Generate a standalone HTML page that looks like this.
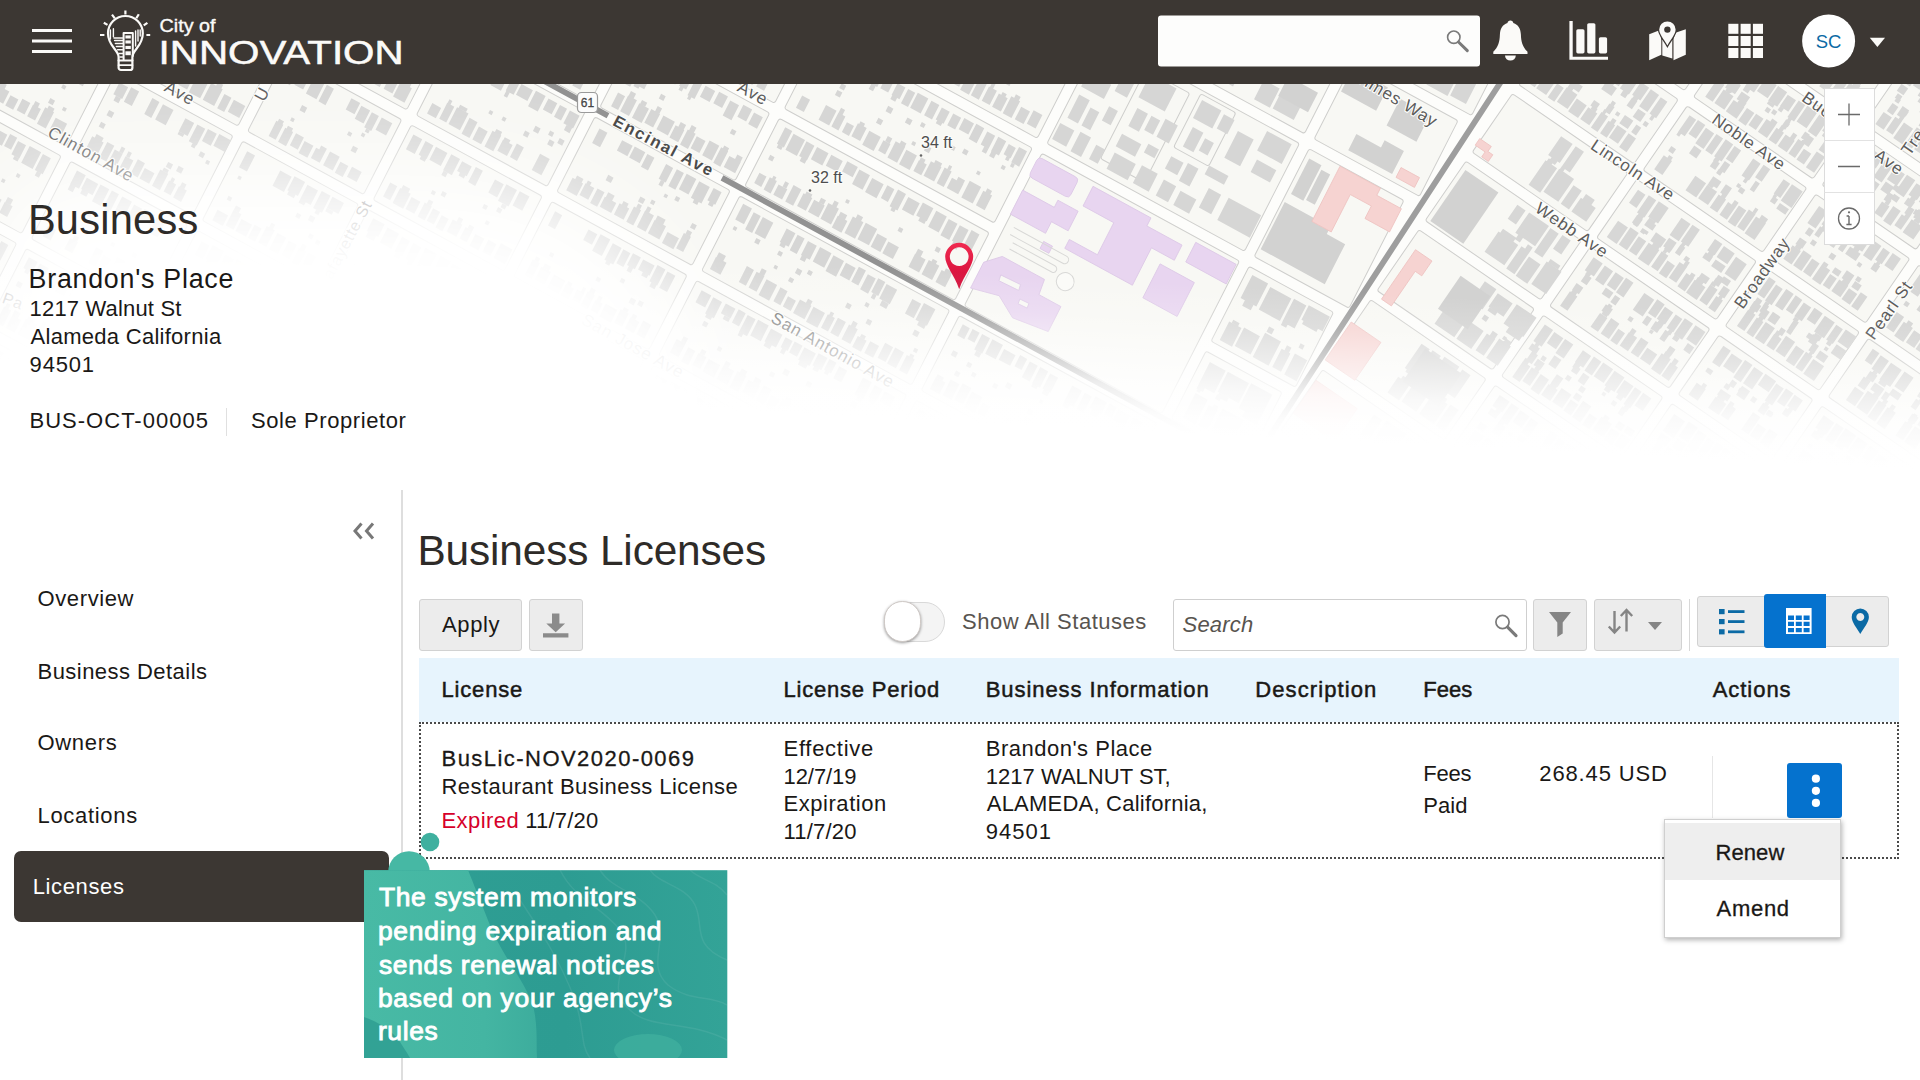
<!DOCTYPE html>
<html lang="en">
<head>
<meta charset="utf-8">
<title>Business Licenses</title>
<style>
*{box-sizing:border-box;margin:0;padding:0}
html,body{width:1920px;height:1080px;overflow:hidden;background:#fff}
body{font-family:"Liberation Sans",sans-serif;color:#1a1816;position:relative}
.abs{position:absolute}
.t{position:absolute;white-space:nowrap;line-height:1}
#hdr{position:absolute;left:0;top:0;width:1920px;height:84px;background:#3c3733}
#map{position:absolute;left:0;top:84px;width:1920px;height:400px;overflow:hidden;background:#fafaf6}
.btn{position:absolute;background:#ececec;border:1px solid #d2d2d2;border-radius:3px}
.med{-webkit-text-stroke:0.5px #1a1816}
.med2{-webkit-text-stroke:0.3px #1a1816}
.cal{-webkit-text-stroke:0.9px #fff}
</style>
</head>
<body>
<div id="map">
<svg width="1920" height="400" viewBox="0 0 1920 400" style="position:absolute;left:0;top:0" font-family="Liberation Sans, sans-serif">
<defs>
<clipPath id="cl"><path d="M-10 -10 H1506 L1302 303 L1232 410 H-10z"/></clipPath>
<clipPath id="cr"><path d="M1506 -10 H1930 V410 H1232 L1302 303z"/></clipPath>
<linearGradient id="fb" gradientUnits="userSpaceOnUse" x1="800" y1="180" x2="792.500" y2="330"><stop offset="0" stop-color="#fff" stop-opacity="0"/><stop offset="0.25" stop-color="#fff" stop-opacity="0.2"/><stop offset="0.45" stop-color="#fff" stop-opacity="0.5"/><stop offset="0.7" stop-color="#fff" stop-opacity="0.85"/><stop offset="0.88" stop-color="#fff" stop-opacity="0.97"/><stop offset="1" stop-color="#fff" stop-opacity="1"/></linearGradient>
<radialGradient id="fg" gradientUnits="userSpaceOnUse" cx="0" cy="0" r="1" gradientTransform="translate(300 256) scale(450 230)"><stop offset="0" stop-color="#fff" stop-opacity="1"/><stop offset="0.45" stop-color="#fff" stop-opacity="1"/><stop offset="0.61" stop-color="#fff" stop-opacity="0.9"/><stop offset="0.735" stop-color="#fff" stop-opacity="0.5"/><stop offset="0.826" stop-color="#fff" stop-opacity="0.25"/><stop offset="1" stop-color="#fff" stop-opacity="0"/></radialGradient>
<linearGradient id="pg" x1="0" y1="0" x2="0" y2="1"><stop offset="0" stop-color="#f02a50"/><stop offset="1" stop-color="#cf0a36"/></linearGradient>
</defs>
<rect width="1920" height="400" fill="#fdfdfb"/>
<g clip-path="url(#cl)"><g transform="matrix(0.8780,0.4787,-0.4540,0.8910,957.0,224.0)">
<g fill="#f8f8f4" stroke="#cececc" stroke-width="1">
<rect x="-1144.5" y="-494.5" width="134" height="79" rx="2.5"/>
<rect x="-999.5" y="-494.5" width="132" height="79" rx="2.5"/>
<rect x="-856.5" y="-494.5" width="133" height="79" rx="2.5"/>
<rect x="-712.5" y="-494.5" width="132" height="79" rx="2.5"/>
<rect x="-569.5" y="-494.5" width="149" height="79" rx="2.5"/>
<rect x="-409.5" y="-494.5" width="154" height="79" rx="2.5"/>
<rect x="-244.5" y="-494.5" width="239" height="79" rx="2.5"/>
<rect x="5.5" y="-494.5" width="225" height="79" rx="2.5"/>
<rect x="-1144.5" y="-404.5" width="134" height="85" rx="2.5"/>
<rect x="-999.5" y="-404.5" width="132" height="85" rx="2.5"/>
<rect x="-856.5" y="-404.5" width="133" height="85" rx="2.5"/>
<rect x="-712.5" y="-404.5" width="132" height="85" rx="2.5"/>
<rect x="-569.5" y="-404.5" width="149" height="85" rx="2.5"/>
<rect x="-409.5" y="-404.5" width="154" height="85" rx="2.5"/>
<rect x="-244.5" y="-404.5" width="239" height="85" rx="2.5"/>
<rect x="5.5" y="-404.5" width="225" height="85" rx="2.5"/>
<rect x="-1144.5" y="-308.5" width="134" height="121" rx="2.5"/>
<rect x="-999.5" y="-308.5" width="132" height="121" rx="2.5"/>
<rect x="-856.5" y="-308.5" width="133" height="121" rx="2.5"/>
<rect x="-712.5" y="-308.5" width="132" height="121" rx="2.5"/>
<rect x="-569.5" y="-308.5" width="149" height="121" rx="2.5"/>
<rect x="-409.5" y="-308.5" width="154" height="121" rx="2.5"/>
<rect x="-244.5" y="-308.5" width="239" height="121" rx="2.5"/>
<rect x="-1144.5" y="-176.5" width="134" height="84" rx="2.5"/>
<rect x="-999.5" y="-176.5" width="132" height="84" rx="2.5"/>
<rect x="-856.5" y="-176.5" width="133" height="84" rx="2.5"/>
<rect x="-712.5" y="-176.5" width="132" height="84" rx="2.5"/>
<rect x="-569.5" y="-176.5" width="149" height="84" rx="2.5"/>
<rect x="-409.5" y="-176.5" width="154" height="84" rx="2.5"/>
<rect x="-244.5" y="-176.5" width="239" height="84" rx="2.5"/>
<rect x="-1144.5" y="-81.5" width="134" height="76" rx="2.5"/>
<rect x="-999.5" y="-81.5" width="132" height="76" rx="2.5"/>
<rect x="-856.5" y="-81.5" width="133" height="76" rx="2.5"/>
<rect x="-712.5" y="-81.5" width="132" height="76" rx="2.5"/>
<rect x="-569.5" y="-81.5" width="149" height="76" rx="2.5"/>
<rect x="-409.5" y="-81.5" width="154" height="76" rx="2.5"/>
<rect x="-244.5" y="-81.5" width="239" height="76" rx="2.5"/>
<rect x="-1144.5" y="5.5" width="134" height="84" rx="2.5"/>
<rect x="-999.5" y="5.5" width="132" height="84" rx="2.5"/>
<rect x="-856.5" y="5.5" width="133" height="84" rx="2.5"/>
<rect x="-712.5" y="5.5" width="132" height="84" rx="2.5"/>
<rect x="-569.5" y="5.5" width="149" height="84" rx="2.5"/>
<rect x="-409.5" y="5.5" width="154" height="84" rx="2.5"/>
<rect x="-244.5" y="5.5" width="239" height="84" rx="2.5"/>
<rect x="5.5" y="5.5" width="225" height="84" rx="2.5"/>
<rect x="-1144.5" y="100.5" width="134" height="84" rx="2.5"/>
<rect x="-999.5" y="100.5" width="132" height="84" rx="2.5"/>
<rect x="-856.5" y="100.5" width="133" height="84" rx="2.5"/>
<rect x="-712.5" y="100.5" width="132" height="84" rx="2.5"/>
<rect x="-569.5" y="100.5" width="149" height="84" rx="2.5"/>
<rect x="-409.5" y="100.5" width="154" height="84" rx="2.5"/>
<rect x="-244.5" y="100.5" width="239" height="84" rx="2.5"/>
<rect x="5.5" y="100.5" width="225" height="84" rx="2.5"/>
<rect x="-1144.5" y="195.5" width="134" height="89" rx="2.5"/>
<rect x="-999.5" y="195.5" width="132" height="89" rx="2.5"/>
<rect x="-856.5" y="195.5" width="133" height="89" rx="2.5"/>
<rect x="-712.5" y="195.5" width="132" height="89" rx="2.5"/>
<rect x="-569.5" y="195.5" width="149" height="89" rx="2.5"/>
<rect x="-409.5" y="195.5" width="154" height="89" rx="2.5"/>
<rect x="-244.5" y="195.5" width="239" height="89" rx="2.5"/>
<rect x="5.5" y="195.5" width="225" height="89" rx="2.5"/>
<rect x="-1144.5" y="295.5" width="134" height="87" rx="2.5"/>
<rect x="-999.5" y="295.5" width="132" height="87" rx="2.5"/>
<rect x="-856.5" y="295.5" width="133" height="87" rx="2.5"/>
<rect x="-712.5" y="295.5" width="132" height="87" rx="2.5"/>
<rect x="-569.5" y="295.5" width="149" height="87" rx="2.5"/>
<rect x="-409.5" y="295.5" width="154" height="87" rx="2.5"/>
<rect x="-244.5" y="295.5" width="239" height="87" rx="2.5"/>
<rect x="5.5" y="295.5" width="225" height="87" rx="2.5"/>
<rect x="-1144.5" y="393.5" width="134" height="86" rx="2.5"/>
<rect x="-999.5" y="393.5" width="132" height="86" rx="2.5"/>
<rect x="-856.5" y="393.5" width="133" height="86" rx="2.5"/>
<rect x="-712.5" y="393.5" width="132" height="86" rx="2.5"/>
<rect x="-569.5" y="393.5" width="149" height="86" rx="2.5"/>
<rect x="-409.5" y="393.5" width="154" height="86" rx="2.5"/>
<rect x="-244.5" y="393.5" width="239" height="86" rx="2.5"/>
<rect x="5.5" y="393.5" width="225" height="86" rx="2.5"/>
<rect x="-1144.5" y="490.5" width="134" height="84" rx="2.5"/>
<rect x="-999.5" y="490.5" width="132" height="84" rx="2.5"/>
<rect x="-856.5" y="490.5" width="133" height="84" rx="2.5"/>
<rect x="-712.5" y="490.5" width="132" height="84" rx="2.5"/>
<rect x="-569.5" y="490.5" width="149" height="84" rx="2.5"/>
<rect x="-409.5" y="490.5" width="154" height="84" rx="2.5"/>
<rect x="-244.5" y="490.5" width="239" height="84" rx="2.5"/>
<rect x="5.5" y="490.5" width="225" height="84" rx="2.5"/>
<rect x="5.5" y="-176.5" width="225" height="171" rx="2.5"/>
<rect x="5.5" y="-308.5" width="225" height="121" rx="2.5"/>
<rect x="60" y="-300" width="50" height="100" rx="2.5"/>
<rect x="120" y="-305" width="40" height="60" rx="2.5"/>
<rect x="241.5" y="-494.5" width="129.8" height="79" rx="2.5"/>
<rect x="241.5" y="-404.5" width="120" height="85" rx="2.5"/>
<rect x="241.5" y="-308.5" width="108" height="121" rx="2.5"/>
<rect x="241.5" y="-176.5" width="96.1" height="84" rx="2.5"/>
<rect x="241.5" y="-81.5" width="86.6" height="76" rx="2.5"/>
<rect x="241.5" y="5.5" width="77" height="84" rx="2.5"/>
<rect x="241.5" y="100.5" width="67" height="84" rx="2.5"/>
<rect x="241.5" y="195.5" width="56.8" height="89" rx="2.5"/>
<rect x="241.5" y="295.5" width="46.4" height="87" rx="2.5"/>
<rect x="241.5" y="393.5" width="36.2" height="86" rx="2.5"/>
<rect x="241.5" y="490.5" width="26.1" height="84" rx="2.5"/>
</g>
<path fill="#d6d6d5" d="M-1137.2 -487h9v14.2h-9zM-1136.4 -472.9h5.2v5.7h-5.2zM-1135 -463.6h4.5v4.5h-4.5zM-1126.1 -487.8h8v18.6h-8zM-1125.3 -469.2h4.6v3.1h-4.6zM-1115.8 -488.6h11v12.2h-11zM-1114.3 -460.4h5v5h-5zM-1101.6 -488h8v15.5h-8zM-1090.6 -489h12v13.9h-12zM-1089.2 -461.5h4.3v4.3h-4.3zM-1075.6 -487.2h8v11.9h-8zM-1073.1 -475.3h4.4v3.1h-4.4zM-1064.3 -488h10v13.7h-10zM-1061.5 -463.3h3.7v3.7h-3.7zM-1038.4 -488.5h10v16.7h-10zM-1025 -489.1h12v11.5h-12zM-1024.5 -477.6h6.2v5.6h-6.2zM-1135 -439.7h11v17.9h-11zM-1134.4 -445.5h7.3v5.9h-7.3zM-1133 -450.4h4.1v4.1h-4.1zM-1120.7 -435.4h10v13.3h-10zM-1108.4 -441.3h13v18.6h-13zM-1105.4 -447.2h8.6v5.9h-8.6zM-1092.5 -432.5h11v11.8h-11zM-1090.5 -436h5.1v3.5h-5.1zM-1092.1 -449.2h3.5v3.5h-3.5zM-1078.7 -433.2h8v11.6h-8zM-1067.4 -435.5h12v12h-12zM-1066.8 -438.7h6.5v3.3h-6.5zM-1052.8 -438.5h9v15.1h-9zM-1050.1 -444.2h5.5v5.7h-5.5zM-1049.4 -450.3h5.1v5.1h-5.1zM-1040.7 -436h9v13.8h-9zM-1028.3 -440.2h9v17.4h-9zM-1028.2 -444.2h5v4.1h-5zM-1025.6 -450.8h4.2v4.2h-4.2zM-991.7 -488.8h10v18.6h-10zM-988.3 -470.2h4.6v3.6h-4.6zM-977.9 -487.6h12v18.3h-12zM-977.1 -459.8h4.5v4.5h-4.5zM-961.9 -487.1h11v17.3h-11zM-948 -489.1h8v16.8h-8zM-947.6 -472.3h5.4v5.4h-5.4zM-935.9 -489.4h10v12.2h-10zM-923.6 -487h9v14.5h-9zM-922.5 -472.6h4.3v3.9h-4.3zM-912.1 -487.3h11v17.7h-11zM-897.3 -488h13v14.4h-13zM-882.2 -487.2h12v17.2h-12zM-881.4 -470h5.3v4.9h-5.3zM-880.3 -461.3h5.2v5.2h-5.2zM-990 -435.8h8v13h-8zM-978.3 -436.6h8v14.5h-8zM-967.3 -438.7h13v17.5h-13zM-950.3 -440h13v18.1h-13zM-946.1 -443.9h6.7v3.9h-6.7zM-934.8 -438.2h10v17.3h-10zM-922.5 -442.1h9v18.7h-9zM-919.1 -448.1h4.9v6h-4.9zM-921.1 -453.2h4.6v4.6h-4.6zM-911 -433.3h10v11.7h-10zM-909 -437.4h6.1v4.2h-6.1zM-907.4 -451.3h5.9v5.9h-5.9zM-898.5 -434.9h8v11.7h-8zM-896 -440.3h5v5.5h-5zM-886.5 -434.4h11v12.2h-11zM-884.8 -453.6h3.6v3.6h-3.6zM-846.7 -486.9h8v17.4h-8zM-845.8 -469.5h5.3v4.4h-5.3zM-834.7 -487.4h10v16h-10zM-822.1 -488.6h9v12.6h-9zM-820.7 -464.1h4.8v4.8h-4.8zM-811.1 -488h10v11.3h-10zM-798.6 -488.2h12v11.9h-12zM-796.4 -476.4h7.8v4.2h-7.8zM-782.4 -487.3h10v12.6h-10zM-779.9 -474.7h7v5.9h-7zM-780.7 -458.5h5.1v5.1h-5.1zM-770.3 -488.7h11v18h-11zM-769.4 -470.7h5.4v4.4h-5.4zM-756.7 -488.8h10v18.8h-10zM-743.9 -488.7h8v13.7h-8zM-740.6 -464.8h5.4v5.4h-5.4zM-848.2 -432.4h11v11.2h-11zM-833.5 -439.1h11v17.1h-11zM-829.7 -442.5h6.4v3.4h-6.4zM-819.4 -437.8h11v16.9h-11zM-804.5 -440.8h8v17.6h-8zM-794 -434.7h8v11.3h-8zM-794 -437.9h4.3v3.2h-4.3zM-783.5 -433.8h10v11h-10zM-770 -439.9h8v17h-8zM-767.4 -451.7h5.4v5.4h-5.4zM-759 -433h11v11.6h-11zM-756.3 -436.6h6.5v3.6h-6.5zM-744.6 -437.9h10v16h-10zM-743.9 -441.2h6.9v3.3h-6.9zM-705.4 -486.8h12v14.7h-12zM-705.3 -472.1h8.3v5.8h-8.3zM-689.6 -486.8h12v19h-12zM-688.5 -459.5h3.7v3.7h-3.7zM-674.8 -488.4h13v13.2h-13zM-674.1 -475.2h8.6v4.2h-8.6zM-658.3 -488.5h11v13.4h-11zM-655.4 -475.1h7.2v3h-7.2zM-645 -488.6h9v16.7h-9zM-642.4 -471.9h4.7v6h-4.7zM-633.1 -489.3h10v17.8h-10zM-620.7 -487.2h10v14.5h-10zM-594.5 -488.1h8v11.4h-8zM-706.3 -433.5h13v12h-13zM-705 -439.5h8.1v5.9h-8.1zM-690.6 -438.8h13v16.4h-13zM-687.4 -444.2h7.2v5.4h-7.2zM-674.9 -435.7h12v14.4h-12zM-673 -439.6h6.8v4h-6.8zM-660.5 -438.7h8v17h-8zM-649.7 -436.6h8v15h-8zM-638 -433.4h9v11.7h-9zM-626.3 -434.8h8v12h-8zM-615.2 -437.1h8v14.1h-8zM-604.7 -436.2h8v12.8h-8zM-602.3 -441.3h5.2v5.1h-5.2zM-594.5 -433.2h8v11h-8zM-592.6 -439.1h4.9v5.9h-4.9zM-560.4 -487.8h8v11.6h-8zM-560.4 -476.2h3.7v4.8h-3.7zM-549.4 -488.1h10v16.2h-10zM-545.7 -471.9h4.7v5.9h-4.7zM-537.4 -489.3h12v18.1h-12zM-534.6 -471.2h6.3v4.1h-6.3zM-521.8 -487.1h10v16.5h-10zM-509.4 -488.8h9v13.5h-9zM-506.2 -475.3h5.7v3.9h-5.7zM-497.9 -489.3h9v14.9h-9zM-486.8 -489.3h8v18.8h-8zM-483.4 -470.6h4.1v5.7h-4.1zM-474.6 -486.7h9v13.6h-9zM-473.1 -462.5h5.2v5.2h-5.2zM-462.9 -489.3h9v11.9h-9zM-460.6 -477.4h6v4.7h-6zM-450.2 -489.4h10v17.6h-10zM-449.3 -471.8h5.1v5.8h-5.1zM-436.2 -487.6h8v16.1h-8zM-433.1 -471.6h4.1v4.4h-4.1zM-433.8 -465h4v4h-4zM-562.2 -434.5h8v13.1h-8zM-557.8 -439.8h3.2v5.3h-3.2zM-550.1 -440.3h8v17.6h-8zM-547.4 -445.6h5.1v5.4h-5.1zM-539.8 -435.2h12v12.5h-12zM-524.5 -440.7h10v17.9h-10zM-511.6 -433.6h9v13h-9zM-498.4 -439.7h8v18.9h-8zM-496.8 -444.8h4.4v5.1h-4.4zM-495.7 -454h4.5v4.5h-4.5zM-486.8 -438.6h8v17.2h-8zM-485 -442.4h3.8v3.8h-3.8zM-483.2 -450.8h4.1v4.1h-4.1zM-465.3 -438.1h9v16.2h-9zM-464 -443.7h3.6v5.6h-3.6zM-453.4 -435.2h10v12.9h-10zM-452.7 -452.3h3.7v3.7h-3.7zM-440.1 -434.2h8v11.8h-8zM-439.3 -437.6h4.1v3.4h-4.1zM-439.3 -454.7h5v5h-5zM-402.2 -488.9h10v12.5h-10zM-390.1 -489h8v17.4h-8zM-379.2 -488.6h10v14.3h-10zM-365.9 -487.2h10v14.3h-10zM-353.1 -486.8h11v12.6h-11zM-349.6 -474.2h7.1v4.2h-7.1zM-339.7 -487.1h8v11.4h-8zM-337.2 -475.7h4.6v5.8h-4.6zM-339 -464.2h4.4v4.4h-4.4zM-329.6 -486.6h11v14.9h-11zM-323.5 -471.7h4.8v5.8h-4.8zM-316.4 -487.4h11v11.7h-11zM-301.6 -488.1h11v15.9h-11zM-300.1 -464.2h5.8v5.8h-5.8zM-288.2 -487.2h9v11.3h-9zM-286.4 -475.9h5.9v3.4h-5.9zM-275.9 -488.8h10v16.2h-10zM-275 -472.6h5.1v4.5h-5.1zM-274.1 -461.8h6v6h-6zM-400.2 -438.2h9v17.5h-9zM-398 -443.6h4.6v5.4h-4.6zM-389.1 -434.5h9v11.7h-9zM-385.3 -452.3h4.8v4.8h-4.8zM-377.8 -441.9h8v19h-8zM-375.5 -446.4h5.6v4.5h-5.6zM-367.5 -434.3h9v11.5h-9zM-365 -438.1h6v3.8h-6zM-366.6 -456.6h4.8v4.8h-4.8zM-355.9 -434h13v12.9h-13zM-354.2 -437.8h7.7v3.8h-7.7zM-339.2 -434.3h10v11.9h-10zM-337.2 -439h6.6v4.7h-6.6zM-326.9 -438.9h13v16h-13zM-325.5 -443.7h9.1v4.7h-9.1zM-299.3 -436.5h13v13h-13zM-283.6 -438.3h8v17h-8zM-272.8 -434.5h8v12.1h-8zM-272.3 -438.6h3.2v4.1h-3.2zM-236.2 -488.1h14v18.9h-14zM-235.5 -469.2h9.5v3.7h-9.5zM-233 -458.5h5.1v5.1h-5.1zM-219.3 -487h18v29.5h-18zM-198 -489.4h24v19.5h-24zM-171.5 -487.7h10v28.8h-10zM-168.9 -461.4h4.5v4.5h-4.5zM-158.1 -488.6h24v27.4h-24zM-147.1 -461.2h9.9v5.7h-9.9zM-132 -487.3h24v26.4h-24zM-129.1 -460.8h11.2v3.3h-11.2zM-129.3 -459.5h4.3v4.3h-4.3zM-104.2 -488.2h10v19.7h-10zM-91.6 -489h14v17.2h-14zM-75.2 -486.9h14v26.4h-14zM-70.5 -460.4h6.6v5.7h-6.6zM-57.7 -489.5h24v22.6h-24zM-51 -466.9h16.5v3.7h-16.5zM-30.8 -489.4h10v23.9h-10zM-26.8 -465.5h5.9v3.5h-5.9zM-18.8 -487.4h14v25.7h-14zM-15.5 -462.6h5v5h-5zM-234.9 -450.9h10v28.3h-10zM-234.8 -454.6h4.7v3.6h-4.7zM-220.9 -448.9h10v27.6h-10zM-219.8 -454.2h4.3v5.3h-4.3zM-195.9 -451.1h18v28.7h-18zM-188.6 -456.3h8.8v5.2h-8.8zM-194 -450.1h4.8v4.8h-4.8zM-175.8 -448.2h14v26h-14zM-173.9 -452.8h7.4v4.6h-7.4zM-159.7 -445.8h18v22.9h-18zM-152.9 -449.8h9.9v4h-9.9zM-158.8 -452.6h5.9v5.9h-5.9zM-110.4 -449.9h24v27h-24zM-83.6 -450.3h24v28.5h-24zM-56.9 -450.3h24v28.6h-24zM-53.9 -453.4h4.7v4.7h-4.7zM-29.2 -441.8h10v20.9h-10zM12.2 -488.8h24v25.6h-24zM17.1 -463.2h14.2v5.1h-14.2zM14.6 -458.9h5.4v5.4h-5.4zM39.8 -488.5h14v26.1h-14zM44 -462.3h9.6v3.8h-9.6zM56.1 -489.1h10v18.7h-10zM56.7 -470.3h4.9v3.8h-4.9zM68.7 -486.9h24v22.5h-24zM72.5 -464.4h11.2v5.9h-11.2zM68.8 -459.6h4.1v4.1h-4.1zM95.3 -487.6h24v25.8h-24zM122.7 -488.1h14v25.5h-14zM125.1 -462.6h8.2v3.3h-8.2zM140.3 -488.1h14v19.5h-14zM157.8 -489.5h14v28.5h-14zM174 -487.2h18v23.6h-18zM194.2 -488h24v23.6h-24zM13.1 -440.6h24v18.9h-24zM13.4 -453.3h6v6h-6zM39.7 -440.1h24v16.9h-24zM67 -442.5h10v19.1h-10zM67.9 -453.1h5.5v5.5h-5.5zM79.3 -449.2h10v27.3h-10zM81.9 -453.2h5.9v5.9h-5.9zM93.1 -444.7h24v22.6h-24zM100.3 -448.8h15.6v4.1h-15.6zM94.8 -451h4.4v4.4h-4.4zM119.5 -448.9h10v27.3h-10zM132.6 -448.5h10v25.2h-10zM135.7 -457.3h5.6v5.6h-5.6zM144.9 -445.4h18v24.9h-18zM165.4 -445.2h10v24.1h-10zM166.9 -448.8h6.4v3.6h-6.4zM178.8 -448.2h10v25.4h-10zM181.8 -454h5.2v5.2h-5.2zM191.7 -445h10v23.8h-10zM193.9 -448.1h5.5v3.2h-5.5zM193.9 -453.2h4.7v4.7h-4.7zM205.6 -440.8h10v18.2h-10zM207.8 -445.2h4.9v4.4h-4.9zM-1137.8 -397.7h10v16.1h-10zM-1125.1 -396.8h8v15.1h-8zM-1124 -381.7h4.9v4.9h-4.9zM-1114.2 -396.8h12v17.2h-12zM-1113.9 -379.5h6v3.8h-6zM-1112.9 -371.6h4.4v4.4h-4.4zM-1098.1 -398h13v13.8h-13zM-1097.2 -384.3h6v5.1h-6zM-1082.9 -398.3h8v14.2h-8zM-1072.6 -397.7h8v12.5h-8zM-1060.6 -397.4h11v15.9h-11zM-1047.2 -397.5h12v16h-12zM-1033 -397.1h8v14h-8zM-1031.7 -372.1h4.3v4.3h-4.3zM-1135.9 -342h8v15h-8zM-1124.4 -340.2h11v14.6h-11zM-1109.2 -341.9h12v17.2h-12zM-1107.5 -346.8h8v4.9h-8zM-1105.8 -361.6h5.2v5.2h-5.2zM-1094.8 -338.7h8v12h-8zM-1094.6 -342.3h5v3.6h-5zM-1083.2 -343.2h9v16.8h-9zM-1070.1 -342.9h10v18.3h-10zM-1068.1 -348h6.6v5.1h-6.6zM-1057.5 -345h9v18.7h-9zM-1056.1 -350.2h6.2v5.2h-6.2zM-1053.6 -355.3h5.9v5.9h-5.9zM-1046.1 -340.7h11v14.8h-11zM-1044.9 -344.7h6.9v4h-6.9zM-1031.7 -342.5h10v18h-10zM-1028.2 -347.3h6.5v4.8h-6.5zM-1028.6 -356h4.5v4.5h-4.5zM-991.7 -399h8v13.6h-8zM-980 -396.9h10v17.7h-10zM-977.2 -369h5.6v5.6h-5.6zM-966 -398h10v15.3h-10zM-962.4 -382.8h6.4v5.2h-6.4zM-953.8 -398.7h11v14.7h-11zM-939.8 -399.3h8v15.3h-8zM-936.9 -384h4.5v3.8h-4.5zM-928.7 -399h9v12.5h-9zM-916.5 -398.8h11v17.2h-11zM-901.6 -399h10v16.1h-10zM-888.4 -396.9h8v11.8h-8zM-976.1 -338.1h9v13h-9zM-973.2 -341.3h3.8v3.2h-3.8zM-964.1 -345.2h8v17.9h-8zM-963.7 -354.7h4.3v4.3h-4.3zM-952.1 -339.1h13v14.1h-13zM-926.5 -342.9h13v18.2h-13zM-910 -338.2h12v11.4h-12zM-895.4 -342.5h12v17.1h-12zM-894.2 -347h5.2v4.4h-5.2zM-895.3 -357.8h3.9v3.9h-3.9zM-879.8 -344.4h9v17.4h-9zM-877 -348.5h5.3v4.1h-5.3zM-846.8 -398.1h11v17.7h-11zM-844.4 -380.4h7.1v4.4h-7.1zM-843.9 -375h4.1v4.1h-4.1zM-832.6 -398.2h9v14.5h-9zM-831 -383.7h3.7v4.7h-3.7zM-821 -399.2h8v13.5h-8zM-820.2 -370.2h5.7v5.7h-5.7zM-810 -396.6h10v12h-10zM-808.7 -384.6h4.8v3.7h-4.8zM-797 -398.6h9v11.5h-9zM-796.5 -372.8h5.5v5.5h-5.5zM-786 -399.4h13v13.3h-13zM-780.4 -386.1h6.3v3.5h-6.3zM-770.5 -399.2h9v12.6h-9zM-758.9 -397.6h9v12.1h-9zM-755.8 -385.5h4.4v3h-4.4zM-746.1 -398.7h8v15.1h-8zM-735.9 -396.9h11v18.3h-11zM-733.7 -378.6h5v5.5h-5zM-735.9 -370.7h4.4v4.4h-4.4zM-848.7 -336.8h13v11.6h-13zM-832 -341h11v15.6h-11zM-831.9 -345.3h6.8v4.3h-6.8zM-818.7 -343.8h9v18.7h-9zM-818.6 -349.2h4.3v5.5h-4.3zM-818.6 -355.3h5.2v5.2h-5.2zM-806.4 -340h12v15.2h-12zM-792.3 -341.5h8v14.7h-8zM-789.8 -347.2h3.5v5.7h-3.5zM-790.4 -357.9h4.1v4.1h-4.1zM-781.4 -344.3h8v18.5h-8zM-770.5 -342.4h8v17.2h-8zM-767.5 -348.4h4.2v5.9h-4.2zM-758.8 -338.8h13v11.4h-13zM-757.3 -358.1h4.6v4.6h-4.6zM-742.6 -340.1h8v13.6h-8zM-738.8 -344.3h4.2v4.2h-4.2zM-702.6 -398.7h8v11.3h-8zM-700.1 -368.1h4.9v4.9h-4.9zM-692 -399.4h13v11.1h-13zM-691.6 -388.3h6.6v3.5h-6.6zM-675 -396.7h10v11.7h-10zM-670.9 -385h5.5v5.7h-5.5zM-662.4 -398.1h8v16.9h-8zM-660.9 -371.1h4.5v4.5h-4.5zM-650.4 -398.6h10v15.9h-10zM-648.4 -382.7h4.7v4.5h-4.7zM-625.7 -396.5h10v14.9h-10zM-625.5 -381.6h6.3v3.5h-6.3zM-612.7 -398.4h8v15.1h-8zM-600.6 -399.1h9v14.3h-9zM-597.4 -384.7h5.2v3.8h-5.2zM-596.6 -368.1h5.6v5.6h-5.6zM-704 -340h9v14.3h-9zM-703.4 -360.9h4.5v4.5h-4.5zM-691.1 -343.6h10v18h-10zM-689.8 -348.8h5.4v5.2h-5.4zM-677.9 -342.9h11v16.2h-11zM-664.2 -339.7h13v13.4h-13zM-660.9 -356.9h5.8v5.8h-5.8zM-647.4 -339.9h10v12.6h-10zM-644.5 -344.6h4.1v4.7h-4.1zM-633.7 -342.9h13v16h-13zM-617.7 -343.1h8v15.8h-8zM-607.4 -342.3h10v15h-10zM-605.3 -346.6h4.6v4.3h-4.6zM-593.5 -341.3h10v16.5h-10zM-591.9 -344.5h5.1v3.2h-5.1zM-592.1 -356h5.1v5.1h-5.1zM-561.5 -397.1h11v16h-11zM-561.2 -381h7.3v4.2h-7.3zM-548.2 -399.5h8v16.5h-8zM-536.2 -397.5h11v17.7h-11zM-534.9 -379.8h6v4.7h-6zM-522 -399.1h9v15.6h-9zM-521.7 -383.5h5.7v3.3h-5.7zM-519.6 -368.9h4.8v4.8h-4.8zM-509.3 -397.8h8v16.2h-8zM-509.1 -381.6h3.8v3.8h-3.8zM-497.4 -398.3h8v13.8h-8zM-494.8 -384.6h5.3v4.7h-5.3zM-486 -397.7h9v12.8h-9zM-483.6 -385h3.6v5.6h-3.6zM-474.5 -397.5h12v18.8h-12zM-459.5 -397.1h11v18h-11zM-458.4 -379.1h5v4.1h-5zM-445.9 -396.9h13v13.9h-13zM-443.7 -383h7.7v5.9h-7.7zM-562 -337.9h12v13.3h-12zM-547.6 -338.7h9v11.7h-9zM-544.2 -344.3h4.8v5.5h-4.8zM-546.1 -358.7h4.4v4.4h-4.4zM-534.5 -338.5h9v13.4h-9zM-521.4 -343.2h10v15.8h-10zM-508.3 -344h9v18h-9zM-505.7 -357h5.4v5.4h-5.4zM-496.1 -337.7h10v11.1h-10zM-495.8 -359.6h4v4h-4zM-482 -343.7h13v17.1h-13zM-479.4 -349.2h6.3v5.5h-6.3zM-465.2 -344.3h12v17.2h-12zM-461 -347.4h5.8v3.1h-5.8zM-450.4 -337.1h11v11.2h-11zM-435.4 -339.7h8v12.5h-8zM-403.3 -399h9v14.4h-9zM-391 -398h9v15.5h-9zM-378.5 -397.2h10v18.5h-10zM-364.6 -399.4h8v18.8h-8zM-361.9 -380.6h5.1v4h-5.1zM-352.9 -396.7h9v13.2h-9zM-350.8 -383.4h6.1v5.1h-6.1zM-340.5 -398.9h12v15.1h-12zM-324.8 -397.4h12v17.1h-12zM-322.3 -367.7h4.9v4.9h-4.9zM-309.6 -398.5h9v18.7h-9zM-307.1 -379.7h5.3v3.4h-5.3zM-297.6 -399.1h9v11h-9zM-286.3 -397.6h9v15.7h-9zM-283.4 -381.9h4.7v5.8h-4.7zM-284.6 -368.8h5.9v5.9h-5.9zM-274.8 -399.4h10v11.1h-10zM-402.3 -338.5h8v12.3h-8zM-400.6 -341.6h4.5v3.1h-4.5zM-391.2 -343.7h10v18.8h-10zM-388.6 -347.2h5.3v3.6h-5.3zM-388.7 -359.5h5.8v5.8h-5.8zM-377.1 -343h10v16.2h-10zM-375.4 -346.4h5.2v3.4h-5.2zM-364 -337.2h9v11.8h-9zM-351.6 -339.7h10v13.6h-10zM-351.4 -343.4h6.5v3.7h-6.5zM-308.8 -337.1h8v12.1h-8zM-296.6 -340.5h12v14.8h-12zM-294.1 -346h7v5.5h-7zM-293.8 -352.6h3.7v3.7h-3.7zM-280.6 -341.5h8v14.5h-8zM-278.4 -356.3h4.2v4.2h-4.2zM-269.9 -340.8h9v14.8h-9zM-269.3 -345.7h5v4.9h-5zM-238.2 -397.5h10v26.1h-10zM-225.4 -396.8h14v20.2h-14zM-222 -376.7h6.4v5h-6.4zM-223 -372.5h5.2v5.2h-5.2zM-208.4 -399.2h14v23.9h-14zM-207.9 -375.2h9.3v4.6h-9.3zM-191.9 -397.4h10v18.6h-10zM-188.7 -378.7h5.4v4.6h-5.4zM-177.9 -397.1h10v27.9h-10zM-174.1 -369.2h5.5v4.5h-5.5zM-164.5 -397.9h10v22.4h-10zM-163 -374.8h4.7v4.7h-4.7zM-151.1 -399.5h24v19.3h-24zM-149.4 -369.8h4.2v4.2h-4.2zM-123.2 -396.9h14v23.9h-14zM-119.2 -373h8.7v4h-8.7zM-105.4 -397.9h10v19.4h-10zM-103.8 -378.6h5.5v5.4h-5.5zM-92.7 -398.8h10v16.5h-10zM-88.8 -382.3h6.1v3.1h-6.1zM-78.9 -398.9h24v17.5h-24zM-78.3 -372.5h5.2v5.2h-5.2zM-51 -398.5h18v29.3h-18zM-44.5 -369.2h9.9v5.6h-9.9zM-48.3 -369h4v4h-4zM-30.1 -398.2h24v29.5h-24zM-27.4 -368.6h16.5v4.6h-16.5zM-238 -345.6h10v19h-10zM-236.5 -351.5h5.4v5.8h-5.4zM-224.9 -343.7h14v16.3h-14zM-222.8 -348.8h6.2v5h-6.2zM-222.6 -355.3h4.8v4.8h-4.8zM-207.8 -356.1h14v29.9h-14zM-190 -348h10v21.1h-10zM-176.5 -355.1h18v29.5h-18zM-175.2 -359.9h5.7v5.7h-5.7zM-155 -354.4h18v28.4h-18zM-132.8 -345h14v17.9h-14zM-130.8 -349.7h7.5v4.7h-7.5zM-131.6 -354.6h3.7v3.7h-3.7zM-115.2 -344.3h18v17h-18zM-94.4 -346.8h24v21h-24zM-93.3 -360.4h4.7v4.7h-4.7zM-67.9 -351.8h10v26.6h-10zM-62.6 -356.2h4.1v4.3h-4.1zM-66.9 -354.1h4.8v4.8h-4.8zM-55.7 -351.3h14v24.4h-14zM-39.4 -344.3h14v19.8h-14zM-32.2 -348.3h5.7v4h-5.7zM-36.2 -358.1h4.7v4.7h-4.7zM-23.1 -353.5h24v27.1h-24zM15.3 -397.5h10v16.4h-10zM19.2 -381.2h5.2v5.1h-5.2zM17.4 -373.8h3.5v3.5h-3.5zM29.1 -397.9h18v27.4h-18zM50.6 -397.1h18v19.2h-18zM57.5 -377.8h7.4v4.9h-7.4zM72.1 -398.7h18v21.1h-18zM78.4 -377.6h10.2v3.3h-10.2zM110.5 -398.9h14v17.7h-14zM114.1 -369.6h5v5h-5zM128.4 -397.4h14v23.4h-14zM132.8 -374h9.2v3.6h-9.2zM145.3 -399.2h14v20.5h-14zM148.7 -372.3h5.1v5.1h-5.1zM161.4 -396.7h24v21.7h-24zM163.1 -373.4h4.1v4.1h-4.1zM187.9 -398.7h14v20.6h-14zM15.3 -353h14v27.5h-14zM18.5 -356.5h9.3v3.5h-9.3zM32.3 -355.5h10v28.4h-10zM33 -361.1h6.3v5.6h-6.3zM46.5 -350.5h18v25.6h-18zM47.9 -356.8h4.3v4.3h-4.3zM68.2 -351.1h24v25.6h-24zM96.1 -350.6h10v24.2h-10zM99.3 -355.4h4.4v4.8h-4.4zM109.7 -357h10v29.9h-10zM111.6 -360.4h5.5v3.4h-5.5zM112.7 -354.9h5.2v5.2h-5.2zM122.8 -350.8h10v23.4h-10zM125.8 -356.4h6.9v5.6h-6.9zM122.9 -357.8h3.7v3.7h-3.7zM135.4 -345.6h10v18.8h-10zM137.2 -353.1h4.3v4.3h-4.3zM169.9 -347.3h18v21.6h-18zM190.8 -353.7h24v27.3h-24zM198.3 -359.6h13.2v6h-13.2zM-1135.2 -303.4h8v11.7h-8zM-1124 -300.6h12v15.4h-12zM-1121.7 -285.2h7.5v5.6h-7.5zM-1107.8 -300.9h9v17.6h-9zM-1106.4 -283.3h3.8v5.9h-3.8zM-1095 -302.8h8v16h-8zM-1092.1 -275.7h5.8v5.8h-5.8zM-1069.7 -303h13v13.9h-13zM-1066.2 -289.1h7.8v3.5h-7.8zM-1067.1 -272.7h5.9v5.9h-5.9zM-1052.7 -301h10v14.1h-10zM-1052.1 -287h4.5v3.8h-4.5zM-1038.9 -302.7h13v13.4h-13zM-1035.1 -289.3h6.9v3.3h-6.9zM-1023.5 -302.4h13v12.2h-13zM-1022 -276.8h4.4v4.4h-4.4zM-1137.7 -206.1h10v11.5h-10zM-1133.5 -209.8h5v3.7h-5zM-1136.9 -228.5h5.1v5.1h-5.1zM-1124.8 -208.6h10v15.9h-10zM-1123.3 -213.7h5.1v5.1h-5.1zM-1111.3 -208.1h10v13.8h-10zM-1109.9 -228.1h5.9v5.9h-5.9zM-1097.9 -211.7h10v17.9h-10zM-1094.8 -217.5h5.2v5.8h-5.2zM-1085.6 -212.3h12v18.5h-12zM-1085.1 -223.3h3.7v3.7h-3.7zM-1070 -210.1h8v16.4h-8zM-1067.5 -214.7h4.8v4.7h-4.8zM-1059.7 -210.3h9v17.8h-9zM-1058.3 -214h5.9v3.6h-5.9zM-1048.3 -209.4h10v14.9h-10zM-1044.8 -215.4h5.8v6h-5.8zM-1023.6 -206.6h13v13.2h-13zM-1021.3 -211.3h8.5v4.7h-8.5zM-992.3 -302.7h11v17.4h-11zM-989.9 -285.3h4.6v4.6h-4.6zM-978.2 -302.9h9v13.9h-9zM-967.1 -300.6h10v11.1h-10zM-966.3 -276h4v4h-4zM-954.6 -302.9h12v14.2h-12zM-953.8 -288.6h5.4v5.6h-5.4zM-952.6 -273h5.7v5.7h-5.7zM-940.6 -302.8h13v16.9h-13zM-923.8 -300.7h13v17.7h-13zM-918 -283h5.6v3.3h-5.6zM-907.9 -302.2h10v16.6h-10zM-895.6 -302.8h9v17.7h-9zM-883.4 -301.9h9v13.5h-9zM-882.7 -288.4h6.2v5h-6.2zM-992.9 -205.6h10v12.8h-10zM-990.3 -209.9h6.2v4.3h-6.2zM-989.2 -223h5.6v5.6h-5.6zM-978.7 -208.8h13v15.2h-13zM-961.6 -206h8v12.6h-8zM-951.2 -208.2h12v13.2h-12zM-948.9 -211.3h8.1v3.1h-8.1zM-936.4 -209.8h9v16.3h-9zM-935.6 -215h4.3v5.2h-4.3zM-924.8 -211.5h8v16.8h-8zM-924.6 -215.7h3.6v4.2h-3.6zM-922 -224.8h4.9v4.9h-4.9zM-913.9 -206.3h10v11.6h-10zM-913.8 -209.6h6v3.3h-6zM-900 -207.3h10v12.2h-10zM-899.5 -211.9h5.5v4.6h-5.5zM-887.7 -206.7h13v11.3h-13zM-882.5 -212.6h7.4v6h-7.4zM-838.5 -301.2h9v16.5h-9zM-836.6 -284.7h4.3v3.1h-4.3zM-826.8 -302.8h8v11.7h-8zM-815.3 -302.5h8v17.6h-8zM-814.5 -284.9h3.7v5.3h-3.7zM-805.1 -302.5h12v15.7h-12zM-791 -303h9v12.2h-9zM-779.6 -303.3h9v16.5h-9zM-778 -286.8h6v3.1h-6zM-768.4 -301h8v12.6h-8zM-767.8 -276.7h5.3v5.3h-5.3zM-756.3 -300.7h12v12.1h-12zM-740.4 -301.1h9v14.5h-9zM-736.7 -275.2h5.9v5.9h-5.9zM-846.6 -210.2h10v17h-10zM-832.7 -209h8v14.1h-8zM-820.9 -213.1h11v18.6h-11zM-805.9 -211.3h11v17.3h-11zM-803.3 -216.7h4.8v5.4h-4.8zM-791.9 -209h10v15.4h-10zM-786 -213.1h4.1v4h-4.1zM-789.7 -225.5h5.7v5.7h-5.7zM-779.4 -211.4h9v16.5h-9zM-777.7 -217.3h4.3v5.9h-4.3zM-775.8 -227.1h5.7v5.7h-5.7zM-767.5 -208.4h12v13.5h-12zM-751.4 -208.2h11v15.2h-11zM-736.6 -212.3h10v16.9h-10zM-706 -301.6h10v16.3h-10zM-703.9 -285.3h6.9v4.1h-6.9zM-693.1 -301.5h13v17.5h-13zM-688.7 -284.1h7.9v3.1h-7.9zM-677.9 -300.8h11v14.6h-11zM-664.8 -300.7h10v14.9h-10zM-662 -285.8h4.6v5.8h-4.6zM-652.4 -301.2h10v16h-10zM-652 -285.2h5.6v4.2h-5.6zM-639 -301.4h12v18.7h-12zM-633.5 -282.7h5.4v4.7h-5.4zM-624.2 -303.3h9v12.6h-9zM-620.6 -290.7h5v5h-5zM-611.1 -302.6h10v18.7h-10zM-610.7 -276h4.3v4.3h-4.3zM-598.5 -302.1h11v13.6h-11zM-596.8 -288.5h7.5v4.9h-7.5zM-702.9 -206.1h8v12.2h-8zM-691.3 -207.8h10v14.1h-10zM-679 -212.2h12v17.2h-12zM-662.9 -214h10v18.8h-10zM-659.4 -219.5h5.8v5.5h-5.8zM-636.5 -212.5h8v17.2h-8zM-625.6 -208.9h10v13.8h-10zM-612.2 -204.8h10v12.1h-10zM-609.2 -210.3h5.5v5.6h-5.5zM-599.3 -212.3h10v17.3h-10zM-598 -217.9h4.7v5.5h-4.7zM-595.4 -221h4.2v4.2h-4.2zM-562 -301.4h10v12.1h-10zM-558.7 -274.7h3.7v3.7h-3.7zM-549.4 -302.4h9v18.2h-9zM-538.2 -301h8v16.6h-8zM-537.5 -284.4h3.2v4.9h-3.2zM-536 -275.9h3.6v3.6h-3.6zM-526.4 -302h8v15.3h-8zM-525.1 -286.7h5.4v5.9h-5.4zM-525.3 -272.9h4.9v4.9h-4.9zM-514.3 -303h13v16.7h-13zM-513.2 -271.9h4.4v4.4h-4.4zM-499.1 -301.7h8v14.2h-8zM-496.9 -287.5h5.3v6h-5.3zM-488.4 -303.1h10v11.6h-10zM-486.6 -291.5h6v5.1h-6zM-475.9 -303.3h11v12.3h-11zM-473 -273.2h5.4v5.4h-5.4zM-461.2 -300.6h9v15.5h-9zM-448.2 -303.5h8v11.5h-8zM-436.8 -301.8h10v15.5h-10zM-433.2 -286.3h5.1v3.3h-5.1zM-563.4 -212.3h12v17.2h-12zM-563.1 -216.7h8v4.5h-8zM-548.7 -211.1h9v17.8h-9zM-544.5 -216h4.6v5h-4.6zM-546.6 -227.2h4.2v4.2h-4.2zM-536 -206.1h11v12.3h-11zM-532.7 -211.3h4.8v5.2h-4.8zM-535.6 -229.8h5.5v5.5h-5.5zM-521.3 -210.8h9v18.1h-9zM-519.5 -216.5h5.3v5.7h-5.3zM-509.8 -207.8h9v12.6h-9zM-508.5 -213.6h6v5.8h-6zM-496.8 -211.8h12v17.1h-12zM-492.8 -228.5h5.1v5.1h-5.1zM-481.2 -209.5h12v16.5h-12zM-467.1 -209.9h9v17.4h-9zM-455.6 -206h8v12.9h-8zM-452.1 -210.2h4.3v4.2h-4.3zM-443.9 -213.7h8v18.4h-8zM-440.5 -216.8h3.6v3.1h-3.6zM-443.1 -228.1h5.9v5.9h-5.9zM-402.8 -300.6h13v13.6h-13zM-402.7 -287h8.6v3.2h-8.6zM-387.7 -301.1h13v16h-13zM-385.5 -285.1h5.4v4.6h-5.4zM-372.6 -301.1h9v11.2h-9zM-371.6 -289.9h3.9v5h-3.9zM-361.4 -303.2h8v15.4h-8zM-349.5 -302.6h8v11.7h-8zM-348.3 -290.9h4.4v4.7h-4.4zM-346.8 -279.2h3.7v3.7h-3.7zM-337.8 -302.3h9v15.2h-9zM-324.8 -301.3h8v18.3h-8zM-323.5 -283h4.8v5.5h-4.8zM-314.4 -302.7h10v14.5h-10zM-314 -288.2h5v4h-5zM-300.3 -300.5h12v17.1h-12zM-300.2 -276.2h4.1v4.1h-4.1zM-285.8 -301.2h10v18.4h-10zM-272 -300.9h13v12.3h-13zM-271.2 -288.7h6.5v3.2h-6.5zM-403.3 -208.3h13v13h-13zM-386.9 -207.9h9v12.7h-9zM-375.6 -208.9h9v15.9h-9zM-371.8 -223.7h4.5v4.5h-4.5zM-364.4 -210.6h9v16.1h-9zM-362.9 -220.7h3.7v3.7h-3.7zM-353.3 -208h8v15.3h-8zM-341.8 -211.3h13v16.5h-13zM-338.8 -215.2h5.6v3.9h-5.6zM-325.9 -211.4h8v17.9h-8zM-325.4 -216.7h4.1v5.4h-4.1zM-323.4 -223.6h4.4v4.4h-4.4zM-314 -212.7h8v18.2h-8zM-303.6 -207.5h9v14.9h-9zM-303.3 -212.3h3.8v4.8h-3.8zM-299.9 -228.1h4.2v4.2h-4.2zM-291.8 -211.6h13v16.8h-13zM-291.1 -216.2h6.6v4.6h-6.6zM-290.3 -224.3h5.5v5.5h-5.5zM-275.1 -211h9v16.2h-9zM-275.1 -224.3h5.7v5.7h-5.7zM-237 -302.2h10v12.9h-10zM-236.6 -289.3h5.4v5.1h-5.4zM-236.1 -278.1h4.7v4.7h-4.7zM-224 -302.2h8v12.5h-8zM-222 -289.6h4v3.2h-4zM-199.4 -302.6h9v15.2h-9zM-195.5 -287.4h4.9v4.4h-4.9zM-188.1 -302.7h12v16h-12zM-187.1 -275.7h5.3v5.3h-5.3zM-173 -301.4h13v18.2h-13zM-169.5 -283.2h7.7v5.3h-7.7zM-169.4 -276.4h4.4v4.4h-4.4zM-157.3 -300.8h8v17.9h-8zM-153.4 -282.9h3.7v4.8h-3.7zM-155.5 -279.2h4v4h-4zM-147 -302.9h9v13.4h-9zM-145 -289.5h3.7v3.5h-3.7zM-122.7 -301h9v16h-9zM-122.1 -285h6.3v4.4h-6.3zM-111 -301.4h11v12.4h-11zM-97.5 -301.7h8v12.2h-8zM-96.6 -289.4h4.5v4.2h-4.5zM-86.9 -301.9h11v12.2h-11zM-73.8 -301h9v14.4h-9zM-73.2 -277.7h4.9v4.9h-4.9zM-61.1 -301h11v11.8h-11zM-48 -301.9h9v18h-9zM-35.5 -302h13v15.7h-13zM-19.7 -303.3h13v18.7h-13zM-235.7 -211.5h10v16.1h-10zM-235.5 -216.6h6.5v5.1h-6.5zM-223.3 -211.3h10v17.4h-10zM-209.8 -210.1h9v14.7h-9zM-208.2 -226.8h5.9v5.9h-5.9zM-198.5 -207.6h9v14h-9zM-195.7 -213.6h4.6v6h-4.6zM-187.3 -205.9h13v12.1h-13zM-184.1 -211.7h7.5v5.8h-7.5zM-170.7 -208.1h11v13.5h-11zM-156.9 -213.7h8v18.7h-8zM-145.3 -208.4h9v14h-9zM-141.8 -212.8h3.8v4.4h-3.8zM-134.2 -209.9h8v15.8h-8zM-134 -215.5h5.1v5.5h-5.1zM-130.6 -221.8h3.9v3.9h-3.9zM-122.5 -206.5h9v11.2h-9zM-121.2 -225h4.3v4.3h-4.3zM-110.6 -213.3h12v18h-12zM-110.3 -216.5h5.8v3.2h-5.8zM-96.3 -206.8h10v13.7h-10zM-84.2 -211.1h9v17.7h-9zM-82 -214.3h4.4v3.2h-4.4zM-82.4 -226.7h3.9v3.9h-3.9zM-72.1 -209.9h9v16h-9zM-71 -215.7h3.6v5.8h-3.6zM-60.1 -208.5h10v15h-10zM-57.4 -211.6h4.7v3.1h-4.7zM-59.4 -225.4h5.3v5.3h-5.3zM-47.7 -211.9h10v19h-10zM-44.5 -215.9h5.4v4h-5.4zM-34.2 -207.6h10v14.2h-10zM-21.5 -210.4h10v15.1h-10zM-1138 -169.4h13v16.7h-13zM-1133.7 -152.7h6.4v3.2h-6.4zM-1122.1 -170.8h8v13h-8zM-1119.2 -157.8h4.3v5.1h-4.3zM-1111.1 -170.1h10v15.9h-10zM-1107.4 -139.7h3.6v3.6h-3.6zM-1098.8 -169.5h12v16.5h-12zM-1084 -171.2h13v11.7h-13zM-1083.5 -141.4h4.2v4.2h-4.2zM-1068.8 -169.7h8v13.5h-8zM-1065.4 -156.2h3.8v4.2h-3.8zM-1058 -171.2h9v14.7h-9zM-1031.1 -170.9h10v17.1h-10zM-1136.5 -112h13v13.7h-13zM-1133.2 -115.4h9.1v3.4h-9.1zM-1121.2 -114.1h10v16.5h-10zM-1117 -118.2h4.7v4h-4.7zM-1117.2 -125.4h3.6v3.6h-3.6zM-1108.7 -116.1h10v17.6h-10zM-1108.1 -120.3h5.1v4.1h-5.1zM-1106.1 -130.6h5.8v5.8h-5.8zM-1094.7 -115.2h9v17.5h-9zM-1092.7 -127.8h3.9v3.9h-3.9zM-1083 -116.8h11v17.7h-11zM-1079.7 -120.9h7.1v4h-7.1zM-1055.1 -116.3h13v16.2h-13zM-1039.4 -115.4h12v17.3h-12zM-1037.3 -118.7h5.7v3.3h-5.7zM-1039.1 -128.8h5.5v5.5h-5.5zM-1025.2 -111.3h8v12.6h-8zM-991 -169h12v13.5h-12zM-975 -171.5h13v11.5h-13zM-971.2 -143.2h4v4h-4zM-958.5 -170.1h8v16.2h-8zM-957.8 -139.5h3.8v3.8h-3.8zM-947.9 -170.8h13v17.3h-13zM-932.4 -171.3h11v12.3h-11zM-929.5 -159h5.5v6h-5.5zM-918.3 -169.7h13v11.1h-13zM-917.6 -158.6h8.4v5.7h-8.4zM-917.9 -140.5h5.1v5.1h-5.1zM-902.1 -171.4h8v18.4h-8zM-992.9 -116.7h12v17.4h-12zM-989.7 -121h5.8v4.3h-5.8zM-978.7 -115.4h8v17.4h-8zM-968.2 -113h9v12.9h-9zM-957 -115h12v16.7h-12zM-942.9 -112.2h8v14.5h-8zM-932.5 -111.5h12v12.4h-12zM-931.5 -117.5h7.4v6h-7.4zM-917.8 -111.6h11v13.4h-11zM-914.7 -115.5h5v3.9h-5zM-913.9 -129.7h4.7v4.7h-4.7zM-903.7 -114h10v14.8h-10zM-899.8 -117.3h4.5v3.2h-4.5zM-890.8 -116.5h10v16.9h-10zM-847.2 -169.3h13v11.1h-13zM-845 -158.3h7.7v5.8h-7.7zM-831.5 -171.5h13v16.2h-13zM-815 -169.5h11v17.3h-11zM-813.6 -152.1h7.5v4.6h-7.5zM-811.8 -140.3h3.8v3.8h-3.8zM-802 -170.7h10v17.5h-10zM-800.7 -141.2h4.9v4.9h-4.9zM-787.9 -169.7h8v13.7h-8zM-786.4 -144.4h4.4v4.4h-4.4zM-775.9 -170.6h13v11.1h-13zM-775.6 -159.5h8.9v4.1h-8.9zM-774.6 -146.4h5.3v5.3h-5.3zM-760.4 -169.3h11v13.1h-11zM-746.2 -169h8v17.2h-8zM-744.7 -151.8h4.4v5.2h-4.4zM-849.8 -116.5h9v18.8h-9zM-846.4 -121.6h3.7v5.1h-3.7zM-847.3 -126.9h3.9v3.9h-3.9zM-825.3 -113.2h11v14.3h-11zM-824.6 -118.9h6.6v5.7h-6.6zM-810.6 -114.8h8v14.6h-8zM-798.7 -113.9h8v14.6h-8zM-795.3 -119.7h4.2v5.8h-4.2zM-787.4 -112.9h9v15h-9zM-774.4 -117.1h13v18.5h-13zM-773.1 -131.3h4.5v4.5h-4.5zM-758.3 -111.8h9v13.5h-9zM-745.6 -117.4h8v18.9h-8zM-742.2 -127.8h5v5h-5zM-705.4 -171.4h8v14.9h-8zM-704 -156.4h3.4v4.2h-3.4zM-693.8 -171.2h8v11.7h-8zM-691.8 -159.5h3.5v5.6h-3.5zM-683.3 -170h12v16.2h-12zM-681.8 -145.3h5.1v5.1h-5.1zM-667.3 -169.8h13v19h-13zM-638.2 -169.1h8v11.4h-8zM-635.7 -157.7h4.6v5.6h-4.6zM-627.4 -170h11v17.9h-11zM-622.3 -152.1h4.5v3.2h-4.5zM-614 -170.6h12v18h-12zM-597.9 -170.7h8v16.2h-8zM-595.6 -154.6h5.4v3.7h-5.4zM-597.2 -147h4.1v4.1h-4.1zM-705.3 -116.1h8v16h-8zM-701.6 -121.9h3.4v5.7h-3.4zM-693.7 -115.3h9v16.2h-9zM-693.1 -119.9h4.3v4.6h-4.3zM-680.7 -118.5h9v18.2h-9zM-679.4 -134h4.7v4.7h-4.7zM-656.8 -113.5h9v15h-9zM-655 -129.5h5.4v5.4h-5.4zM-643.7 -116.4h12v16h-12zM-627.6 -114.9h9v15.3h-9zM-623.9 -118.8h5.2v3.9h-5.2zM-627.6 -127.9h5.9v5.9h-5.9zM-615.4 -114.9h9v15.1h-9zM-614.9 -118.7h3.9v3.9h-3.9zM-614.3 -131.8h5v5h-5zM-602.2 -118h8v18.8h-8zM-600 -123.7h4.2v5.7h-4.2zM-562.7 -170.9h9v18.2h-9zM-559 -152.6h5.2v5.2h-5.2zM-550.8 -168.6h8v11.5h-8zM-550.4 -157h5v3.8h-5zM-528 -169.8h11v12.3h-11zM-527.5 -157.6h7.4v3.8h-7.4zM-524.8 -142.8h3.9v3.9h-3.9zM-514.7 -170h13v15.5h-13zM-513.5 -154.5h8.1v5.2h-8.1zM-511.1 -147.5h5.8v5.8h-5.8zM-498.9 -170.2h8v17.7h-8zM-494.2 -152.5h3.3v5.9h-3.3zM-498.7 -145.6h6v6h-6zM-486.8 -170.5h9v11.6h-9zM-485.7 -158.9h5.4v4.3h-5.4zM-473.8 -170.2h9v16.5h-9zM-471.4 -140.1h4.8v4.8h-4.8zM-461.7 -170.6h9v17.5h-9zM-457.7 -153.1h3.7v4.6h-3.7zM-460.8 -145.7h4.5v4.5h-4.5zM-450.1 -171.5h12v11.7h-12zM-449.6 -159.8h6.2v3.6h-6.2zM-433.9 -170.5h10v13h-10zM-433.6 -157.5h5.2v5.5h-5.2zM-432.9 -146h3.6v3.6h-3.6zM-562 -113.3h12v13h-12zM-547.8 -110.8h12v12h-12zM-545 -133.3h4v4h-4zM-532.1 -109.6h8v11.9h-8zM-521.3 -112.2h10v14.3h-10zM-518.4 -115.6h4.5v3.4h-4.5zM-508.8 -114.1h9v16.3h-9zM-505.3 -126.8h4.1v4.1h-4.1zM-497.6 -119.2h10v19h-10zM-484.3 -111.5h13v12.6h-13zM-480.6 -116.1h6.7v4.5h-6.7zM-482.3 -129.7h4.2v4.2h-4.2zM-468.4 -109.2h9v11.3h-9zM-456.6 -112h12v13h-12zM-452.2 -116.2h5.8v4.2h-5.8zM-441.5 -116.5h9v16.8h-9zM-438.1 -120.5h3.8v4.1h-3.8zM-401.8 -170.7h10v16.1h-10zM-397 -154.6h5.1v3.1h-5.1zM-388.3 -170.5h10v17.4h-10zM-386.5 -153.1h6.4v5.2h-6.4zM-375.7 -170.5h12v11.3h-12zM-375.1 -159.1h8.2v3.9h-8.2zM-374.3 -141.8h5.1v5.1h-5.1zM-361.6 -168.8h9v13.7h-9zM-359.7 -155.2h4.1v5.3h-4.1zM-360 -144h5.8v5.8h-5.8zM-349.3 -170.9h10v18.9h-10zM-337 -169.6h10v13.7h-10zM-333.4 -156h4.1v5h-4.1zM-333.4 -140.7h4v4h-4zM-324.5 -170h10v12h-10zM-322.7 -145.6h4.7v4.7h-4.7zM-310.3 -170.5h10v11.1h-10zM-309 -159.4h6v4.3h-6zM-308.1 -143.3h5.1v5.1h-5.1zM-297.6 -168.5h12v17.2h-12zM-294 -151.3h6.2v3.7h-6.2zM-281.8 -168.6h13v18.6h-13zM-399.7 -113.1h8v13.5h-8zM-399.7 -116.6h5.4v3.6h-5.4zM-376.4 -113.6h13v15.2h-13zM-374 -132.8h4.5v4.5h-4.5zM-360.1 -113.6h10v13.3h-10zM-357.1 -118.6h4.3v5h-4.3zM-347.4 -114.1h8v13.7h-8zM-344.9 -117.6h4.2v3.5h-4.2zM-336.4 -112.7h11v13.1h-11zM-336.2 -118.1h7.4v5.4h-7.4zM-321.5 -115.4h10v16.5h-10zM-318 -119h4.6v3.5h-4.6zM-308.9 -110.1h13v12.1h-13zM-292.7 -114.6h9v16.7h-9zM-288.2 -118.2h4.4v3.6h-4.4zM-279.6 -114.8h9v16.4h-9zM-277.9 -119.3h5.9v4.5h-5.9zM-279.3 -132.6h3.6v3.6h-3.6zM-236.1 -169h13v16.8h-13zM-236.1 -152.1h8.4v4.6h-8.4zM-220.2 -170.9h12v15.3h-12zM-206.1 -171.4h10v14h-10zM-204.9 -142.1h5.3v5.3h-5.3zM-181.5 -171.3h10v15.4h-10zM-178.2 -155.9h4.9v5.8h-4.9zM-168.2 -170.4h9v14.1h-9zM-155.1 -169h9v13.2h-9zM-154.3 -155.8h5.5v4.2h-5.5zM-153.1 -144.6h5.9v5.9h-5.9zM-143 -169.1h8v16h-8zM-132.7 -170.3h12v16.9h-12zM-130.7 -143.7h5.8v5.8h-5.8zM-116.9 -169.8h9v16.2h-9zM-115.8 -146.5h4.4v4.4h-4.4zM-104.6 -168.9h9v13.5h-9zM-102.8 -155.4h5.7v3.4h-5.7zM-91.7 -169.1h9v13.3h-9zM-79.7 -170.3h11v12.5h-11zM-78.2 -140.6h4.1v4.1h-4.1zM-66.4 -171h9v16.8h-9zM-66 -143.6h5.1v5.1h-5.1zM-53.2 -169.6h9v14.6h-9zM-49.1 -155h4.8v5.6h-4.8zM-40.9 -170.1h9v16.2h-9zM-40.4 -153.9h5.3v5.1h-5.3zM-28.3 -168.8h8v11.5h-8zM-24.7 -157.3h3.7v3.8h-3.7zM-24.6 -147.5h4v4h-4zM-17.8 -171.2h9v17.3h-9zM-17.2 -153.8h3.6v4h-3.6zM-234.5 -112.5h9v13.8h-9zM-208.9 -115.5h12v16.4h-12zM-205.6 -134.3h5.6v5.6h-5.6zM-194.4 -114.7h8v15.5h-8zM-194.2 -120.3h4.5v5.6h-4.5zM-182.5 -110.5h8v11.1h-8zM-172.2 -114.8h10v14.5h-10zM-170.8 -117.8h5.2v3h-5.2zM-158.6 -113.7h13v15.8h-13zM-156.4 -129.4h5.5v5.5h-5.5zM-141.8 -112.2h8v11.7h-8zM-139.8 -118h5.1v5.7h-5.1zM-130.4 -117.1h11v18.2h-11zM-125.7 -120.4h5.9v3.3h-5.9zM-117 -114.8h12v16.2h-12zM-115.2 -125.6h3.8v3.8h-3.8zM-101.1 -111.6h9v12.2h-9zM-100.5 -115.1h5.2v3.5h-5.2zM-101 -128.1h5.6v5.6h-5.6zM-89.9 -116.5h12v16.3h-12zM-86.3 -119.8h7.5v3.3h-7.5zM-74.8 -117.4h8v17.5h-8zM-71.8 -121.9h3.3v4.5h-3.3zM-63.6 -112h13v11.6h-13zM-58.3 -115.9h7.5v3.9h-7.5zM-46.4 -117.8h13v18.6h-13zM-44.1 -130.7h3.7v3.7h-3.7zM-29.8 -115.6h10v16.4h-10zM-27.3 -119.6h5.4v4h-5.4zM-1138.1 -76.2h13v15h-13zM-1121.5 -75h10v13h-10zM-1109 -74.1h11v18.5h-11zM-1105.8 -47.3h6v6h-6zM-1094.8 -75.4h8v13.1h-8zM-1083.9 -74.5h9v16.7h-9zM-1081.1 -57.8h4.9v4.9h-4.9zM-1082.3 -44.8h4v4h-4zM-1072 -73.6h10v16.3h-10zM-1070.4 -57.2h6v4.2h-6zM-1043.6 -74.4h8v12.9h-8zM-1031.7 -75.5h10v18.1h-10zM-1137.8 -27.3h13v16.4h-13zM-1137.1 -39.7h4.3v4.3h-4.3zM-1121.2 -32.2h9v18.8h-9zM-1116.4 -35.9h3.8v3.6h-3.8zM-1109.7 -22.7h12v11.1h-12zM-1108.8 -26.4h8.3v3.7h-8.3zM-1107.4 -43.9h3.7v3.7h-3.7zM-1094.6 -25.3h9v14.6h-9zM-1092.2 -46.2h5.6v5.6h-5.6zM-1082.2 -26.4h12v15.4h-12zM-1079.4 -40.5h4.5v4.5h-4.5zM-1067 -28.7h10v15.8h-10zM-1052.9 -26.3h10v15.1h-10zM-1040.3 -30.3h10v18.5h-10zM-1039.9 -34.3h6.3v4h-6.3zM-1026.6 -29.6h9v16.9h-9zM-1025.6 -34.6h4.2v5h-4.2zM-991.6 -73.6h8v16.1h-8zM-991.5 -57.5h3.4v4.4h-3.4zM-980.7 -74.2h8v14.3h-8zM-979.1 -48.6h4.3v4.3h-4.3zM-969.2 -74.1h13v11.1h-13zM-969.1 -63.1h6.1v6h-6.1zM-936.5 -75.3h11v15.6h-11zM-934.1 -59.7h6.4v3.2h-6.4zM-922.4 -75.2h11v16.3h-11zM-919.4 -48.7h5.3v5.3h-5.3zM-907.6 -74.5h10v11.4h-10zM-904.7 -63.1h6.8v5.5h-6.8zM-906.4 -49.5h4.9v4.9h-4.9zM-893.9 -73.7h8v13.7h-8zM-882.7 -74.6h8v14.4h-8zM-879 -50.1h5.3v5.3h-5.3zM-992.3 -24.8h8v12.2h-8zM-991.3 -41.6h5.8v5.8h-5.8zM-980.7 -30.4h9v17h-9zM-969.4 -24.6h8v13h-8zM-967.8 -28.2h5.1v3.5h-5.1zM-957.4 -25.9h8v15.2h-8zM-955 -28.9h5.2v3h-5.2zM-945.7 -24.5h10v13.6h-10zM-945.2 -29.3h6.1v4.7h-6.1zM-932.6 -25.8h9v14.9h-9zM-932.4 -46h4.3v4.3h-4.3zM-919.6 -24.6h10v11.8h-10zM-905.4 -29.9h10v18.8h-10zM-893.1 -25.3h12v13.2h-12zM-892.1 -31h7.9v5.7h-7.9zM-850 -76.2h10v17.1h-10zM-847 -59.1h6.3v4.4h-6.3zM-846.5 -49.7h3.8v3.8h-3.8zM-837.7 -73.8h8v18.5h-8zM-837.4 -55.3h3.5v4.4h-3.5zM-826.3 -75.8h8v11.2h-8zM-814.6 -73.9h13v13.9h-13zM-813.8 -60h6.8v3.9h-6.8zM-798.6 -75.1h9v17.9h-9zM-797.3 -57.1h6.1v5.8h-6.1zM-785.7 -75.8h10v15h-10zM-772.6 -75.4h9v18.9h-9zM-760.7 -76.2h8v15.5h-8zM-760.2 -60.8h3.6v4.2h-3.6zM-748.9 -73.7h10v18.3h-10zM-746 -55.4h6.9v3.4h-6.9zM-848.8 -25.2h8v13.2h-8zM-837.9 -25.8h8v14.7h-8zM-827.7 -25.1h9v13.5h-9zM-815.7 -24.6h11v13.9h-11zM-801.7 -28.7h11v16.3h-11zM-797.2 -33.2h6.5v4.5h-6.5zM-787.9 -28.8h12v16.9h-12zM-772.1 -26.9h8v13.8h-8zM-770.5 -31.3h5.1v4.3h-5.1zM-762 -23.2h8v12.4h-8zM-760.7 -28.4h4.5v5.2h-4.5zM-761.5 -42.2h4.3v4.3h-4.3zM-751.8 -23.7h10v11.3h-10zM-751 -27.3h5.3v3.7h-5.3zM-749 -43.7h5.5v5.5h-5.5zM-739.1 -27.4h9v15.8h-9zM-736.9 -45.8h5.9v5.9h-5.9zM-706.1 -75.5h10v14.1h-10zM-703.6 -61.5h6.1v4.3h-6.1zM-693 -75.5h9v13.4h-9zM-680.2 -74.8h11v11.7h-11zM-665.7 -74.6h10v15h-10zM-662.1 -48.7h6v6h-6zM-653 -74.4h8v16.6h-8zM-651.1 -57.9h5v5.4h-5zM-642.3 -75.9h12v15.8h-12zM-640.3 -60.1h6v3.3h-6zM-627.1 -75.4h9v14.3h-9zM-615.4 -75.1h13v14.3h-13zM-598.9 -73.6h13v13.7h-13zM-595.7 -46.3h4.1v4.1h-4.1zM-705.1 -26.6h10v13.3h-10zM-703.5 -31.5h5.1v4.9h-5.1zM-692.2 -27h8v15.6h-8zM-680.6 -25.7h10v14.4h-10zM-679.5 -31.4h5.5v5.7h-5.5zM-679.6 -41.6h5.2v5.2h-5.2zM-668.1 -28.7h9v16.6h-9zM-656 -24.3h8v12.5h-8zM-654.9 -40.1h5.3v5.3h-5.3zM-645.7 -28.5h9v15.1h-9zM-634.4 -24.8h11v12h-11zM-633 -28.8h7.5v4h-7.5zM-620.6 -30.3h12v18.1h-12zM-617.6 -46.3h5.6v5.6h-5.6zM-605.3 -24.8h8v13.7h-8zM-594.5 -24.9h8v14.3h-8zM-561.6 -76.4h10v13.4h-10zM-557.7 -63h4.2v5.6h-4.2zM-547.5 -74.4h8v18.7h-8zM-537.4 -74.1h12v14.5h-12zM-535.5 -59.5h4.9v5.8h-4.9zM-534.5 -44.5h3.8v3.8h-3.8zM-523 -74.5h9v11.2h-9zM-519.3 -63.3h4.9v4.1h-4.9zM-510.4 -73.6h13v19h-13zM-495.3 -76.1h9v14.9h-9zM-484.1 -76.2h11v13.2h-11zM-470.8 -74.9h13v15.3h-13zM-469.1 -59.7h5.6v3.7h-5.6zM-468.9 -51.8h4v4h-4zM-453.9 -74.3h9v17.1h-9zM-450.9 -57.2h5.1v4.8h-5.1zM-450.7 -45.9h4.4v4.4h-4.4zM-440.8 -76.1h8v16.9h-8zM-559.7 -22.8h13v12.2h-13zM-556.5 -27.6h5.2v4.7h-5.2zM-559.5 -43.9h4.3v4.3h-4.3zM-544.2 -25.7h13v13.9h-13zM-544.1 -28.9h9v3.3h-9zM-528.3 -23h12v12.4h-12zM-524.8 -43.8h3.6v3.6h-3.6zM-512.8 -30.8h8v18.3h-8zM-510.3 -36.4h5.2v5.6h-5.2zM-502.6 -30.5h9v17.4h-9zM-499.9 -36.4h5.2v6h-5.2zM-491.3 -27.1h8v14.4h-8zM-488.1 -32.4h4.6v5.4h-4.6zM-481 -27.7h8v14.4h-8zM-478.7 -41.3h4.1v4.1h-4.1zM-470.3 -28.6h12v15.9h-12zM-454.7 -24.5h8v13.6h-8zM-453.5 -29.4h4.7v4.9h-4.7zM-454 -42.8h3.8v3.8h-3.8zM-444 -29.5h9v18.2h-9zM-442.9 -41.2h5.5v5.5h-5.5zM-399.9 -73.9h9v15.7h-9zM-396.5 -50.1h5.5v5.5h-5.5zM-386.7 -75.2h9v17.2h-9zM-384 -48.3h5.9v5.9h-5.9zM-374.9 -73.8h10v17.6h-10zM-361.7 -73.5h9v12.1h-9zM-361 -46.5h5.2v5.2h-5.2zM-348.6 -74.8h8v12.7h-8zM-347.4 -62.2h3.8v3.9h-3.8zM-336.9 -74.5h8v16.6h-8zM-335.7 -58h3.3v3.5h-3.3zM-325.1 -74.9h11v12.5h-11zM-310.2 -76.1h10v13h-10zM-296.3 -73.6h10v16.7h-10zM-282.7 -76.2h10v13.3h-10zM-281.9 -49.7h5v5h-5zM-269.7 -74.6h10v13h-10zM-400 -27h8v15.4h-8zM-397.7 -43.7h5.9v5.9h-5.9zM-389.6 -29.1h10v17.6h-10zM-389.1 -34.4h5.8v5.3h-5.8zM-389.2 -45.6h5.6v5.6h-5.6zM-376.1 -27.6h11v16.2h-11zM-375.2 -31.9h5.9v4.3h-5.9zM-362.8 -28.3h10v15.4h-10zM-358.5 -34.1h5v5.8h-5zM-349.1 -28.5h13v15.4h-13zM-333.8 -25.7h10v13.6h-10zM-330.7 -31.1h6.1v5.4h-6.1zM-321.1 -27.9h9v17h-9zM-319.5 -33.6h5.4v5.8h-5.4zM-310 -26.3h10v13.6h-10zM-296.5 -28.6h11v16.5h-11zM-283.2 -28.2h8v17.4h-8zM-281.2 -31.3h5.5v3.1h-5.5zM-272 -24.6h13v12.4h-13zM-265.5 -29.6h6.2v5h-6.2zM-235.2 -76.5h8v18.4h-8zM-233.6 -58h5.1v3.5h-5.1zM-224.8 -74.8h13v17.9h-13zM-209.8 -74.3h9v16.4h-9zM-207 -57.9h5.8v4.1h-5.8zM-197.8 -74.4h13v13.7h-13zM-181.6 -74.4h13v12.2h-13zM-164.4 -76.3h12v11.4h-12zM-149.9 -74.9h12v16.2h-12zM-134.6 -73.6h13v15.8h-13zM-117.8 -74.4h8v14.3h-8zM-106.3 -75.8h9v18.7h-9zM-103.8 -57.2h4.3v3.2h-4.3zM-93.8 -74.2h13v14.1h-13zM-78.4 -76.4h12v14.7h-12zM-74.2 -61.7h7v3.6h-7zM-62.6 -75.4h12v17.9h-12zM-47.8 -74.2h10v18.3h-10zM-35.1 -74.1h10v17.5h-10zM-33.5 -56.6h6.5v5.6h-6.5zM-22.4 -75.4h9v18.5h-9zM-237.5 -24.2h8v11.6h-8zM-236 -45.1h4.9v4.9h-4.9zM-226.2 -25.2h8v13.8h-8zM-223.6 -28.3h3.3v3.2h-3.3zM-215.2 -23.1h10v11.6h-10zM-210.6 -29.1h4.2v6h-4.2zM-201.5 -29.7h9v18.4h-9zM-188.9 -27.3h10v14.3h-10zM-187 -30.4h6.6v3.1h-6.6zM-176.5 -26.8h12v13.7h-12zM-171.2 -31.8h5.5v5h-5.5zM-162.3 -30.6h12v17.5h-12zM-158 -35.9h4.8v5.3h-4.8zM-148.2 -23.9h11v13.1h-11zM-147.4 -28.8h7.5v4.9h-7.5zM-147.8 -42.9h3.7v3.7h-3.7zM-134.3 -30.4h12v18.5h-12zM-131.1 -34.7h6.2v4.3h-6.2zM-120 -31.1h13v18.3h-13zM-104.8 -27.3h11v14.8h-11zM-91.4 -25.6h12v13.3h-12zM-88.1 -43.7h4.4v4.4h-4.4zM-62 -27.6h12v14.5h-12zM-61.6 -33.5h6v6h-6zM-46.9 -28.6h12v16h-12zM-43.9 -31.7h5.1v3.1h-5.1zM-46.1 -44.4h4.8v4.8h-4.8zM-31 -26.1h11v13.6h-11zM-27.9 -29.7h7.5v3.6h-7.5zM-1135.5 10.5h13v11.5h-13zM-1120.5 12.7h11v18.8h-11zM-1118 31.5h7.2v3h-7.2zM-1106.5 12.6h8v12.3h-8zM-1103.5 24.9h4.6v5.3h-4.6zM-1095.8 10.7h10v11.1h-10zM-1092.7 21.9h6.4v4.6h-6.4zM-1082.8 10.5h8v17.3h-8zM-1081.4 27.9h5.2v5.5h-5.2zM-1081.5 35.5h5.6v5.6h-5.6zM-1072.8 12.9h13v14.3h-13zM-1056.1 11.2h8v11.7h-8zM-1055.8 22.8h4v6h-4zM-1045.8 10.5h12v12.6h-12zM-1044.1 23.1h8.3v3.6h-8.3zM-1031.3 12.2h8v17.8h-8zM-1031 30h4.6v3.2h-4.6zM-1138.3 67h8v16.9h-8zM-1126.9 67.8h9v16h-9zM-1125.3 63.8h5.3v4h-5.3zM-1115 69.1h13v14.7h-13zM-1110.6 63.4h6.4v5.7h-6.4zM-1098.2 67.6h13v13.9h-13zM-1095.6 54.9h3.8v3.8h-3.8zM-1082.9 70.6h8v12.3h-8zM-1080.6 66.1h5.2v4.5h-5.2zM-1071 69.2h9v14.3h-9zM-1069.5 64h5.9v5.2h-5.9zM-1069.2 49.2h4.1v4.1h-4.1zM-1059.6 64.9h12v18.1h-12zM-1056.9 51.3h4.3v4.3h-4.3zM-1044.2 68.7h11v15.2h-11zM-1030.6 71.5h8v12.4h-8zM-992 12.5h9v13.1h-9zM-988.5 25.6h4.6v3.3h-4.6zM-989.4 36.7h3.8v3.8h-3.8zM-979.6 13.5h13v17.2h-13zM-978.8 30.7h8.9v3.6h-8.9zM-963.5 11.2h10v16.2h-10zM-939.8 12.3h8v17.2h-8zM-927.7 13.5h11v15.5h-11zM-924.5 41.8h5.2v5.2h-5.2zM-912.7 11.1h8v18.8h-8zM-902.2 12h12v12.8h-12zM-897.6 24.7h7.3v5.2h-7.3zM-886.4 12.6h10v16.7h-10zM-883.5 29.3h5.5v4.5h-5.5zM-884.5 36.9h5.6v5.6h-5.6zM-990 68.4h12v14.6h-12zM-975.7 67.4h8v16h-8zM-974.5 63.4h5.1v4h-5.1zM-963.9 71.3h9v12.1h-9zM-962 65.4h4.6v5.9h-4.6zM-950.8 68h9v13.7h-9zM-939.6 69.7h10v14h-10zM-927 70.3h9v12.8h-9zM-926.7 50.1h4v4h-4zM-915.1 64.5h10v17.3h-10zM-911.9 60.1h6.4v4.4h-6.4zM-902.5 63.7h9v18.3h-9zM-901.6 50.9h4.7v4.7h-4.7zM-890.9 69.9h8v11.9h-8zM-879.6 65.7h8v18.6h-8zM-877.5 55.3h4.1v4.1h-4.1zM-848.7 12.9h12v11.1h-12zM-848.3 23.9h5.8v5.8h-5.8zM-833.6 11.3h9v14.1h-9zM-822.3 13.1h13v18.8h-13zM-819.8 31.9h6.4v4h-6.4zM-820.7 42.1h3.9v3.9h-3.9zM-805.6 11.8h12v11.8h-12zM-805.4 36.3h5.7v5.7h-5.7zM-780.3 12h8v16.7h-8zM-779 38.1h4.9v4.9h-4.9zM-768.5 10.7h8v12h-8zM-765.3 22.6h4.7v5.9h-4.7zM-758.2 12h12v18.7h-12zM-757.6 30.6h7.3v3h-7.3zM-742.7 12.2h8v11.6h-8zM-741.8 23.8h5.4v3.3h-5.4zM-742 41.1h6v6h-6zM-848.8 68.7h13v15.1h-13zM-845.6 54.7h3.8v3.8h-3.8zM-832.6 67h10v14.8h-10zM-829.5 63.8h5.4v3.2h-5.4zM-819.8 71.1h11v12.4h-11zM-817.6 68h6.8v3.1h-6.8zM-805.5 65.9h12v18.3h-12zM-802.7 60.3h4.9v5.6h-4.9zM-790.9 68.8h10v13h-10zM-790.8 51.8h3.7v3.7h-3.7zM-777 68.8h10v13.7h-10zM-773.7 63.4h5.1v5.4h-5.1zM-764.8 68.5h9v15.1h-9zM-752.8 68.9h11v14.8h-11zM-752.7 64.4h7.5v4.5h-7.5zM-739.3 66.6h8v15.1h-8zM-736.9 51.3h3.6v3.6h-3.6zM-704.5 10.6h8v14.1h-8zM-704.1 24.6h4v5h-4zM-683.2 11.6h9v12.5h-9zM-680.9 24h6.1v5.5h-6.1zM-670.1 10.9h10v12.5h-10zM-666.3 23.4h4.1v5h-4.1zM-656.4 11.6h8v17.3h-8zM-654.2 28.9h5.6v4h-5.6zM-644.6 12.5h9v14.9h-9zM-633 11h11v13.5h-11zM-628.8 24.4h5.6v4.1h-5.6zM-619.8 10.9h10v11.8h-10zM-605.6 12.1h11v14.9h-11zM-604.3 26.9h6.7v3.4h-6.7zM-704.5 67.9h12v14.9h-12zM-698.5 64.8h6.1v3.1h-6.1zM-689 68.3h9v14.9h-9zM-685.8 62.3h4v6h-4zM-685.6 48.3h5.5v5.5h-5.5zM-677.5 70h8v14.3h-8zM-666.4 69.3h13v15.1h-13zM-661.6 66.1h5.8v3.2h-5.8zM-637.7 71h10v13.2h-10zM-632.2 66.5h4.2v4.5h-4.2zM-624.9 64.5h10v17.8h-10zM-624 49.8h5.2v5.2h-5.2zM-610.7 66h10v15.9h-10zM-598.7 68.1h13v16.2h-13zM-596.7 64h8.7v4.1h-8.7zM-561 12.1h8v13.5h-8zM-558.4 25.6h5.3v4.1h-5.3zM-559.1 36h4.4v4.4h-4.4zM-549 11.5h13v12.4h-13zM-533.4 11.5h13v11.5h-13zM-531.8 23h8.9v4.1h-8.9zM-517.2 12.2h12v15.4h-12zM-501 12.9h9v12.2h-9zM-500.3 25.1h3.8v5.8h-3.8zM-489.9 11.8h13v12.2h-13zM-474 10.7h11v17.4h-11zM-459.3 11.5h10v12.5h-10zM-458.4 41.8h5.8v5.8h-5.8zM-446.1 11.7h8v13.2h-8zM-443.2 39h4.6v4.6h-4.6zM-434.7 11.9h11v14.4h-11zM-431.2 26.3h6.4v5.7h-6.4zM-431.3 40.9h5.6v5.6h-5.6zM-560.7 71.3h10v11.7h-10zM-547.5 63.9h8v17.8h-8zM-547.2 59.7h3.4v4.2h-3.4zM-536.8 63h13v18.9h-13zM-535.2 59.3h8.6v3.7h-8.6zM-520.8 66.4h9v17.7h-9zM-508.5 69.6h10v14.5h-10zM-506.2 49.7h3.8v3.8h-3.8zM-494.5 66.8h10v17.6h-10zM-491.8 63.3h6.5v3.5h-6.5zM-491.5 49.1h3.9v3.9h-3.9zM-481.1 69.6h11v12.5h-11zM-480.7 66.5h6.5v3.1h-6.5zM-467 66.4h8v15.1h-8zM-465.5 50.9h5.2v5.2h-5.2zM-441.7 64.1h11v18.4h-11zM-439.7 46.9h5.6v5.6h-5.6zM-400.2 13.5h9v16.2h-9zM-374.7 12.9h12v11.7h-12zM-360.6 12.4h12v12.4h-12zM-345.9 13h8v14.2h-8zM-324.6 12.9h8v16.4h-8zM-322.1 29.3h4.1v5.4h-4.1zM-312.7 12.3h8v18.8h-8zM-312.3 39.2h3.6v3.6h-3.6zM-301.9 11.6h11v17.3h-11zM-301.1 36h4.5v4.5h-4.5zM-287.3 12.1h12v18.4h-12zM-283.6 30.6h5.2v3.3h-5.2zM-271.4 11.1h9v13.9h-9zM-268.9 25h4.9v3.6h-4.9zM-401.8 69.7h12v14.1h-12zM-398.8 65.6h7.3v4.1h-7.3zM-387.8 68.3h10v13.3h-10zM-386.9 64.7h4.2v3.6h-4.2zM-374.7 67.2h8v16.3h-8zM-371.3 50h6v6h-6zM-364.4 71h13v11.1h-13zM-363.4 65.3h7.3v5.7h-7.3zM-348.3 69.6h11v12.5h-11zM-345.8 65.7h5.8v3.8h-5.8zM-334 65.5h8v17.1h-8zM-331.6 60.9h4.3v4.6h-4.3zM-332.8 53.6h5.6v5.6h-5.6zM-322.2 63.8h10v18.3h-10zM-321.8 58.7h4.2v5.1h-4.2zM-321.3 50.8h4.2v4.2h-4.2zM-309.5 67.5h13v14.8h-13zM-308.8 62h9v5.5h-9zM-292.5 71.9h13v12.3h-13zM-277.5 64.9h8v17.1h-8zM-275.7 60.4h5.2v4.5h-5.2zM-274.6 52h5.2v5.2h-5.2zM-237.9 10.9h10v17.5h-10zM-235.9 34.6h3.7v3.7h-3.7zM-224.7 13.2h8v19h-8zM-214.4 13.1h12v18.2h-12zM-210.6 34.6h4.9v4.9h-4.9zM-187.9 11.8h10v15.1h-10zM-186.7 26.9h5.5v3.4h-5.5zM-184.7 34.7h4.5v4.5h-4.5zM-175.4 11.9h8v17.4h-8zM-163.2 12.5h10v15.6h-10zM-162.2 28.1h5.5v4.5h-5.5zM-160.4 41.3h5.6v5.6h-5.6zM-149.7 12.1h13v16.1h-13zM-149.4 37.3h4.6v4.6h-4.6zM-134 12.9h12v17.6h-12zM-119.5 13.4h11v14h-11zM-106.2 10.7h8v16.8h-8zM-94.8 13h9v17h-9zM-83.7 11.5h8v15.6h-8zM-81.5 27.2h4v5.2h-4zM-83.7 38.3h4.1v4.1h-4.1zM-73.6 12.7h12v16.3h-12zM-70.2 29.1h7.5v5.6h-7.5zM-43.9 13.4h10v16.3h-10zM-31.7 11.4h13v18.7h-13zM-27.9 30.1h8v4.1h-8zM-27.9 39.1h5.7v5.7h-5.7zM-238 70.7h12v13.3h-12zM-237.5 64.9h7.9v5.8h-7.9zM-206.3 63.8h8v17.8h-8zM-195.1 64.1h9v17.6h-9zM-192 58.5h5.5v5.6h-5.5zM-182.8 65.9h12v17.7h-12zM-181.9 49.2h3.6v3.6h-3.6zM-166.7 66.4h8v15.7h-8zM-162.9 52.6h4.7v4.7h-4.7zM-155.9 70.7h9v11.5h-9zM-143.8 67.7h13v15.3h-13zM-137 63.1h5.2v4.6h-5.2zM-128.4 67.7h13v16.6h-13zM-112.3 67.3h8v15.1h-8zM-110.9 63.4h3.8v3.9h-3.8zM-101.7 65.5h9v16.9h-9zM-100.2 47.8h5.1v5.1h-5.1zM-88.8 66.1h10v16.6h-10zM-86.7 60.9h5.1v5.3h-5.1zM-75.7 72.1h10v12.4h-10zM-73.3 68.5h5v3.5h-5zM-74.7 52.1h5.1v5.1h-5.1zM-62.2 70.7h10v13.2h-10zM-48.2 65h9v16.6h-9zM-37.1 64.4h10v17.9h-10zM-23.4 65.3h9v17h-9zM-20.7 62.2h4.3v3.1h-4.3zM-19.7 55.1h4v4h-4zM12.6 11.6h8v12.3h-8zM15.8 38.9h5.5v5.5h-5.5zM23.4 10.9h8v11.3h-8zM34.2 10.8h9v17.4h-9zM36.6 28.3h5.7v4.8h-5.7zM34.3 41.9h4.8v4.8h-4.8zM45.8 10.5h12v16.1h-12zM60.6 13.4h13v12h-13zM77.7 11.1h8v12.5h-8zM78.6 40.9h5.6v5.6h-5.6zM89.2 12h9v17.8h-9zM101.1 12h9v18.3h-9zM101.7 30.3h5.9v3.1h-5.9zM112.8 12.8h9v17h-9zM114.4 29.8h6.3v4.7h-6.3zM115.7 40.1h3.7v3.7h-3.7zM137.9 12.8h11v18.3h-11zM138.2 31.1h6.5v4.6h-6.5zM152.4 13.2h8v18.2h-8zM163.6 11.2h13v12.7h-13zM166.4 23.8h8v5.8h-8zM179.5 10.8h8v11.6h-8zM180.8 39.1h6v6h-6zM190 11.7h13v11.9h-13zM196 23.6h7.1v4.1h-7.1zM192.2 35.1h4v4h-4zM207.1 11.6h11v11.9h-11zM12.5 70.9h11v13.4h-11zM12.9 67.5h7.1v3.4h-7.1zM26.8 65.9h10v17.5h-10zM27.6 55.3h5v5h-5zM39.2 63.4h10v18.4h-10zM43.1 48.5h4.4v4.4h-4.4zM51.3 66.2h12v17.7h-12zM66 71h8v11.7h-8zM67 47.8h4.9v4.9h-4.9zM93.2 72.4h9v11.6h-9zM106.1 66.9h12v14.9h-12zM110 62.7h7.9v4.2h-7.9zM109.6 54h5.3v5.3h-5.3zM135.4 70.5h10v12.6h-10zM148.8 67.7h8v15.4h-8zM150.5 61.8h3.6v5.9h-3.6zM151.2 55.4h4.6v4.6h-4.6zM159.3 69.2h9v12.9h-9zM170.6 69.6h11v13.7h-11zM174.7 64h5v5.6h-5zM172 53.9h4.1v4.1h-4.1zM185.7 68.1h8v14.3h-8zM188.1 63.3h4.7v4.8h-4.7zM195.9 66.7h10v15.2h-10zM201.3 62.3h4.6v4.4h-4.6zM197.2 50h4.2v4.2h-4.2zM209.9 63.6h8v18.9h-8zM213.2 58.9h3.7v4.7h-3.7zM211.6 48.9h5.5v5.5h-5.5zM-1136.7 105.9h11v16.9h-11zM-1131.9 122.8h4.6v5.8h-4.6zM-1121.6 106.1h12v12.7h-12zM-1106.5 107.5h9v15.2h-9zM-1103.5 130.6h4.7v4.7h-4.7zM-1083.2 106.5h12v18.8h-12zM-1079.7 125.3h8.1v3.2h-8.1zM-1067.8 107.3h13v15.9h-13zM-1064.4 123.1h5.5v5.2h-5.5zM-1066.7 131.6h4.9v4.9h-4.9zM-1050.9 106.8h13v14.5h-13zM-1049.4 121.3h8.2v5.7h-8.2zM-1035.4 106h8v12.4h-8zM-1032.4 118.4h3.4v5.1h-3.4zM-1023.3 106.3h12v18.3h-12zM-1021.7 124.6h6.7v4.6h-6.7zM-1020.5 135.2h5.1v5.1h-5.1zM-1124.5 162.7h10v15.2h-10zM-1119.3 156.9h4.1v5.9h-4.1zM-1122.4 146.3h5.1v5.1h-5.1zM-1110.7 162.7h9v16.5h-9zM-1097.6 166.2h11v11.4h-11zM-1094 163.1h6.8v3.1h-6.8zM-1083.1 162.7h10v14.1h-10zM-1079.4 158.3h5.6v4.5h-5.6zM-1080.5 148.1h4.2v4.2h-4.2zM-1070.8 163.2h9v15h-9zM-1070.4 158.5h4.6v4.7h-4.6zM-1058.5 163.9h12v13.5h-12zM-1054.8 150.3h4.1v4.1h-4.1zM-1043.8 162.5h10v15.1h-10zM-1040.7 158h6v4.5h-6zM-1031 166.6h8v12.8h-8zM-991.5 106.1h10v11.9h-10zM-988.3 118h4.9v4.2h-4.9zM-967.2 107h9v13.9h-9zM-955 106.8h8v16.4h-8zM-953 123.2h3.5v3.7h-3.5zM-943.5 105.9h8v14.4h-8zM-931.6 108.5h9v18.3h-9zM-930.7 126.8h5.9v5.2h-5.9zM-930.3 137.3h4.3v4.3h-4.3zM-919.9 106.6h8v19h-8zM-918.9 125.6h5.1v5.9h-5.1zM-918.2 132.9h6v6h-6zM-909.3 108.1h9v18.9h-9zM-905.1 126.9h4.7v5.4h-4.7zM-884.5 106.4h11v12.4h-11zM-883.4 133.2h3.6v3.6h-3.6zM-990.3 161.7h8v16.4h-8zM-989 156.4h5.2v5.3h-5.2zM-978.6 164h12v13.5h-12zM-963.3 164.4h9v14h-9zM-950.6 158.2h11v18.6h-11zM-936.9 166.3h13v11.5h-13zM-920.4 162.6h12v14.4h-12zM-890.2 164.4h12v14.4h-12zM-850.3 106.6h10v13.4h-10zM-836.9 108.2h8v13.2h-8zM-825.1 106.8h11v14.9h-11zM-821.4 131.8h5.5v5.5h-5.5zM-811.8 108.5h9v17.8h-9zM-799.3 107.9h10v18.5h-10zM-785.7 106.8h8v17.8h-8zM-783.4 132.4h3.5v3.5h-3.5zM-775.3 107.3h13v11.4h-13zM-759.8 105.7h11v12.6h-11zM-848.9 161.3h9v18.2h-9zM-836.6 164.1h9v14.8h-9zM-835.6 160.2h5.7v3.9h-5.7zM-824.1 164.3h12v13.3h-12zM-823.9 160.8h7.2v3.5h-7.2zM-808.5 160.7h9v17.8h-9zM-806.5 157.4h4v3.3h-4zM-795.5 158.7h10v18h-10zM-782.8 162.1h13v16.2h-13zM-766.9 159.5h13v18.7h-13zM-761.4 155.4h6v4.1h-6zM-764.6 148.5h4.7v4.7h-4.7zM-750.2 162.8h8v16h-8zM-739.1 163.4h13v13.4h-13zM-704.7 107h9v16.8h-9zM-692 106.1h10v15.2h-10zM-677.8 106.3h12v17h-12zM-675.9 135.3h5.8v5.8h-5.8zM-663 105.7h8v18.6h-8zM-635 105.8h10v12.6h-10zM-622.8 107.5h10v14.6h-10zM-622.4 136h4v4h-4zM-610.5 108.2h8v16.9h-8zM-608 125.2h4v3.5h-4zM-609.8 130.6h3.6v3.6h-3.6zM-599.3 108.1h12v13.7h-12zM-691.7 161.6h8v16.9h-8zM-690.1 158.4h5.5v3.3h-5.5zM-680.6 163.4h9v15.8h-9zM-679.1 160.3h5.9v3.1h-5.9zM-679.6 151.1h3.6v3.6h-3.6zM-668.5 163.1h9v13.5h-9zM-657.3 165.8h10v13.3h-10zM-644 166.1h10v11.6h-10zM-640.5 161.8h6.5v4.3h-6.5zM-629.9 162.7h11v15.4h-11zM-616 166.7h9v12.5h-9zM-612 146.6h5.6v5.6h-5.6zM-603.4 165.6h11v11.2h-11zM-563.3 107.9h10v16.5h-10zM-549.5 107.9h9v15.2h-9zM-546.7 123.1h5.9v3.3h-5.9zM-537.6 107.9h13v14.6h-13zM-520.6 107.1h10v18.1h-10zM-520 125.2h4.7v5h-4.7zM-507.8 108h11v11.1h-11zM-504.5 119.1h6.1v3.3h-6.1zM-492.9 106.6h8v16.9h-8zM-470.2 108.3h10v14.8h-10zM-468.7 135.1h4.4v4.4h-4.4zM-457.8 107.1h12v18.6h-12zM-452.7 125.8h4.9v4.3h-4.9zM-454.8 131.1h4.8v4.8h-4.8zM-442.7 106.9h11v15.9h-11zM-562.2 161.1h8v15.7h-8zM-550.8 161.3h12v16.7h-12zM-549.5 157.1h8v4.2h-8zM-536.5 163.7h10v13.5h-10zM-522.3 162.3h8v15.7h-8zM-520 157.5h5v4.8h-5zM-521.1 147.5h4v4h-4zM-512.3 163.2h8v14h-8zM-511.6 143.5h4.7v4.7h-4.7zM-501.5 165.2h8v13.9h-8zM-489.6 163.8h11v13.5h-11zM-485.3 158.5h4.9v5.3h-4.9zM-474.9 164.1h8v13h-8zM-472.4 160.2h5.4v3.9h-5.4zM-462.8 165.6h10v13.1h-10zM-459.4 148.2h4v4h-4zM-448.6 164.5h9v13.3h-9zM-435.8 161.6h13v16.5h-13zM-402.1 107.5h8v15.8h-8zM-364.1 107.5h10v11.8h-10zM-351.2 105.8h11v18.7h-11zM-336.2 107.9h10v18.5h-10zM-333.9 126.5h4.7v3h-4.7zM-324 108.2h8v15.6h-8zM-313.7 107h9v13.3h-9zM-311.5 120.3h4.8v5.2h-4.8zM-312.7 134.1h4.4v4.4h-4.4zM-301.8 107.6h13v11.3h-13zM-296.3 118.9h6.2v3.7h-6.2zM-286.4 105.7h9v18.1h-9zM-284.1 123.7h6v4.8h-6zM-274.7 106.5h9v18.3h-9zM-400.3 160.5h8v17.6h-8zM-398.4 156.2h4.4v4.3h-4.4zM-389.3 162.8h11v14.3h-11zM-387.4 158.3h6.8v4.5h-6.8zM-387.5 145.4h4.1v4.1h-4.1zM-374.4 163.5h13v15h-13zM-359.3 166.5h9v12.2h-9zM-358.6 162.6h4.9v3.9h-4.9zM-346.9 165.6h8v11.1h-8zM-342.6 160.4h3.2v5.2h-3.2zM-336.7 162.4h8v16h-8zM-335.4 157.1h5.3v5.3h-5.3zM-334.9 144.6h4.4v4.4h-4.4zM-325.8 166.1h8v11.3h-8zM-324.8 160.6h4.2v5.6h-4.2zM-315 164.5h13v14.3h-13zM-299.1 162.2h9v14.7h-9zM-297.1 158.6h5.4v3.5h-5.4zM-295.3 146.8h5.8v5.8h-5.8zM-286.8 164.4h10v12.6h-10zM-286.1 160.2h4.7v4.2h-4.7zM-286.6 145.2h5.1v5.1h-5.1zM-273.9 161.3h9v15.2h-9zM-235.7 106.7h11v13.6h-11zM-222.1 107.3h10v18.1h-10zM-220.6 125.4h6.4v3.1h-6.4zM-219.6 132.3h5v5h-5zM-208.1 106.8h11v11h-11zM-203.9 117.9h6.5v3.9h-6.5zM-194 105.7h8v14.9h-8zM-183.4 106.4h9v18.9h-9zM-183.2 125.3h4.4v3.6h-4.4zM-171.8 105.6h12v17.5h-12zM-156.4 107.1h13v14.4h-13zM-155.3 121.5h7.1v4.4h-7.1zM-139.5 107.8h8v11.1h-8zM-137.6 118.9h4.4v5h-4.4zM-129.5 107.1h9v12.3h-9zM-126 135.5h5.9v5.9h-5.9zM-118.1 107.6h13v14h-13zM-116.2 121.6h8.9v4.3h-8.9zM-102.8 105.9h10v13.7h-10zM-100.9 119.6h5.8v3.7h-5.8zM-100 135.4h5.3v5.3h-5.3zM-90.5 105.9h8v12h-8zM-89 117.9h4.2v3.2h-4.2zM-78.4 107.6h9v13.3h-9zM-52.2 106h10v18.9h-10zM-48.6 124.9h5.5v4.2h-5.5zM-51.1 131.2h5.9v5.9h-5.9zM-38.4 107h9v13.5h-9zM-36.5 120.5h6.2v4h-6.2zM-26.7 107.7h12v11.2h-12zM-235.8 161.4h10v15.3h-10zM-230.8 155.6h5v5.8h-5zM-221.7 163.2h8v15.8h-8zM-210 163.2h9v13.4h-9zM-208.7 158.2h5.1v4.9h-5.1zM-198.1 163.7h13v14.1h-13zM-195.2 147.6h4.3v4.3h-4.3zM-182.1 162.2h12v15.2h-12zM-181.8 157h5.3v5.2h-5.3zM-166.9 160.6h10v17.9h-10zM-164.3 156.2h6.3v4.4h-6.3zM-153.3 162.8h13v13.9h-13zM-148.3 156.9h7v5.9h-7zM-137.1 160.4h9v17.1h-9zM-137 144.6h4.8v4.8h-4.8zM-125.6 165.5h9v13.5h-9zM-114.2 163.1h10v14.2h-10zM-111.6 159.7h5.8v3.4h-5.8zM-89.5 161h13v16.3h-13zM-73 160.2h13v16.4h-13zM-55.9 165h13v13.8h-13zM-50.6 161.3h5.8v3.7h-5.8zM-53.1 147.2h5v5h-5zM-40.4 164.3h12v14.9h-12zM-38.5 158.4h7.6v5.9h-7.6zM-25.9 162.7h8v14.3h-8zM11.7 107.1h9v14.2h-9zM14.1 121.3h3.7v4.6h-3.7zM14.3 130.9h5.1v5.1h-5.1zM23.1 106.1h13v14.5h-13zM25.9 120.6h7.9v4.1h-7.9zM38.7 107.4h9v12h-9zM39.4 119.4h5.9v4h-5.9zM50.7 107.6h9v11.2h-9zM62.7 106.1h8v12.4h-8zM65.8 118.5h3.3v4.9h-3.3zM73.1 107h10v13.1h-10zM74.1 135.9h4.5v4.5h-4.5zM85.2 105.9h12v18h-12zM87.4 135.2h3.8v3.8h-3.8zM99.8 105.7h9v16.2h-9zM112.9 107.1h8v13.4h-8zM113.5 120.6h3.5v4.2h-3.5zM124.2 107.8h10v18.1h-10zM126.2 125.9h6.6v5.8h-6.6zM137.4 105.8h11v17.2h-11zM151.7 106.8h10v14h-10zM164.2 107.5h8v14.5h-8zM166.4 122h4v4h-4zM176.1 107.3h11v11.5h-11zM191.2 107.9h9v16.7h-9zM204.2 107.2h10v13.3h-10zM205.2 120.5h6.7v3.8h-6.7zM205.7 135h5.3v5.3h-5.3zM216.5 107.5h13v13.7h-13zM223.1 121.2h5.4v5.5h-5.4zM219.8 132.9h4.1v4.1h-4.1zM15.3 158.5h8v18.2h-8zM40.5 164.6h10v12.1h-10zM54.2 159.8h10v18.3h-10zM55.6 154.2h4.8v5.6h-4.8zM68 165.7h11v13.4h-11zM83.1 162.3h10v15.7h-10zM85.9 147.7h5.4v5.4h-5.4zM95.8 164.7h8v13.1h-8zM97.4 159h3.7v5.6h-3.7zM96 147.6h3.5v3.5h-3.5zM107.1 166.9h8v12.5h-8zM107.7 162.5h4.4v4.4h-4.4zM107.4 145.8h6v6h-6zM117.6 165.8h8v12.3h-8zM128.3 158.6h8v18.8h-8zM130.4 147.5h5.8v5.8h-5.8zM139.1 159.7h9v18.8h-9zM151.6 164.4h9v14.1h-9zM152.5 159.7h3.9v4.7h-3.9zM153.3 148.3h4.2v4.2h-4.2zM164.8 160.6h13v18.8h-13zM167.9 155.7h7.8v5h-7.8zM165 149.2h5.2v5.2h-5.2zM179.8 164.8h13v14.3h-13zM196.2 159h11v18.6h-11zM209.5 165.4h11v14h-11zM209.7 143.9h4.1v4.1h-4.1zM-1136.8 200.8h9v18.8h-9zM-1133.4 219.5h3.6v3.8h-3.6zM-1125.6 201.7h10v13.8h-10zM-1123.2 231h5.3v5.3h-5.3zM-1111.8 202.3h8v13.3h-8zM-1111.1 215.5h5v4.5h-5zM-1109.6 229.6h4.1v4.1h-4.1zM-1101.6 202h12v16.3h-12zM-1085.4 203h10v13.9h-10zM-1083.4 216.8h6.8v3.9h-6.8zM-1073 202.2h9v13h-9zM-1072.3 215.3h5.4v5.1h-5.4zM-1070.3 228.3h3.6v3.6h-3.6zM-1061.1 200.7h8v15.8h-8zM-1049.6 202.1h12v16.6h-12zM-1034.8 202.8h10v13.2h-10zM-1034.8 216h6.7v4.2h-6.7zM-1034.5 230.1h5.7v5.7h-5.7zM-1136.9 265.3h12v13.7h-12zM-1132.7 261.6h5.5v3.7h-5.5zM-1121.2 261.3h13v18h-13zM-1120 257.1h7.5v4.2h-7.5zM-1120 244.5h5.7v5.7h-5.7zM-1105.2 266.3h9v11.1h-9zM-1104.4 244.4h4.3v4.3h-4.3zM-1078.4 262.1h12v15.1h-12zM-1075.2 256.6h5.8v5.5h-5.8zM-1062.2 266.1h9v13h-9zM-1049.4 264.6h13v12.4h-13zM-1043.7 260.5h7.2v4.1h-7.2zM-1048.7 247.3h5.7v5.7h-5.7zM-1033.4 260.5h8v18.5h-8zM-1032.8 255h5.2v5.4h-5.2zM-993.5 202.1h9v14.2h-9zM-992.4 216.4h4.1v5.7h-4.1zM-991.4 226.9h4.5v4.5h-4.5zM-982.2 203.4h12v16.5h-12zM-979.2 219.9h8.2v4.4h-8.2zM-968 201.2h8v17h-8zM-966.9 218.2h5v5h-5zM-956.2 202.3h13v15.8h-13zM-940.2 202.1h10v12.1h-10zM-938.1 214.1h4.9v4.6h-4.9zM-926.5 201.7h9v18.5h-9zM-924.2 220.2h3.7v5.3h-3.7zM-915.3 200.8h12v18.5h-12zM-914.7 219.3h7.9v4.1h-7.9zM-912.2 228.9h5.7v5.7h-5.7zM-900.3 201.5h9v18.2h-9zM-898.5 231.6h4v4h-4zM-887.5 202.8h9v16.1h-9zM-885.8 218.9h5.9v5h-5.9zM-992.8 266.3h9v11.8h-9zM-980.9 261.5h11v16.8h-11zM-977 257.1h4.9v4.4h-4.9zM-978.5 249.4h4.7v4.7h-4.7zM-967.1 261.1h8v17.3h-8zM-963.7 256.2h3.7v4.9h-3.7zM-965.7 242.2h5.9v5.9h-5.9zM-956 263.7h13v13.6h-13zM-955.2 259h6.9v4.7h-6.9zM-940.3 266.3h9v11.6h-9zM-928 263.8h9v12.8h-9zM-915.9 264h9v12.9h-9zM-915.4 259.6h5.1v4.4h-5.1zM-903.8 260.4h10v18.3h-10zM-901.3 257.1h6.4v3.3h-6.4zM-903.4 249.8h5.3v5.3h-5.3zM-889.8 264.4h13v12.7h-13zM-887.8 251h3.8v3.8h-3.8zM-849 203.1h10v13.2h-10zM-846.1 216.3h5.7v5.4h-5.7zM-845.7 232h5.9v5.9h-5.9zM-836.3 201.6h9v16.1h-9zM-812.5 200.9h8v18h-8zM-800.3 201.2h12v17.3h-12zM-773.9 202.9h10v14.6h-10zM-773.7 217.5h6v3.1h-6zM-760.5 202.5h9v18.9h-9zM-756.3 221.3h4.1v3.7h-4.1zM-748.9 201.5h10v13.3h-10zM-745.3 224.5h5.1v5.1h-5.1zM-736.5 200.5h13v13.1h-13zM-736 229.1h3.8v3.8h-3.8zM-848.8 263.3h13v13.3h-13zM-845.9 259.3h8.1v4h-8.1zM-847.5 246.2h5.3v5.3h-5.3zM-832.8 261h8v17.8h-8zM-822.7 264h9v13.7h-9zM-817.8 258.2h4.1v5.7h-4.1zM-810.1 264.8h9v12.4h-9zM-809.6 259h3.8v5.7h-3.8zM-797.6 261.7h8v16h-8zM-787.5 266h11v11.8h-11zM-773 259.9h9v18.3h-9zM-770.6 256.4h5.6v3.4h-5.6zM-769.4 249.4h5.5v5.5h-5.5zM-760.1 265.4h8v12.2h-8zM-759 261.1h3.5v4.3h-3.5zM-758.4 247.8h5.8v5.8h-5.8zM-748.8 265.7h9v12.7h-9zM-747.8 260.5h5v5.2h-5zM-703.9 202.2h9v17.9h-9zM-700.4 227.5h3.5v3.5h-3.5zM-665.6 203.4h13v17.1h-13zM-650.3 201.5h12v15.8h-12zM-648.7 217.3h7.7v3.8h-7.7zM-634.9 202.9h12v16.1h-12zM-634.8 219h6.2v3.7h-6.2zM-631.3 232.3h4.6v4.6h-4.6zM-619.3 201.5h10v19h-10zM-615.9 220.5h4.5v3.8h-4.5zM-618.6 227.9h5.7v5.7h-5.7zM-607.1 201.4h13v12.3h-13zM-607.1 213.8h7.4v3.7h-7.4zM-703.7 267.8h12v11.7h-12zM-700.2 250.3h4.2v4.2h-4.2zM-689.4 260.3h9v17.4h-9zM-689.2 255.2h5.8v5.1h-5.8zM-678.1 264.4h12v13.6h-12zM-663.9 263.2h8v14.6h-8zM-652.5 258.4h9v18.6h-9zM-649.8 253.3h4.3v5.1h-4.3zM-639.8 259.5h10v18.4h-10zM-626.1 260.9h9v15.9h-9zM-613.8 262.4h8v17h-8zM-612.6 256.9h4.9v5.5h-4.9zM-610.8 244.2h4.6v4.6h-4.6zM-603.5 262h9v16.2h-9zM-601.8 246.4h4.4v4.4h-4.4zM-561.1 200.6h13v14.3h-13zM-559.5 214.9h9.1v5.6h-9.1zM-544.1 202h13v16.8h-13zM-527 203.1h9v16.8h-9zM-525.3 219.9h5.7v4.4h-5.7zM-514 203.3h9v17.8h-9zM-510.8 221h5.4v5.7h-5.4zM-501.1 201.5h13v17.3h-13zM-500.7 218.8h6.6v4.1h-6.6zM-484.1 201.5h12v17.1h-12zM-481.1 226.7h5v5h-5zM-470 202.2h10v18.5h-10zM-466.5 226.7h4.9v4.9h-4.9zM-456.5 201.1h13v16.9h-13zM-440.8 203.1h8v18.1h-8zM-439.4 221.2h5.5v3.4h-5.5zM-438.1 227.3h4.1v4.1h-4.1zM-561.5 264.6h10v12.1h-10zM-557.6 249.7h3.7v3.7h-3.7zM-535.2 263.3h10v13.5h-10zM-522.8 260.4h8v16.1h-8zM-520.2 245h5.7v5.7h-5.7zM-512.7 262.5h9v14.3h-9zM-509.5 245.5h5.6v5.6h-5.6zM-501.6 259.6h13v18.8h-13zM-484.5 262.4h10v17h-10zM-484.1 257.6h6.3v4.8h-6.3zM-471 262.1h9v15.6h-9zM-468.1 243.8h5.8v5.8h-5.8zM-458.7 261.8h10v16.4h-10zM-455.2 256.9h4v4.8h-4zM-445 261.2h9v16.2h-9zM-400.1 202.3h13v18.5h-13zM-383.9 203.2h11v17.6h-11zM-383.6 226.1h5v5h-5zM-370.4 202.2h9v16.2h-9zM-370.2 218.5h5.6v4.9h-5.6zM-370.1 230.6h4v4h-4zM-358.9 200.8h8v13.6h-8zM-348.9 200.6h9v15.9h-9zM-346 216.6h4.8v5h-4.8zM-346.7 228.9h6v6h-6zM-335.9 202h10v11.4h-10zM-334.1 213.4h6.7v4.5h-6.7zM-322.6 201.9h13v12.8h-13zM-319.7 214.7h8.9v5.2h-8.9zM-306.9 201.2h11v14.6h-11zM-293 203h8v14.9h-8zM-291.7 217.8h3.7v4.4h-3.7zM-290.5 227.3h5.4v5.4h-5.4zM-282.3 200.8h8v18.7h-8zM-282.3 219.4h5.2v3.7h-5.2zM-270.4 203.1h9v14.6h-9zM-266.7 217.7h4v5.5h-4zM-269 224.7h4.1v4.1h-4.1zM-390.6 266.2h12v12.5h-12zM-389.6 261h8.2v5.1h-8.2zM-376.1 262.4h10v16.7h-10zM-363.1 258.6h10v18.1h-10zM-361.1 253.6h6.5v5h-6.5zM-359.4 243.7h3.8v3.8h-3.8zM-338.2 266.7h8v12h-8zM-335.6 262.5h3.9v4.2h-3.9zM-326.3 265.8h9v11h-9zM-315 267.1h13v11.7h-13zM-313.7 246.1h5.7v5.7h-5.7zM-297.9 262.2h8v14.5h-8zM-296.6 258.7h3.6v3.5h-3.6zM-287 260h12v18.6h-12zM-284.6 254.9h6.4v5h-6.4zM-271 264.4h12v15h-12zM-238 202.3h13v13h-13zM-235.3 215.3h7.7v3.2h-7.7zM-221.3 201.3h11v17.3h-11zM-220.7 218.7h6.9v3.3h-6.9zM-207 200.9h8v14.6h-8zM-194.9 202.6h13v11.2h-13zM-191.7 228.7h5.7v5.7h-5.7zM-179.4 201.2h11v16.1h-11zM-166 203.5h9v16.5h-9zM-153.6 201.2h9v12.8h-9zM-152.9 227.8h4.2v4.2h-4.2zM-142.4 201.3h8v14.8h-8zM-139.2 216.1h3.7v5.3h-3.7zM-131.3 201h10v15.2h-10zM-118.4 202.6h9v12.6h-9zM-116.9 215.2h5.6v5.3h-5.6zM-116.9 230h3.6v3.6h-3.6zM-106.8 201.3h8v12.6h-8zM-105.9 213.8h3.3v4.3h-3.3zM-103.6 224.8h5.5v5.5h-5.5zM-80.8 200.6h10v12.8h-10zM-66.9 202.9h9v16.4h-9zM-63.5 232.2h5.4v5.4h-5.4zM-54.9 201.6h9v17.4h-9zM-52.4 219h5v5.8h-5zM-43.5 201.6h13v12.7h-13zM-40.9 214.3h6.4v5.2h-6.4zM-27.4 202.5h11v18.9h-11zM-236.6 265.2h10v12.6h-10zM-235.7 259.8h6.3v5.5h-6.3zM-224.2 262.5h11v15.7h-11zM-219.7 258.8h5.5v3.7h-5.5zM-209.6 258h13v18.5h-13zM-205 253.3h7v4.7h-7zM-205.8 251.5h3.9v3.9h-3.9zM-192.5 262.6h12v15.7h-12zM-189.4 257.9h5.8v4.7h-5.8zM-190 244.1h4.2v4.2h-4.2zM-177.2 259.9h10v18.6h-10zM-176.1 254.3h4.9v5.6h-4.9zM-163.6 265.1h8v12.5h-8zM-161.7 243h5.2v5.2h-5.2zM-152.7 258.7h13v18h-13zM-137.2 265.8h8v12.7h-8zM-133.2 243.8h4.3v4.3h-4.3zM-125.5 265.3h10v12.6h-10zM-122 261.3h6.3v4h-6.3zM-111.5 262.9h12v15.8h-12zM-107.3 257.3h4.9v5.6h-4.9zM-95.5 261.6h9v17.7h-9zM-91.8 256.4h3.8v5.2h-3.8zM-84.4 264.1h9v12.4h-9zM-83.7 246.3h4v4h-4zM-72.4 264.7h9v13.7h-9zM-69.1 260.8h5.2v3.9h-5.2zM-47.3 264h13v12.6h-13zM-46.4 259.9h8.5v4h-8.5zM-30.4 261.8h9v15.2h-9zM-27.3 256.9h3.6v4.9h-3.6zM-27.1 250.4h4.3v4.3h-4.3zM12.9 203.4h9v16.6h-9zM15.8 220h4.1v5.7h-4.1zM24.2 200.9h8v11.9h-8zM27.7 212.8h4.2v5h-4.2zM35.5 201.2h11v17.9h-11zM38.3 219.1h6.8v3.9h-6.8zM38.3 230.4h3.5v3.5h-3.5zM49.7 201.7h11v14.1h-11zM51.3 232.4h4.9v4.9h-4.9zM76.8 202.4h12v15.5h-12zM79.5 230.6h3.9v3.9h-3.9zM90.9 200.9h10v11.7h-10zM91.4 212.6h4.6v3.8h-4.6zM103.7 202.5h11v16.5h-11zM105.6 219h7.1v5.3h-7.1zM116.8 202.9h9v13.9h-9zM117 216.8h4.9v3h-4.9zM128.3 203.2h11v15.8h-11zM131.7 225.5h4.7v4.7h-4.7zM142.9 201.4h11v15.6h-11zM146.8 229.8h3.9v3.9h-3.9zM157.8 202.9h9v13.6h-9zM160 216.5h4.6v4.7h-4.6zM170.5 201h11v13.5h-11zM185.7 201.2h11v15.1h-11zM211.7 203.3h9v15.3h-9zM12.1 265.3h10v13.6h-10zM24.8 264.8h8v12.7h-8zM26.4 261.4h3.7v3.4h-3.7zM36.6 260.1h9v18.6h-9zM39.2 255.9h5.6v4.2h-5.6zM47.7 261.5h9v15.6h-9zM50.1 244.6h4.1v4.1h-4.1zM60.5 259.4h10v18.9h-10zM60.8 247.7h3.7v3.7h-3.7zM73.5 263.2h9v15.6h-9zM86.5 265.1h9v12.2h-9zM87 244.8h3.8v3.8h-3.8zM99.1 259.9h9v18.5h-9zM99.6 255.9h5v4h-5zM111.4 261.5h10v15.6h-10zM124.4 263h10v15.5h-10zM137.6 263.6h9v15.2h-9zM139.9 248.7h5.2v5.2h-5.2zM149.2 265.1h13v13.1h-13zM154.4 260.3h5.7v4.8h-5.7zM164.5 261.8h9v15.1h-9zM166 256h3.7v5.8h-3.7zM175.5 260.6h12v16.2h-12zM190.7 262.7h9v15.8h-9zM194.5 259.1h5.1v3.7h-5.1zM191.5 247.1h5.7v5.7h-5.7zM203 263.3h10v13.3h-10zM203.7 258.7h4.3v4.6h-4.3zM203.3 244.7h3.8v3.8h-3.8zM-1138.3 303h12v18.6h-12zM-1135.5 324.7h5.8v5.8h-5.8zM-1122.6 301.6h11v18.6h-11zM-1108.3 301.1h11v15.3h-11zM-1107.7 329.9h4.3v4.3h-4.3zM-1094.1 300.9h9v11.7h-9zM-1069.2 302.4h8v11.1h-8zM-1058.2 302.1h8v17.5h-8zM-1055.1 319.6h3.4v5.8h-3.4zM-1046.8 303.2h11v12h-11zM-1032.7 301.3h10v16.1h-10zM-1135.1 360.3h8v16.6h-8zM-1123.2 357.4h9v17.1h-9zM-1121.5 340.3h5.4v5.4h-5.4zM-1110.9 361h8v14.8h-8zM-1098.8 358.8h12v18.1h-12zM-1097.4 353.9h6.9v5h-6.9zM-1096.8 346.5h5v5h-5zM-1084.3 358.3h12v16.9h-12zM-1081 354.5h8.1v3.9h-8.1zM-1052.5 362.8h13v14.4h-13zM-1048.8 342.5h5.4v5.4h-5.4zM-1035.4 363.7h10v12h-10zM-1031.9 345.9h5.9v5.9h-5.9zM-1023.1 360.3h10v15.3h-10zM-1020 356.2h4v4.1h-4zM-990.9 302h10v11.3h-10zM-989.3 313.3h4v4.5h-4zM-976.9 301.2h8v14.3h-8zM-966.5 301.3h12v13.9h-12zM-965.2 315.2h8.3v5.2h-8.3zM-966.1 331.6h5.9v5.9h-5.9zM-950.6 302.8h13v12.5h-13zM-948 315.2h8.2v5.2h-8.2zM-935.1 302.7h10v12.1h-10zM-932.4 329.8h4.3v4.3h-4.3zM-923 300.5h8v13.5h-8zM-912.7 302.9h9v14.8h-9zM-909.2 317.8h5.3v3.5h-5.3zM-900.1 301.7h13v18.8h-13zM-898.8 331.5h3.7v3.7h-3.7zM-884.7 302.4h9v18h-9zM-882.2 320.4h4.7v4.9h-4.7zM-990.8 363.6h8v11.7h-8zM-989.2 358.7h5.5v4.8h-5.5zM-986.9 342.7h4v4h-4zM-980.8 363.1h8v12.6h-8zM-980 357.6h5.2v5.5h-5.2zM-980.6 342.7h4.8v4.8h-4.8zM-969.2 357h8v18.6h-8zM-968.3 353.5h5.4v3.5h-5.4zM-958.5 359.9h13v16.2h-13zM-942.5 360.9h10v14.3h-10zM-941 342.3h4.9v4.9h-4.9zM-929.4 360h12v14.9h-12zM-913.7 362.4h13v13.5h-13zM-909.7 343.1h3.6v3.6h-3.6zM-897 362.9h9v12h-9zM-896.4 356.9h6v6h-6zM-846.8 300.7h10v15h-10zM-846.5 315.7h5.7v6h-5.7zM-834.7 302.4h13v12.6h-13zM-833.6 315h7v4.3h-7zM-819.5 301.7h10v18.8h-10zM-819.1 330h5.3v5.3h-5.3zM-806.7 301.4h8v17.9h-8zM-804.8 319.4h5.1v4.3h-5.1zM-794.7 301.8h11v12.2h-11zM-794.6 314h5.9v5.8h-5.9zM-780.5 303.1h9v14.8h-9zM-780.3 317.9h5.5v3.9h-5.5zM-776.8 325.8h5.6v5.6h-5.6zM-769.1 302.1h12v11.4h-12zM-754.6 303.5h10v17.5h-10zM-847.5 363h9v11.8h-9zM-844.6 346.4h4.4v4.4h-4.4zM-822.4 363.3h9v12.4h-9zM-819.5 358.6h5v4.7h-5zM-794.8 358.8h8v17.6h-8zM-784.7 362.1h9v14h-9zM-783.3 346.6h3.9v3.9h-3.9zM-771.8 357h10v17.9h-10zM-759.7 359.6h11v15.4h-11zM-754.3 355.4h5.3v4.2h-5.3zM-759.6 345.3h4.8v4.8h-4.8zM-744.9 363.2h8v11.6h-8zM-703.5 303.3h9v15.2h-9zM-692.1 301.2h13v15.7h-13zM-690.8 316.9h8.5v3.6h-8.5zM-676.5 303.3h10v14.7h-10zM-664.4 301.6h12v14.2h-12zM-660.9 315.8h5.3v5h-5.3zM-633.5 302.8h12v17h-12zM-630.1 329.5h3.8v3.8h-3.8zM-617.4 301.2h8v17.6h-8zM-616.1 318.8h5.3v3.8h-5.3zM-607.4 302.3h8v11.6h-8zM-596.4 302h9v13h-9zM-594.6 314.9h5.6v5.3h-5.6zM-704.1 359.4h12v17.1h-12zM-700.6 353.8h5.6v5.6h-5.6zM-689.2 362.6h11v13.8h-11zM-686.4 346.4h5.4v5.4h-5.4zM-675.8 364.4h8v13h-8zM-663.7 365.3h8v12.1h-8zM-663.6 359.6h5v5.7h-5zM-662.4 346.6h3.6v3.6h-3.6zM-653.2 364h8v11.3h-8zM-651.6 358.9h5v5.1h-5zM-642.9 358.2h8v19h-8zM-631.6 362.4h11v14.2h-11zM-617 364.8h9v11.2h-9zM-615.3 360.5h5.5v4.4h-5.5zM-604.5 362.5h8v12.1h-8zM-593.8 359.4h8v17.5h-8zM-591.8 353.7h4.6v5.7h-4.6zM-593.4 347h5.3v5.3h-5.3zM-545.2 302h8v15.7h-8zM-533.6 301.1h8v12.7h-8zM-530.6 313.8h4.7v4.3h-4.7zM-529.7 332.1h5v5h-5zM-522.2 302.4h10v15.4h-10zM-508.4 301.8h12v16.3h-12zM-493.9 300.7h12v13.7h-12zM-492.1 314.4h7.4v4h-7.4zM-478.8 303h9v14.7h-9zM-477.4 326.9h5.2v5.2h-5.2zM-466.1 301.6h10v15.2h-10zM-462.7 328.2h4.1v4.1h-4.1zM-440.2 302.2h10v11.5h-10zM-440.1 313.8h5.1v3.2h-5.1zM-559.8 360.8h8v14.8h-8zM-555.5 355.7h3.7v5h-3.7zM-559.6 344.3h5.2v5.2h-5.2zM-549.4 359.5h10v17.3h-10zM-547.9 356.3h4.6v3.3h-4.6zM-536 359.9h10v15.8h-10zM-531.3 354.9h4.7v5h-4.7zM-522.5 362.2h10v13.2h-10zM-509.4 359.5h9v17.3h-9zM-496.3 360.7h8v14.6h-8zM-496.1 356.8h4.7v3.9h-4.7zM-486.2 364.7h10v12.3h-10zM-472.3 365.5h9v11.9h-9zM-467.4 361.8h4v3.7h-4zM-460.9 365.6h9v11.8h-9zM-447.7 358.2h12v18.2h-12zM-433.1 359.2h11v18.2h-11zM-429.9 340.4h5.7v5.7h-5.7zM-400.4 301.3h11v16.8h-11zM-397.2 318.1h7.6v4.8h-7.6zM-387.3 301.9h8v17.4h-8zM-387.2 319.3h5.5v5.6h-5.5zM-377.3 301.8h8v15.7h-8zM-366.6 302.1h9v14.2h-9zM-363.5 316.4h5.7v4.3h-5.7zM-355.2 301.6h8v11.2h-8zM-344.2 301.1h12v16.5h-12zM-330.1 303.2h9v12.8h-9zM-319 303.5h13v11.5h-13zM-303.5 301.2h9v17.7h-9zM-301.6 318.9h4.2v5.9h-4.2zM-291.7 300.5h10v16.1h-10zM-288.6 326.9h4.1v4.1h-4.1zM-277.7 300.7h8v17.8h-8zM-277.1 318.4h3.5v3.3h-3.5zM-267.6 302.4h10v18.6h-10zM-264.7 320.9h6v4.8h-6zM-391.7 361.2h9v13.3h-9zM-379.6 364.8h10v11.5h-10zM-349.7 365.2h9v11.4h-9zM-346.9 361.8h5v3.3h-5zM-349.6 344.7h4.1v4.1h-4.1zM-338 360.1h13v16.9h-13zM-322.8 363.3h11v13.6h-11zM-319.8 357.9h4.8v5.4h-4.8zM-308 363h9v13.4h-9zM-280.1 362.6h10v12.5h-10zM-235.9 302.6h11v15.2h-11zM-222.8 303h9v11.2h-9zM-210.7 301.9h11v17.8h-11zM-206.8 319.7h6.8v4.6h-6.8zM-197.5 300.5h8v13.5h-8zM-186.8 301.3h9v15.8h-9zM-185.5 317.1h4.8v6h-4.8zM-186.1 330.4h4.8v4.8h-4.8zM-174.3 301.8h9v11.5h-9zM-171.8 331.7h4.4v4.4h-4.4zM-162.3 302.3h9v13.9h-9zM-159.4 316.2h4.9v4.8h-4.9zM-158.7 329.9h4.8v4.8h-4.8zM-150 301.2h10v12h-10zM-137 302.1h10v15.7h-10zM-134.8 317.8h6.1v4.4h-6.1zM-133.1 326.3h3.9v3.9h-3.9zM-123.7 302.5h8v16.5h-8zM-112.8 303.4h9v18.9h-9zM-109.8 322.2h5.3v5.1h-5.3zM-86 301.8h10v17.3h-10zM-59.6 301.3h10v12h-10zM-45.5 301.1h9v14.2h-9zM-33.5 301.9h10v13.9h-10zM-32.8 315.7h6.6v5.7h-6.6zM-19.3 300.6h11v14h-11zM-19.2 314.6h6.5v3h-6.5zM-238.5 358h12v17.4h-12zM-238.1 354.2h7.4v3.9h-7.4zM-223.9 360.4h9v15.9h-9zM-212.9 360.8h11v15.8h-11zM-198.5 364.8h9v11.3h-9zM-197.9 360.7h5.8v4.1h-5.8zM-195.4 343.3h4.2v4.2h-4.2zM-187.4 364h8v11h-8zM-186 360h4.9v4h-4.9zM-175.9 361.2h11v15.9h-11zM-175.5 355.5h7.5v5.7h-7.5zM-162 357.2h8v18.3h-8zM-159.6 353.2h4.3v3.9h-4.3zM-150.7 363.1h12v14h-12zM-134.6 362.2h9v14h-9zM-133 358.5h4.3v3.7h-4.3zM-122.1 363.7h8v11.4h-8zM-111.7 358.9h8v16.2h-8zM-101.6 357h9v18.6h-9zM-89.1 361.5h9v15.8h-9zM-77.2 357.3h10v18.6h-10zM-73.1 351.3h4.6v6h-4.6zM-53.1 362.5h9v12.2h-9zM-52.9 344.7h5.9v5.9h-5.9zM-41.9 357.6h12v18.7h-12zM-26 360.1h9v17.2h-9zM14.2 302.5h12v17.6h-12zM20 320.1h6.1v5.8h-6.1zM16.7 327.7h4.7v4.7h-4.7zM29.5 302.9h10v11.2h-10zM30 314.1h5.9v4.2h-5.9zM29.7 331.5h3.9v3.9h-3.9zM41.6 301.1h10v17h-10zM55.7 301.5h13v15.8h-13zM57.1 317.3h7.4v3.7h-7.4zM56.9 329h5.6v5.6h-5.6zM72.5 301.5h11v15.7h-11zM75.2 317.2h6.2v3.8h-6.2zM73.6 330.1h3.8v3.8h-3.8zM87.6 303.2h11v16.8h-11zM88 320h6.2v4.3h-6.2zM100.8 302.4h13v11h-13zM103.1 313.4h6.8v4.2h-6.8zM100.9 329.8h4.9v4.9h-4.9zM117.8 301.7h10v15.8h-10zM118.7 317.5h5.3v4.7h-5.3zM130.2 303h10v14.4h-10zM130.6 317.4h6.4v4.3h-6.4zM142.8 301.9h9v11.7h-9zM154.4 300.7h9v14.7h-9zM166.7 303.4h13v18.7h-13zM169.4 322.2h5.3v4.4h-5.3zM182.8 300.5h11v12.3h-11zM183.8 312.8h6.7v3.1h-6.7zM197.9 301.6h9v16.5h-9zM202.2 318.1h4.4v6h-4.4zM209.7 302.4h10v16.6h-10zM210.1 319h5v3.9h-5zM11.5 364.7h13v12h-13zM15 361.1h6.1v3.6h-6.1zM28.6 360.8h10v16h-10zM31.9 346.7h5.3v5.3h-5.3zM42.6 361.7h9v15.2h-9zM44.6 357.3h5v4.3h-5zM54 359.2h8v15.6h-8zM56.4 355.1h4.9v4.1h-4.9zM57.6 343h4.7v4.7h-4.7zM66 358.8h13v16.1h-13zM83.2 365.3h9v11.7h-9zM94.4 364.3h8v12.1h-8zM105.6 360.6h9v14.3h-9zM108.5 357h4.2v3.6h-4.2zM116.9 358.4h13v18.1h-13zM119.2 354.4h8.9v3.9h-8.9zM120.2 343.1h3.6v3.6h-3.6zM133.2 363h9v14.2h-9zM136.2 348.7h4.5v4.5h-4.5zM146.4 363.3h8v13.1h-8zM156.6 358.1h11v16.9h-11zM158.7 344.3h4.2v4.2h-4.2zM171.6 366h11v11.3h-11zM175.5 345.8h5.9v5.9h-5.9zM184.7 356.7h8v18h-8zM186.7 352.6h3.7v4.2h-3.7zM185.9 341.7h5.8v5.8h-5.8zM195.2 363.2h10v14.1h-10zM198.3 359.1h6.5v4.1h-6.5zM207.7 359.4h11v16.8h-11zM211.7 354.4h7v4.9h-7zM211.2 343.7h5.9v5.9h-5.9zM-1136.2 400h9v11.6h-9zM-1134.8 423.2h5.4v5.4h-5.4zM-1124.2 399.2h13v18.1h-13zM-1109 399.1h10v19h-10zM-1108.8 418.1h6.4v5.1h-6.4zM-1095 398.7h9v12h-9zM-1091 410.7h4.6v3.7h-4.6zM-1082.5 399.2h13v15.6h-13zM-1067 399.7h10v19h-10zM-1064.1 425.1h3.9v3.9h-3.9zM-1055 398.5h9v17h-9zM-1044 400.6h9v11h-9zM-1031.6 399.2h9v17.6h-9zM-1136.9 456.3h10v15.3h-10zM-1124.7 462.1h9v11.8h-9zM-1112.7 460.9h13v12.9h-13zM-1096.7 460.2h11v11.7h-11zM-1094.4 455.2h4.7v4.9h-4.7zM-1093.4 441.5h4.7v4.7h-4.7zM-1083.4 461.1h9v12.9h-9zM-1080.5 457.7h3.6v3.3h-3.6zM-1070.4 460.2h12v11.5h-12zM-1055 459.4h12v13.8h-12zM-1049.2 456.4h5.4v3.1h-5.4zM-1038.9 461.1h11v11.8h-11zM-1038.2 439h4v4h-4zM-1024.4 453.8h13v19h-13zM-977.1 399.7h10v14.7h-10zM-964 399.1h10v15.8h-10zM-950 399.3h12v11.1h-12zM-948.5 410.5h5.8v5.3h-5.8zM-907.8 399.8h8v14h-8zM-905.5 413.8h3.4v5.3h-3.4zM-896.3 401.3h12v14.2h-12zM-894 415.5h7.6v4.4h-7.6zM-895.1 424.9h5.9v5.9h-5.9zM-882.2 398.9h8v17.6h-8zM-878.2 416.6h3.3v4.5h-3.3zM-989.6 458.5h10v13.9h-10zM-976.8 455.1h13v17.9h-13zM-975.7 441.5h5v5h-5zM-960.8 452.7h9v18.9h-9zM-959.4 442.4h4.4v4.4h-4.4zM-947.7 456.4h10v17h-10zM-946.2 451.4h5v5h-5zM-943.8 442.6h3.7v3.7h-3.7zM-933.7 455h9v17.2h-9zM-932.7 451.8h5.1v3.2h-5.1zM-932.7 437.6h5.4v5.4h-5.4zM-921.4 459.2h8v14h-8zM-920.9 453.7h4.1v5.5h-4.1zM-896.7 460h8v13.1h-8zM-884.8 456.9h12v17.3h-12zM-850.3 399.9h10v12.1h-10zM-847.7 411.9h4.3v3.5h-4.3zM-849.2 425.8h5.5v5.5h-5.5zM-837.7 400.1h10v18.6h-10zM-832.9 418.7h5.2v4.1h-5.2zM-824.9 401h11v13.8h-11zM-824.3 414.8h7.4v4h-7.4zM-811.4 400.4h10v17.1h-10zM-797.3 400h8v16h-8zM-795.4 416h5.2v4.6h-5.2zM-785.8 401.2h12v14.6h-12zM-785.1 415.8h7.8v3.8h-7.8zM-770.6 401.2h13v13.1h-13zM-765.5 414.3h5.8v4.6h-5.8zM-755.5 401.3h13v16.4h-13zM-754 417.7h8.2v3.3h-8.2zM-739 401.1h13v16.5h-13zM-735.6 417.6h6.1v3.9h-6.1zM-737.6 423.6h4.6v4.6h-4.6zM-850 455.1h8v18h-8zM-848.9 450.4h4v4.7h-4zM-838.8 458.8h10v14.2h-10zM-838.8 453h6.5v5.8h-6.5zM-825.2 455.3h13v17.4h-13zM-823.8 452.1h7.7v3.3h-7.7zM-824.4 440.8h4.6v4.6h-4.6zM-809.6 454.3h8v17.2h-8zM-808.6 449h4.2v5.3h-4.2zM-797.7 461.2h9v13.1h-9zM-796 457.5h3.8v3.7h-3.8zM-796.3 442.3h4.9v4.9h-4.9zM-786.7 457.8h10v16.1h-10zM-785.2 454.7h6.1v3h-6.1zM-773.7 456.8h13v15h-13zM-757.2 462h8v12h-8zM-756.2 456h3.5v6h-3.5zM-745.8 459.8h9v14h-9zM-689.8 401.4h8v18.5h-8zM-689.3 424.4h4.5v4.5h-4.5zM-667.7 399.9h9v15.7h-9zM-656.7 398.7h8v11.3h-8zM-646.4 399.7h12v13h-12zM-630.7 399.5h10v15.6h-10zM-629 415.1h6.9v5.3h-6.9zM-617.3 398.8h9v18.8h-9zM-605 398.5h10v15.3h-10zM-601.1 413.8h5.4v4.7h-5.4zM-603.5 423.3h3.7v3.7h-3.7zM-703.4 452.8h8v18.7h-8zM-702.5 447.4h5.1v5.4h-5.1zM-692.4 457.6h13v16.8h-13zM-676.9 454.2h11v18.5h-11zM-663.2 456.4h10v17.9h-10zM-659.5 441.3h5.4v5.4h-5.4zM-649.1 463h8v11.5h-8zM-646.2 458h4.4v5h-4.4zM-638.4 458.6h8v13.3h-8zM-626.4 454.6h9v17.1h-9zM-622.2 450.7h4.2v3.9h-4.2zM-614.4 454.3h8v17.9h-8zM-612.4 449.6h4.4v4.7h-4.4zM-604.3 456h13v17.8h-13zM-560.4 398.5h9v17.6h-9zM-558 416.1h5.1v3.1h-5.1zM-557.6 422.7h5.4v5.4h-5.4zM-548.9 401h9v14.8h-9zM-548.8 415.8h6.2v3.9h-6.2zM-548.7 427.3h4.4v4.4h-4.4zM-535.9 400.6h9v18.9h-9zM-532.2 424.1h4.5v4.5h-4.5zM-523.9 399.2h10v12h-10zM-510.6 400.2h11v13.6h-11zM-507.8 426.4h5.6v5.6h-5.6zM-497.1 399.6h9v14.2h-9zM-494.6 425.3h5v5h-5zM-485.1 398.8h8v18.5h-8zM-482.4 417.3h4.9v4.4h-4.9zM-474.6 400.9h9v12.1h-9zM-471.4 413h5.4v5.3h-5.4zM-462.5 400.9h10v15.4h-10zM-449.2 398.5h9v13h-9zM-448.7 424h4.6v4.6h-4.6zM-436.2 399.7h10v17h-10zM-436.1 416.6h5.4v3.5h-5.4zM-562.4 463.2h9v11.2h-9zM-559.5 459h4.3v4.2h-4.3zM-549.8 459h10v14.9h-10zM-548.4 455.8h5.3v3.2h-5.3zM-536.5 458.1h10v16h-10zM-531.5 454h5v4.1h-5zM-536.4 440.5h3.8v3.8h-3.8zM-524 458h10v16.4h-10zM-510.9 456.7h11v17.3h-11zM-496.9 457.2h9v15.6h-9zM-494.7 439.6h5.1v5.1h-5.1zM-485.2 462.5h13v11h-13zM-483.8 456.6h6.9v5.9h-6.9zM-468.5 458.1h11v15.5h-11zM-464.5 454.5h6.2v3.6h-6.2zM-465.1 440.1h4.4v4.4h-4.4zM-454.6 458.8h10v13.3h-10zM-453.7 445.6h4.6v4.6h-4.6zM-441.1 461.1h10v12.2h-10zM-402.1 400h9v16.8h-9zM-400.2 416.8h3.9v3.7h-3.9zM-388.9 399.9h9v11.9h-9zM-388.7 411.8h3.9v3.4h-3.9zM-377.7 401.3h8v12h-8zM-376.4 413.3h4.4v5.7h-4.4zM-374.8 427.7h5.6v5.6h-5.6zM-366.8 400.9h12v11.5h-12zM-351.6 401.4h13v13.2h-13zM-345.3 414.6h5.6v3.8h-5.6zM-336.1 400h13v12.4h-13zM-320.3 399.1h12v17.1h-12zM-319.4 416.1h4.9v4.3h-4.9zM-317.9 429.7h4.4v4.4h-4.4zM-305.7 399.4h13v13.1h-13zM-301.7 412.5h6.4v3h-6.4zM-290.6 400.1h8v17.6h-8zM-279.3 399.8h13v12.1h-13zM-273.8 412h5.3v4.8h-5.3zM-402 454.4h10v17.6h-10zM-400.1 446.2h4v4h-4zM-388 455.8h10v18.5h-10zM-387.7 450.7h6.7v5h-6.7zM-386.2 437.2h6v6h-6zM-373.9 456.5h10v17.4h-10zM-361.1 455.5h9v17.9h-9zM-358.3 450.3h5.9v5.2h-5.9zM-357.7 444.1h5.1v5.1h-5.1zM-348 459.2h8v14h-8zM-337.5 453.4h10v18.6h-10zM-335.8 449.8h5.3v3.6h-5.3zM-324.8 456.2h9v15.8h-9zM-297.7 460.7h10v13.6h-10zM-294.5 456h6.6v4.6h-6.6zM-285.6 456.7h9v14.8h-9zM-284.7 453.1h6.2v3.7h-6.2zM-273.7 457.9h12v15.5h-12zM-267.8 454.8h5.3v3.2h-5.3zM-237.4 400.1h8v14.4h-8zM-233.6 426.3h5.3v5.3h-5.3zM-225.9 399.6h11v15.3h-11zM-211.3 400.8h9v15.5h-9zM-199 400.9h13v15.3h-13zM-182.1 400.9h13v15.1h-13zM-166 399.2h8v14.6h-8zM-164.6 426.3h5.5v5.5h-5.5zM-155.3 399.7h13v13.7h-13zM-127.4 400.7h8v15.1h-8zM-125.8 415.9h3.3v3.5h-3.3zM-115.8 398.6h12v18.6h-12zM-100.5 399.8h9v15.4h-9zM-99.6 415.2h6.1v3.5h-6.1zM-88.8 399.4h10v13.1h-10zM-84.8 412.6h5.9v4.7h-5.9zM-76.3 400.7h11v13.2h-11zM-75.7 425.4h5.2v5.2h-5.2zM-63.1 401h9v17.5h-9zM-61.9 418.5h6.1v3.4h-6.1zM-50.2 399.3h13v14.1h-13zM-48.8 413.4h6.4v5.4h-6.4zM-33.9 399.1h8v14h-8zM-33 413.2h4.9v5.2h-4.9zM-30.6 423.5h5.2v5.2h-5.2zM-23.9 401.2h9v17.5h-9zM-238.1 459.4h8v13.8h-8zM-227.2 453.7h10v17.9h-10zM-224.7 449.4h6.9v4.2h-6.9zM-224.3 439.6h4.9v4.9h-4.9zM-213.7 454.3h8v18.4h-8zM-203.6 460.3h8v13h-8zM-203.5 444.4h4.4v4.4h-4.4zM-193.3 455.2h9v16.8h-9zM-190.9 449.5h6.2v5.7h-6.2zM-181 457.3h10v14.4h-10zM-178.6 454.1h6.6v3.2h-6.6zM-177.5 445.6h4.2v4.2h-4.2zM-167 457.9h8v15h-8zM-157 455.9h8v17.1h-8zM-146.5 457.1h10v16.4h-10zM-143.6 453.4h4.8v3.7h-4.8zM-145.5 444.6h5.8v5.8h-5.8zM-133.1 459.2h12v14.7h-12zM-129.3 442.3h4.9v4.9h-4.9zM-117.9 458.5h9v15.3h-9zM-117.7 443.3h5.9v5.9h-5.9zM-106.8 455.3h12v18.2h-12zM-104.5 451.4h7.1v3.9h-7.1zM-92.2 457.9h9v13.9h-9zM-89 453h3.9v4.9h-3.9zM-80.6 457.6h9v14.2h-9zM-68.2 458.2h10v15.9h-10zM-67.5 454h6v4.2h-6zM-66 437.4h5.6v5.6h-5.6zM-56.2 455.9h9v17.3h-9zM-43 458.6h10v14.5h-10zM-30.5 462h9v11.5h-9zM-28.4 456.5h4.3v5.5h-4.3zM-19.2 455.9h13v16.6h-13zM-19 452.3h5.9v3.6h-5.9zM14.7 399.8h9v17h-9zM15.6 416.8h5.3v3.9h-5.3zM27.1 399.8h12v16.7h-12zM27.3 416.5h7.5v5.6h-7.5zM27.7 428h3.8v3.8h-3.8zM41.5 399.2h11v12.7h-11zM55.7 400h10v17.7h-10zM69.4 399.8h8v16.9h-8zM81.1 400.2h9v12.6h-9zM85.9 412.8h3.8v4.6h-3.8zM93.5 399.9h8v16.4h-8zM104.1 399.4h9v18h-9zM104.8 417.4h5.8v5.2h-5.8zM116.2 400.2h9v14.3h-9zM119 414.5h4.6v3.5h-4.6zM127.7 398.7h12v14.1h-12zM129 412.8h7.5v3.4h-7.5zM142.1 400.5h8v14.8h-8zM152.9 398.6h11v16h-11zM153.4 414.6h5.8v3.1h-5.8zM166.1 399.4h13v15.7h-13zM170.4 415.1h7.9v4.1h-7.9zM182.2 400.7h8v16.9h-8zM193.4 401.2h11v17.5h-11zM207.2 401.3h8v18.4h-8zM217.9 399.1h10v14.1h-10zM220.3 413.3h5.2v5.2h-5.2zM218 428.6h5.3v5.3h-5.3zM15.1 457.7h10v15.4h-10zM15.1 451.8h6.5v5.8h-6.5zM28.8 457.2h9v16h-9zM39.9 459.7h11v11.9h-11zM53.6 453.3h9v18.2h-9zM65.2 458.7h13v14.3h-13zM81.5 460.1h9v13.4h-9zM83.6 454.4h5.7v5.7h-5.7zM83.7 440.5h3.8v3.8h-3.8zM116.3 457.9h10v14.3h-10zM120.4 452.9h4.5v5h-4.5zM119.2 442.1h5.2v5.2h-5.2zM128.5 454.8h10v17.7h-10zM131.1 451.7h4.9v3.2h-4.9zM131.8 442.1h5.1v5.1h-5.1zM141.2 460.3h8v12h-8zM153.1 460.6h9v12.1h-9zM154 455.3h6v5.3h-6zM165.3 462.6h11v11.2h-11zM165.7 457h5.5v5.6h-5.5zM167 443.2h3.8v3.8h-3.8zM180.3 456.3h10v17.7h-10zM181.5 452.2h4.8v4.1h-4.8zM181.5 444h3.9v3.9h-3.9zM193.9 459.8h13v12.7h-13zM195.5 454h7.4v5.8h-7.4zM211 459.6h12v13h-12zM-1138 498.3h9v18.2h-9zM-1126 496.9h13v11.6h-13zM-1122.6 520.4h4.3v4.3h-4.3zM-1110 496.7h9v11.4h-9zM-1107.9 522.1h6v6h-6zM-1098 497.1h10v12.6h-10zM-1094.9 509.7h5.9v3.4h-5.9zM-1097.3 524.4h4.1v4.1h-4.1zM-1085 497.1h13v16.1h-13zM-1068.5 497.8h10v18.6h-10zM-1054.6 496.7h12v18.2h-12zM-1039.1 497.6h8v14.1h-8zM-1038.7 511.7h5.3v3.1h-5.3zM-1028.2 496.5h10v16h-10zM-1025.4 526h4.4v4.4h-4.4zM-1134.7 550.8h11v17.1h-11zM-1134.1 537.3h3.9v3.9h-3.9zM-1120.5 553.1h8v14.2h-8zM-1116.8 533.6h4.5v4.5h-4.5zM-1108.7 551.6h10v17.1h-10zM-1095.8 554.1h11v13.5h-11zM-1081.6 552.6h13v14.4h-13zM-1065.1 552.9h10v15h-10zM-1061.8 548.1h5.8v4.8h-5.8zM-1062.5 539.7h4.1v4.1h-4.1zM-1052 552.2h10v15.4h-10zM-1038 550.5h8v16.4h-8zM-1025.9 550h9v17.1h-9zM-1025.5 544.9h6v5.1h-6zM-992 496.9h8v11.8h-8zM-990.7 521.3h5.3v5.3h-5.3zM-980.1 497.3h9v12.4h-9zM-967.8 496.2h10v13.8h-10zM-965.4 510h5.1v5.5h-5.1zM-953.6 497.7h13v17.6h-13zM-950.2 515.3h9v3.9h-9zM-952.7 523.8h6v6h-6zM-936.6 496.2h9v16.8h-9zM-924 495.6h8v15.9h-8zM-922.8 511.5h5.1v5.7h-5.1zM-913.8 495.6h10v14.1h-10zM-911.2 509.7h6.6v3.2h-6.6zM-901.7 496.6h8v12.6h-8zM-901.2 509.1h3.9v4.9h-3.9zM-901.6 526h5.6v5.6h-5.6zM-891.3 496.5h8v15.7h-8zM-880.1 498.4h9v16.9h-9zM-877 526h3.5v3.5h-3.5zM-989.8 552.9h8v15.1h-8zM-986.6 548.9h4.2v4h-4.2zM-966.1 550.2h8v18.9h-8zM-962.9 544.6h3.5v5.6h-3.5zM-954.7 549.2h9v19h-9zM-942.5 556.4h12v11.6h-12zM-927.3 548.6h9v18.3h-9zM-925.8 544.7h6v3.8h-6zM-914.2 554.2h12v15h-12zM-908.2 549.9h5.8v4.2h-5.8zM-899 552.4h11v16h-11zM-897.4 539.3h4.1v4.1h-4.1zM-885.4 550.8h8v16.9h-8zM-848.3 497.9h8v18.4h-8zM-845.1 516.3h4.2v3.9h-4.2zM-837.9 495.9h9v11.2h-9zM-834 507.1h5v5.2h-5zM-825.8 497.7h8v12.6h-8zM-824.5 510.2h5v5.3h-5zM-802.4 497.8h10v15.8h-10zM-788.2 495.7h8v13.1h-8zM-787.8 508.7h5.2v3.6h-5.2zM-777.5 496h10v14.5h-10zM-775 510.5h4.3v3.1h-4.3zM-777.2 527h5.9v5.9h-5.9zM-764.9 497.5h11v13.2h-11zM-750.8 497.5h13v12h-13zM-849.6 552.2h11v14.9h-11zM-835 552.7h12v13.8h-12zM-819.7 553.3h8v15.7h-8zM-815.8 548.4h4v4.9h-4zM-816.2 539.5h4.3v4.3h-4.3zM-809.6 553.7h11v14h-11zM-808.4 549.6h6.2v4.1h-6.2zM-808.6 537.7h4.1v4.1h-4.1zM-795.9 554h9v13.1h-9zM-768.3 554.6h9v12.1h-9zM-766.2 548.8h5.6v5.8h-5.6zM-757.1 549.9h8v18.2h-8zM-756.2 544.5h3.3v5.3h-3.3zM-754.3 535.4h3.8v3.8h-3.8zM-704.4 497.8h10v15.9h-10zM-702.8 513.6h4.5v4.1h-4.5zM-701.7 523.2h5.9v5.9h-5.9zM-691.5 498.4h8v14.6h-8zM-687.7 513h3.8v4.7h-3.8zM-669.5 497.9h10v14.8h-10zM-669.4 520.1h5.8v5.8h-5.8zM-656.9 497.2h8v15.9h-8zM-654.9 513.1h5.5v6h-5.5zM-645 498.3h8v15.8h-8zM-643.4 520.3h4.6v4.6h-4.6zM-633.2 496.2h12v17.6h-12zM-632.9 513.8h8.2v3.6h-8.2zM-619.2 498.1h13v13.1h-13zM-603.8 497.8h8v16.3h-8zM-593 498.2h9v18.6h-9zM-592.8 516.8h4.9v3.5h-4.9zM-591.9 524.4h5.2v5.2h-5.2zM-703.7 550.6h12v16.5h-12zM-688.2 552.9h9v15.1h-9zM-677 555.2h9v11.7h-9zM-663.8 551.5h8v17.8h-8zM-661.2 547.6h5.1v3.9h-5.1zM-652.1 549.7h9v19h-9zM-649.4 544.6h6.1v5.1h-6.1zM-651.6 537.7h5.4v5.4h-5.4zM-639.5 550h13v18h-13zM-622.4 552.9h10v14.4h-10zM-618.4 549.6h5.2v3.3h-5.2zM-609.8 550.5h11v16.8h-11zM-608.3 545.7h6.9v4.8h-6.9zM-595.7 551.4h9v15.3h-9zM-560 495.9h8v13.2h-8zM-557.7 509.1h5.5v5.8h-5.5zM-548.4 498.5h11v15.5h-11zM-521 498.1h10v18h-10zM-520.2 516.1h6.5v4.3h-6.5zM-507.2 496.1h12v16.5h-12zM-491.4 495.9h10v17.4h-10zM-489.6 513.3h6.6v3.8h-6.6zM-479 497.7h12v12.8h-12zM-463.5 497.5h8v11.3h-8zM-452 497.1h12v13.1h-12zM-449.3 510.3h7.1v3.2h-7.1zM-436 496.6h13v12.3h-13zM-430.3 508.8h6.6v3.1h-6.6zM-559.7 556.1h11v11.7h-11zM-546.2 555.9h10v12.7h-10zM-532.9 554.6h13v13.8h-13zM-529.3 548.7h8.9v5.9h-8.9zM-516 553.8h13v14.8h-13zM-513 541.2h4v4h-4zM-500.3 554.7h10v12.2h-10zM-499.7 534.1h4.3v4.3h-4.3zM-486.9 553.1h10v14.2h-10zM-486.2 532.8h4.7v4.7h-4.7zM-474.7 550.5h10v16.2h-10zM-474.4 541.2h4v4h-4zM-460.6 551.5h10v15.1h-10zM-458.7 539.1h4.8v4.8h-4.8zM-447.3 555.3h9v11.9h-9zM-444.5 550.4h4.1v4.9h-4.1zM-446 536.4h4.5v4.5h-4.5zM-435.7 549.3h10v18.7h-10zM-432 536.1h4.1v4.1h-4.1zM-402.2 497.3h13v14.9h-13zM-401.7 512.2h9v4.3h-9zM-399.2 526.5h4.3v4.3h-4.3zM-385.6 495.9h10v11.8h-10zM-384.5 507.7h6.1v4.9h-6.1zM-382.9 525.4h5.3v5.3h-5.3zM-373.5 496.8h10v14.9h-10zM-359.8 496h9v16.1h-9zM-358.4 512.1h6.1v3.2h-6.1zM-356.1 521.9h4.9v4.9h-4.9zM-348.5 497.9h10v18.6h-10zM-347.3 520.5h4.8v4.8h-4.8zM-336.4 496.5h9v17.5h-9zM-298.9 498.2h8v18h-8zM-288 496.6h11v11.3h-11zM-273.1 497h8v12.7h-8zM-272.7 509.7h4.4v5.2h-4.4zM-272.3 526h4.6v4.6h-4.6zM-402.2 557h13v11.6h-13zM-386.5 554h10v13.1h-10zM-373.6 555.3h11v13.1h-11zM-358.8 552.1h13v15.9h-13zM-356.4 537.8h3.7v3.7h-3.7zM-316.9 551h13v16.1h-13zM-315.3 546.4h6.1v4.5h-6.1zM-301.9 550.2h8v18h-8zM-300.1 546.2h5.5v4h-5.5zM-291.1 557.2h11v11.8h-11zM-290.8 554h6v3.2h-6zM-277.9 551.2h8v17.6h-8zM-275.9 546.7h5.1v4.4h-5.1zM-236.3 495.6h8v17.1h-8zM-236.1 512.7h3.2v4.4h-3.2zM-224.5 497.7h13v17.6h-13zM-221.7 515.3h8.1v4.7h-8.1zM-224.1 520.5h4v4h-4zM-207.6 497.2h9v13.8h-9zM-207.1 519.7h5.9v5.9h-5.9zM-195 497.5h10v17h-10zM-181.9 495.8h11v15.7h-11zM-178.4 511.5h4.5v3.1h-4.5zM-168.5 497.1h9v17.7h-9zM-166.3 514.8h4.2v5.2h-4.2zM-164.8 524.5h4.2v4.2h-4.2zM-157.4 498h8v12.1h-8zM-154.2 510h3.7v3.7h-3.7zM-146.9 495.9h11v18.4h-11zM-132.1 495.9h13v19h-13zM-127.5 514.9h5.8v5.6h-5.8zM-115.7 496.2h9v13.5h-9zM-111.5 509.7h4.2v5.9h-4.2zM-112.9 519.8h5.8v5.8h-5.8zM-103.7 496.2h9v17.2h-9zM-91.8 495.5h13v12.5h-13zM-90.9 508h5.5v3.9h-5.5zM-76.2 496.3h10v14h-10zM-74.3 510.3h6.6v5.6h-6.6zM-37.1 498h13v12h-13zM-21.9 498.2h9v18.7h-9zM-235.4 555.7h8v12.9h-8zM-234 551.6h4.5v4.1h-4.5zM-225.1 551.3h10v16h-10zM-211.6 550.8h10v18.1h-10zM-210 544.9h4.1v5.8h-4.1zM-197.9 555.2h10v11.7h-10zM-196.7 549.9h5.1v5.3h-5.1zM-183.9 551.9h10v16.9h-10zM-183.2 538.5h5.8v5.8h-5.8zM-170 552.2h8v15.4h-8zM-168 547.6h3.3v4.6h-3.3zM-159.5 549.2h10v18.7h-10zM-157.8 544.1h7v5.1h-7zM-156.4 536.8h5.6v5.6h-5.6zM-146.4 554.2h8v12.6h-8zM-142.9 538.2h4.4v4.4h-4.4zM-136 550.5h11v17.5h-11zM-133.5 535.7h4.5v4.5h-4.5zM-121.8 549.7h8v16.8h-8zM-119 544.8h3.7v4.9h-3.7zM-110.3 551.4h12v17.5h-12zM-108.7 538.7h5.6v5.6h-5.6zM-94.7 549.5h10v17.5h-10zM-91.1 545.7h4.7v3.8h-4.7zM-67 553h10v16.2h-10zM-64.4 548.1h6.1v4.9h-6.1zM-54.7 553h9v16.3h-9zM-51.3 548.1h3.7v4.9h-3.7zM-42.8 554.1h12v13.3h-12zM-41 548.5h5.4v5.6h-5.4zM14.2 497.6h8v15h-8zM24.9 496.9h8v18.5h-8zM36.1 497.5h9v11.1h-9zM37.9 508.6h4.5v5.7h-4.5zM48.7 496.7h11v18.8h-11zM51.1 520.1h5.5v5.5h-5.5zM63.8 497.4h9v12.3h-9zM75.3 497.5h13v16.8h-13zM81.1 514.3h6.6v4.5h-6.6zM77.8 522.3h4.6v4.6h-4.6zM91.3 495.9h10v12.3h-10zM104 496.3h10v12.7h-10zM106.8 509.1h5.1v4.1h-5.1zM116.9 495.8h10v15h-10zM129.4 498.2h9v12.9h-9zM141.1 498.2h10v11.1h-10zM145.1 509.3h5.4v5.3h-5.4zM153.3 498.1h13v12.3h-13zM169 495.9h13v16.1h-13zM171.8 522.1h5.5v5.5h-5.5zM185.8 497.7h9v14.1h-9zM187.8 511.8h4.2v4.3h-4.2zM187.2 522.7h6v6h-6zM197.1 496.6h9v16.3h-9zM197.5 512.9h5.2v4h-5.2zM209.2 498.1h9v12.6h-9zM211.7 520.8h4.1v4.1h-4.1zM15.3 554.7h10v13.3h-10zM18.4 551.1h6.4v3.6h-6.4zM28.1 552.8h12v13.8h-12zM43.1 550.5h10v17.7h-10zM66.7 555.9h8v12.4h-8zM77 556.3h13v12.5h-13zM77.8 540h4.9v4.9h-4.9zM105.2 552.5h8v14.7h-8zM105.3 546.7h3.3v5.8h-3.3zM108.5 535.2h5.5v5.5h-5.5zM115.3 555.7h11v11.1h-11zM119.3 551.1h6.7v4.6h-6.7zM118.7 540h4.2v4.2h-4.2zM130.4 550.5h9v18.7h-9zM142.8 553.8h10v14.6h-10zM148.5 550.7h4.1v3.1h-4.1zM144 533.3h4.4v4.4h-4.4zM155 553.4h11v14.3h-11zM157.4 549.8h5.2v3.6h-5.2zM155.8 536.1h4.5v4.5h-4.5zM169.2 554.3h13v14.5h-13zM185.8 549h8v18.1h-8zM195.9 550.1h10v17.6h-10zM197.3 546.3h6.8v3.8h-6.8zM197.9 535.1h4.9v4.9h-4.9zM208.7 555.5h8v13h-8zM211.4 532.7h5v5h-5zM8 -300h14v22h-14zM26 -302h12v18h-12zM10 -270h26v16h-26zM42 -296h14v30h-14zM12 -246h12v26h-12zM28 -240h10v20h-10zM44 -250h10v16h-10zM66 -298h30v26h-30zM70 -262h12v20h-12zM86 -262h10v16h-10zM100 -266h14v20h-14zM68 -232h22v14h-22zM96 -236h12v10h-12zM124 -300h22v20h-22zM150 -298h12v16h-12zM128 -272h12v22h-12zM144 -268h10v14h-10zM170 -290h18v30h-18zM196 -304h28v22h-28zM200 -274h22v14h-22zM122 -236h14v14h-14zM140 -238h12v20h-12zM160 -246h22v10h-22zM192 -227h37v25h-37zM170 -226h14v22h-14zM8 -212h16v18h-16zM30 -214h12v22h-12zM50 -210h10v16h-10zM70 -212h24v18h-24zM100 -214h18v20h-18zM126 -212h14v18h-14zM146 -210h18v16h-18zM248.5 -487.6h10v21.4h-10zM282.8 -486.6h24v18.9h-24zM283.9 -460.4h5.7v5.7h-5.7zM309.9 -486.8h14v29h-14zM310.6 -462.5h3.9v3.9h-3.9zM326.1 -488h18v22.9h-18zM347 -487.8h14v27.8h-14zM250.8 -444.4h14v21h-14zM256.4 -447.6h7.1v3.1h-7.1zM268 -448.3h24v26.8h-24zM269.2 -457.1h5.3v5.3h-5.3zM295.7 -443.1h18v19.9h-18zM300.3 -446.2h11v3.1h-11zM316.9 -440.4h24v19.3h-24zM343 -452h18v29.1h-18zM347.2 -457.8h12.1v5.9h-12.1zM248.2 -170.5h18v25.9h-18zM253.1 -144.6h9.8v6h-9.8zM269.7 -168.5h24v25.4h-24zM296.2 -169.6h14v25.9h-14zM296.4 -146.1h5.9v5.9h-5.9zM312.3 -171h24v16.3h-24zM314.8 -154.7h16.4v3.6h-16.4zM248.7 -118.6h14v20.9h-14zM251.6 -122h7.2v3.4h-7.2zM264.8 -120.3h18v20.6h-18zM285.9 -125.8h18v27.3h-18zM286.6 -133.3h5.9v5.9h-5.9zM307.8 -119.7h10v20.6h-10zM311.1 -125.2h5.1v5.5h-5.1zM321.9 -121.8h14v23.6h-14zM322.3 -133.5h4.6v4.6h-4.6zM250 -73.6h18v25.4h-18zM250.1 -48.2h7.3v4.3h-7.3zM270.4 -73.7h24v22.5h-24zM272.2 -51.2h10.9v4.6h-10.9zM271.1 -48.9h5.1v5.1h-5.1zM296.4 -74.8h24v27.8h-24zM303.5 -47h16.6v6h-16.6zM251.2 -39.6h14v27.5h-14zM251.2 -45h3.6v3.6h-3.6zM268.5 -35.4h10v23.3h-10zM272.8 -38.6h5.2v3.2h-5.2zM282.4 -38.8h24v25.5h-24zM308.6 -29.5h14v18.8h-14zM250.4 11.7h10v17.5h-10zM255.4 29.2h4.8v5.4h-4.8zM262.5 12.7h24v21.5h-24zM266.3 35.1h4.8v4.8h-4.8zM290.3 13.4h10v18.5h-10zM302.6 13h24v16h-24zM306 29h11.4v4.9h-11.4zM248.5 65.5h10v17.8h-10zM262.4 63.9h10v19.2h-10zM264.3 58.8h5.4v5.2h-5.4zM276.3 57.4h10v26.7h-10zM278.5 50.8h5.8v5.8h-5.8zM288.6 62.1h14v22.2h-14zM292.7 56.7h7.9v5.3h-7.9zM291.2 51.5h5.9v5.9h-5.9zM250.8 107.3h18v23.7h-18zM252.5 132.2h4v4h-4zM272.2 108.2h14v18.1h-14zM288.9 107.8h24v25.3h-24zM296.9 133.1h12.8v4.8h-12.8zM250 149.9h10v28.1h-10zM263.5 158.9h10v20.5h-10zM275.8 149.2h10v29.8h-10zM278.6 144.8h5.1v5.1h-5.1zM288.8 148.5h10v28.4h-10zM248.5 201.6h18v19.2h-18zM251.7 220.8h9.2v4.9h-9.2zM269.3 201.5h24v24h-24zM274.7 225.5h15.3v4.7h-15.3zM250.1 247.5h18v29.8h-18zM256.4 244.1h9.9v3.4h-9.9zM270.3 257.5h24v21.7h-24zM271.2 252.2h10.7v5.2h-10.7zM248.8 303h10v26h-10zM253.4 329h4.8v5.4h-4.8zM262 303.5h24v22.8h-24zM247.8 350.5h18v25.6h-18zM267.8 349.7h10v26h-10zM268.4 340.1h5.6v5.6h-5.6zM249.4 401.3h18v23.5h-18zM248 454.6h10v19.7h-10zM252.3 449.1h5.6v5.4h-5.6zM261.3 450.5h24v23.2h-24zM264.4 445.3h15.8v5.2h-15.8zM251 497.5h14v28.5h-14z"/>
<g fill="#d2d2d1">
<path d="M244 -250 h52 v8 h21 v45 h-73z"/>
<path d="M277 -344 h28 v-8 h22 v26 h-50z"/><rect x="190" y="-362" width="34" height="22"/><rect x="244" y="-400" width="40" height="26"/><rect x="300" y="-396" width="34" height="30"/>
<rect x="246" y="-300" width="14" height="40"/><rect x="262" y="-296" width="10" height="34"/>
<rect x="-470" y="-300" width="40" height="30"/><rect x="-440" y="-262" width="30" height="26"/>
</g>
<g fill="#e8d5f0" stroke="#dcc8e6" stroke-width="0.8" stroke-linejoin="round">
<rect x="4" y="-172" width="46" height="22" rx="4"/>
<path d="M5 -135 h36 v-8 h23 v22 h-19 v13 h-40z"/>
<path d="M66 -172 h66 v9 h40 v17 h-26 v42 h-77 v-10 h32 v-36 h-35z"/>
<rect x="183" y="-172" width="46" height="22"/>
<rect x="161" y="-136" width="39" height="38"/>
<path fill-rule="evenodd" d="M3 -53 l14 -14 h48 l2 16 h25 v28 l-38 5 l-22 -13 l-29 7z M24 -50 l1 6 l22 -1 l-1 -6z M52 -38 l0.500 5 l10 -0.500 l-0.500 -5z"/>
<rect x="47" y="-100" width="10" height="8"/>
</g>
<circle cx="84.500" cy="-75" r="9" fill="#fbfbf8" stroke="#d8d8d6" stroke-width="1"/>
<path d="M14 -98 h60 a4 4 0 0 1 0 8 h-60 M20 -84 h48 a3.500 3.500 0 0 1 0 7 h-48" fill="none" stroke="#d8d8d6" stroke-width="1"/>
<g fill="#f6d3d1" stroke="#eec3c1" stroke-width="0.8">
<path d="M277 -308 h46 v8 h28 v26 h-28 v-14 h-24 v42 h-22z"/><rect x="332" y="-336" width="21" height="11"/>
<path d="M367 -262 h20 v14 h-20z M362 -244 h30 v46 h-30z"/><rect x="364" y="-150" width="30" height="34"/>
<path d="M-388 -268 h10 v-16 h-16 v-6 h22 v28 h-16z"/>
</g>
</g></g>
<g clip-path="url(#cr)"><g transform="matrix(0.8241,0.5664,-0.5664,0.8241,0,-84)">
<g fill="#f8f8f4" stroke="#cececc" stroke-width="1">
<rect x="1299.5" y="-1034.5" width="140" height="81" rx="2.5"/>
<rect x="1450.5" y="-1034.5" width="145" height="81" rx="2.5"/>
<rect x="1606.5" y="-1034.5" width="114" height="81" rx="2.5"/>
<rect x="1731.5" y="-1034.5" width="113" height="81" rx="2.5"/>
<rect x="1855.5" y="-1034.5" width="114" height="81" rx="2.5"/>
<rect x="1980.5" y="-1034.5" width="114" height="81" rx="2.5"/>
<rect x="1299.5" y="-942.5" width="140" height="63" rx="2.5"/>
<rect x="1450.5" y="-942.5" width="145" height="63" rx="2.5"/>
<rect x="1606.5" y="-942.5" width="114" height="63" rx="2.5"/>
<rect x="1731.5" y="-942.5" width="113" height="63" rx="2.5"/>
<rect x="1855.5" y="-942.5" width="114" height="63" rx="2.5"/>
<rect x="1980.5" y="-942.5" width="114" height="63" rx="2.5"/>
<rect x="1299.5" y="-868.5" width="140" height="78" rx="2.5"/>
<rect x="1450.5" y="-868.5" width="145" height="78" rx="2.5"/>
<rect x="1606.5" y="-868.5" width="114" height="78" rx="2.5"/>
<rect x="1731.5" y="-868.5" width="113" height="78" rx="2.5"/>
<rect x="1855.5" y="-868.5" width="114" height="78" rx="2.5"/>
<rect x="1980.5" y="-868.5" width="114" height="78" rx="2.5"/>
<rect x="1299.5" y="-779.5" width="140" height="71" rx="2.5"/>
<rect x="1450.5" y="-779.5" width="145" height="71" rx="2.5"/>
<rect x="1606.5" y="-779.5" width="114" height="71" rx="2.5"/>
<rect x="1731.5" y="-779.5" width="113" height="71" rx="2.5"/>
<rect x="1855.5" y="-779.5" width="114" height="71" rx="2.5"/>
<rect x="1980.5" y="-779.5" width="114" height="71" rx="2.5"/>
<rect x="1299.5" y="-697.5" width="140" height="72" rx="2.5"/>
<rect x="1450.5" y="-697.5" width="145" height="72" rx="2.5"/>
<rect x="1606.5" y="-697.5" width="114" height="72" rx="2.5"/>
<rect x="1731.5" y="-697.5" width="113" height="72" rx="2.5"/>
<rect x="1855.5" y="-697.5" width="114" height="72" rx="2.5"/>
<rect x="1980.5" y="-697.5" width="114" height="72" rx="2.5"/>
<rect x="1299.5" y="-614.5" width="140" height="74" rx="2.5"/>
<rect x="1450.5" y="-614.5" width="145" height="74" rx="2.5"/>
<rect x="1606.5" y="-614.5" width="114" height="74" rx="2.5"/>
<rect x="1731.5" y="-614.5" width="113" height="74" rx="2.5"/>
<rect x="1855.5" y="-614.5" width="114" height="74" rx="2.5"/>
<rect x="1980.5" y="-614.5" width="114" height="74" rx="2.5"/>
<rect x="1299.5" y="-529.5" width="140" height="74" rx="2.5"/>
<rect x="1450.5" y="-529.5" width="145" height="74" rx="2.5"/>
<rect x="1606.5" y="-529.5" width="114" height="74" rx="2.5"/>
<rect x="1731.5" y="-529.5" width="113" height="74" rx="2.5"/>
<rect x="1855.5" y="-529.5" width="114" height="74" rx="2.5"/>
<rect x="1980.5" y="-529.5" width="114" height="74" rx="2.5"/>
<rect x="1299.5" y="-444.5" width="140" height="74" rx="2.5"/>
<rect x="1450.5" y="-444.5" width="145" height="74" rx="2.5"/>
<rect x="1606.5" y="-444.5" width="114" height="74" rx="2.5"/>
<rect x="1731.5" y="-444.5" width="113" height="74" rx="2.5"/>
<rect x="1855.5" y="-444.5" width="114" height="74" rx="2.5"/>
<rect x="1980.5" y="-444.5" width="114" height="74" rx="2.5"/>
</g>
<path fill="#d7d7d6" d="M1307.3 -1028.5h8v17.2h-8zM1310 -1011.3h4.9v3.2h-4.9zM1307.7 -1008.8h6.7v10.1h-6.7zM1317.8 -1028.1h9v14.1h-9zM1319.7 -1014h5.1v3.5h-5.1zM1319.2 -999.5h5.8v5.8h-5.8zM1328.4 -1027.1h11v17.1h-11zM1330.5 -1007.5h8.8v6.3h-8.8zM1341.4 -1029.3h13v18.4h-13zM1344.2 -1008.4h8.4v10.9h-8.4zM1356.4 -1029.4h11v17.6h-11zM1359.5 -1011.8h5.6v4.7h-5.6zM1368.9 -1027.7h9v19.9h-9zM1369.4 -1007.8h6.2v5.5h-6.2zM1371.4 -1005.3h5.8v10.4h-5.8zM1379.5 -1028.4h13v20.2h-13zM1380.9 -1005.8h10.6v9.2h-10.6zM1381.6 -1003.2h4.1v4.1h-4.1zM1394.5 -1027h11v20.4h-11zM1394.9 -1006.6h5.9v5.6h-5.9zM1394.9 -1004.1h7v9.5h-7zM1398.5 -998.4h5.3v5.3h-5.3zM1420.9 -1028.1h9v21h-9zM1421.2 -1004.6h8.3v10.9h-8.3zM1309 -980.2h12v20.3h-12zM1313.8 -984.6h6.2v4.4h-6.2zM1309.2 -990.2h10.6v7.5h-10.6zM1323.1 -976h13v14.9h-13zM1328.4 -981.3h7.4v5.3h-7.4zM1339.1 -975h12v14.6h-12zM1339.3 -986.4h11.6v8.9h-11.6zM1340.8 -994h4.3v4.3h-4.3zM1352.8 -977h10v17.1h-10zM1355.8 -982.7h5.9v5.7h-5.9zM1353 -986.3h9.5v6.8h-9.5zM1364.6 -977.3h13v16h-13zM1364.7 -989.6h12.8v9.8h-12.8zM1380.4 -976h12v15.1h-12zM1385.1 -979.9h7.1v3.9h-7.1zM1380.9 -986.9h7.8v8.5h-7.8zM1395.2 -980.1h9v20.4h-9zM1398.3 -985.5h5.3v5.4h-5.3zM1395.2 -992.3h8.8v9.7h-8.8zM1406.9 -981.8h9v20.5h-9zM1407.8 -992.3h6.9v8h-6.9zM1419.1 -974h13v13.1h-13zM1422.4 -978.2h7v4.1h-7zM1419.9 -984.9h11.3v8.4h-11.3zM1422.2 -993.2h3.8v3.8h-3.8zM1458.2 -1028.7h11v14.4h-11zM1460 -1014.2h4.9v5.7h-4.9zM1459.7 -1011.7h8.4v10.2h-8.4zM1472.1 -1026.7h12v17.1h-12zM1473.7 -1007.1h7.5v7.1h-7.5zM1475 -1001.9h4.2v4.2h-4.2zM1487.2 -1027.7h10v14.7h-10zM1488 -1013h5.6v4.8h-5.6zM1499.6 -1028.1h10v15h-10zM1502.1 -1013h4.4v4.2h-4.4zM1499.7 -1010.5h10v9.4h-10zM1511.6 -1027.2h9v15.2h-9zM1511.7 -1009.5h8.8v9.6h-8.8zM1515.2 -1005h5.1v5.1h-5.1zM1523.6 -1029.3h10v14.1h-10zM1524.1 -1012.8h6.8v6.6h-6.8zM1536.7 -1028.9h8v18.6h-8zM1538 -1010.3h3.4v3.3h-3.4zM1537.9 -1001.5h4.9v4.9h-4.9zM1546.3 -1028.9h11v14.3h-11zM1546.3 -1012.1h10.7v9.8h-10.7zM1559.5 -1027.8h8v13.4h-8zM1570.7 -1028.7h9v19.2h-9zM1573.8 -1009.5h5.2v4.7h-5.2zM1582.6 -1027.7h12v17.4h-12zM1584.4 -1007.9h9.6v10.3h-9.6zM1458.9 -974.9h12v14.1h-12zM1459 -987.2h10.3v9.9h-10.3zM1460.3 -992.4h5.4v5.4h-5.4zM1484.7 -975.7h8v16.2h-8zM1487.9 -980.8h3.7v5.1h-3.7zM1494.6 -973.7h8v13.6h-8zM1497.3 -978.8h4v5.1h-4zM1504.7 -975.5h9v16.8h-9zM1504.7 -988.2h8.7v10.2h-8.7zM1507.5 -993h4.5v4.5h-4.5zM1516 -981.2h8v19.9h-8zM1517.7 -986.1h5v4.9h-5zM1516.3 -992.2h7.7v8.5h-7.7zM1526.9 -980h8v20h-8zM1530.5 -987.1h4.2v4.2h-4.2zM1537.1 -977.8h9v16.6h-9zM1539.2 -983.1h5.5v5.3h-5.5zM1538.6 -987.7h7.1v7.4h-7.1zM1539.8 -995.9h5.5v5.5h-5.5zM1548.1 -978.6h10v19.2h-10zM1552.4 -984.4h5.4v5.7h-5.4zM1560.5 -977.1h9v15.7h-9zM1561.3 -982.1h5.3v5h-5.3zM1561.4 -986.4h7.7v6.8h-7.7zM1571.2 -979.5h11v20.6h-11zM1574.8 -982.9h7.3v3.4h-7.3zM1571.9 -989.1h9.5v7.2h-9.5zM1614.1 -1028.2h9v17.7h-9zM1614.6 -1008h8.1v8.4h-8.1zM1617 -998.1h5.5v5.5h-5.5zM1624.8 -1027.4h8v14.2h-8zM1634.5 -1027.8h8v20.3h-8zM1637.7 -1007.6h3.2v5.1h-3.2zM1645.2 -1027.6h8v19.2h-8zM1645.2 -1005.9h7.9v11h-7.9zM1656 -1026.6h12v18.1h-12zM1670.4 -1027.9h13v20.9h-13zM1671.3 -1007h5.5v4.5h-5.5zM1670.6 -1000.3h5.8v5.8h-5.8zM1686.3 -1027.5h9v14.7h-9zM1686.6 -1010.2h8.8v10h-8.8zM1698.2 -1027.2h8v18.7h-8zM1701.9 -1008.5h4.2v5.7h-4.2zM1615.8 -974.7h10v14.6h-10zM1618 -987.2h7.1v10h-7.1zM1618.4 -994.7h4.9v4.9h-4.9zM1628.2 -977.3h8v16.4h-8zM1632.1 -981.7h4v4.4h-4zM1628.2 -990.3h7.9v10.4h-7.9zM1631.2 -988.8h5.4v5.4h-5.4zM1638.5 -977.6h11v19h-11zM1651.9 -980.8h8v20.3h-8zM1652.2 -990.9h7.7v7.7h-7.7zM1662 -977.3h9v16h-9zM1665.6 -982.8h4.3v5.5h-4.3zM1662 -990.7h8.9v11h-8.9zM1672.6 -976.5h8v15.7h-8zM1675.2 -993.5h5.1v5.1h-5.1zM1682.9 -979.7h8v19.1h-8zM1684.1 -982.7h4.5v3h-4.5zM1683.3 -988.7h7.1v6.6h-7.1zM1693.8 -977.5h8v18.4h-8zM1697.2 -982.7h3.4v5.2h-3.4zM1696.2 -987.7h5v7.7h-5zM1703.7 -978.6h9v20h-9zM1705.2 -983.7h4.3v5.1h-4.3zM1705.9 -995.7h5.7v5.7h-5.7zM1740.7 -1029.2h9v14.1h-9zM1743.6 -1015.1h4.4v3.5h-4.4zM1752.8 -1027.5h10v14.7h-10zM1755.2 -1012.8h6.9v4.1h-6.9zM1754.5 -1010.3h6.1v8.5h-6.1zM1765 -1028.8h10v14.4h-10zM1767.6 -1014.4h4.9v4.2h-4.9zM1767.5 -1011.9h7.5v9.2h-7.5zM1777.9 -1029.2h8v17.8h-8zM1787.6 -1026.8h9v20.6h-9zM1788 -1003.8h6.9v10.6h-6.9zM1799.8 -1027.6h13v15h-13zM1801.8 -1012.5h9v3.8h-9zM1814.5 -1028.5h8v20h-8zM1817.5 -1008.6h4v5.9h-4zM1815.9 -1006.1h5.1v9.2h-5.1zM1824 -1027.8h13v15.5h-13zM1829.7 -1012.3h6.3v3.7h-6.3zM1826.6 -1009.8h7.9v6.2h-7.9zM1825.3 -1001.3h4.5v4.5h-4.5zM1737.9 -974h9v13.6h-9zM1738.9 -979.6h6v5.6h-6zM1739.1 -992.8h5.6v5.6h-5.6zM1760.7 -979.9h10v19.9h-10zM1763.4 -983.7h5.1v3.9h-5.1zM1772.7 -978.6h8v17.4h-8zM1773.5 -988.6h5.8v7.6h-5.8zM1783.2 -979.3h9v19h-9zM1783.3 -992.4h7.2v10.7h-7.2zM1794.4 -980.2h9v20.8h-9zM1796.1 -985.3h4.4v5.1h-4.4zM1794.9 -990.7h8.2v8.1h-8.2zM1821 -979.6h8v20.1h-8zM1831.6 -976.8h10v17.6h-10zM1832.9 -982.3h6.5v5.6h-6.5zM1833.1 -990.1h6.2v10.9h-6.2zM1872.5 -1029.1h9v18.8h-9zM1872.8 -1007.8h8.5v9.5h-8.5zM1872.8 -999.7h5v5h-5zM1884.5 -1028.3h10v18.1h-10zM1887.9 -1010.1h6.3v5.4h-6.3zM1885.7 -1007.6h8v7.7h-8zM1897.4 -1028.1h10v19.7h-10zM1898.1 -1005.3h3.8v3.8h-3.8zM1910.4 -1027.1h8v15.2h-8zM1912 -1011.9h5v5.6h-5zM1912.8 -1004h4.4v4.4h-4.4zM1921.3 -1028.1h12v16.9h-12zM1924.7 -1011.2h6.9v5.8h-6.9zM1921.5 -1008.7h8.1v10.2h-8.1zM1925.3 -1005.5h4.8v4.8h-4.8zM1935.5 -1027.6h8v18.4h-8zM1937.2 -1009.2h5.5v6h-5.5zM1935.6 -1006.7h7.1v9.4h-7.1zM1864 -979.4h8v18.2h-8zM1867.1 -983.5h3.7v4.1h-3.7zM1864.3 -994.9h4.5v4.5h-4.5zM1874.2 -978.6h12v18.8h-12zM1874.5 -982.6h7.5v4h-7.5zM1876.3 -992.7h4.7v4.7h-4.7zM1888.3 -975.4h9v15h-9zM1899.7 -974.8h9v15.7h-9zM1903 -978.9h4.2v4.2h-4.2zM1911.9 -978.6h10v19.9h-10zM1915.6 -992h6.1v10.9h-6.1zM1913.8 -993.5h5.2v5.2h-5.2zM1924.7 -977.1h8v18.5h-8zM1934.6 -980.9h10v19.8h-10zM1947.6 -974.1h10v14.4h-10zM1986.9 -1027.7h13v18.3h-13zM1990.2 -1009.4h7v5.3h-7zM1991.7 -1006.9h8.1v9.9h-8.1zM1989.8 -1000.2h5.5v5.5h-5.5zM2003 -1027.6h12v16.7h-12zM2008.6 -1011h5.9v4h-5.9zM2017.2 -1027.5h12v18.5h-12zM2021.3 -1009h5.2v5.3h-5.2zM2019.3 -1006.5h9.9v10.7h-9.9zM2017.9 -997.6h5.6v5.6h-5.6zM2031 -1029h12v14.1h-12zM2031.1 -1012.3h11.7v7.8h-11.7zM2034.4 -1002.8h4.5v4.5h-4.5zM2045.5 -1029h9v14.1h-9zM2049.7 -1014.9h4.2v3.9h-4.2zM2056.7 -1029.2h8v18.4h-8zM2057.2 -1010.9h3.9v3.5h-3.9zM2057 -1008.4h7.6v10.3h-7.6zM2066.8 -1027.1h9v14.5h-9zM2067.1 -1012.6h5.5v4.1h-5.5zM2078.6 -1028.5h9v17.2h-9zM2079.1 -1008.7h7.5v6.5h-7.5zM1989.2 -973.5h12v13.3h-12zM2003.3 -977.4h8v17.4h-8zM2004.5 -982.2h3.5v4.8h-3.5zM2003.7 -986.6h6.7v6.7h-6.7zM2006.7 -993.3h5.4v5.4h-5.4zM2013.4 -975.1h12v14.9h-12zM2014.7 -979.6h5.2v4.5h-5.2zM2027.3 -978.2h10v17.4h-10zM2030 -982.1h4.7v3.9h-4.7zM2030.5 -986.8h4.2v4.2h-4.2zM2040.4 -977.2h9v17.7h-9zM2043 -980.9h3.6v3.7h-3.6zM2041.6 -988.8h5.9v9.1h-5.9zM2073.8 -973.5h13v14.4h-13zM1306.8 -934.7h9v17.2h-9zM1307.8 -914.9h7.2v6.5h-7.2zM1317.3 -936.3h10v15.3h-10zM1317.4 -921.1h6.1v3.7h-6.1zM1317.4 -918.6h9.9v6.7h-9.9zM1329.2 -937.2h10v19.3h-10zM1330.6 -917.8h5.9v3.6h-5.9zM1330.5 -915.3h8.6v7.7h-8.6zM1353.3 -936.8h11v13.1h-11zM1356.2 -923.6h4.9v5.5h-4.9zM1366 -934.6h10v20.5h-10zM1366 -911.6h10v6.6h-10zM1378 -935.8h11v13.1h-11zM1379.4 -922.7h4.9v3.8h-4.9zM1390.9 -936.4h8v18.5h-8zM1391.7 -917.9h3.9v4.3h-3.9zM1392.7 -915.4h5.6v10.3h-5.6zM1402 -937.2h9v20.6h-9zM1414.1 -936.6h8v15.8h-8zM1424.2 -937h13v20.4h-13zM1424.3 -914.1h12.2v10.6h-12.2zM1424.7 -911.5h5.1v5.1h-5.1zM1305.7 -904.5h9v19.1h-9zM1309.6 -908.1h4.9v3.6h-4.9zM1306.9 -920.6h4.3v4.3h-4.3zM1316.6 -900.9h10v14h-10zM1316.8 -911.2h9.5v7.9h-9.5zM1329.3 -905.8h9v18.6h-9zM1341.3 -900.7h8v16h-8zM1343.7 -904.9h3.2v4.1h-3.2zM1351.9 -903.6h10v17h-10zM1352.4 -908.6h4.4v5h-4.4zM1353.5 -919.3h3.8v3.8h-3.8zM1363.9 -904.5h8v18.4h-8zM1364.4 -916.4h7.3v9.4h-7.3zM1374.9 -904.7h8v18.8h-8zM1376.5 -908.4h4.2v3.7h-4.2zM1384.7 -901.2h8v14.1h-8zM1384.9 -905.9h3.6v4.7h-3.6zM1384.9 -912.2h7.3v8.5h-7.3zM1410.4 -902.2h10v15.7h-10zM1413.5 -906.1h5.3v3.9h-5.3zM1458.4 -934.8h11v19.7h-11zM1462.4 -915h6.8v3.7h-6.8zM1461.4 -908.8h4.6v4.6h-4.6zM1472.1 -935.1h12v15.4h-12zM1475.5 -919.7h6.3v5.6h-6.3zM1474.2 -917.2h7.7v9.1h-7.7zM1473.9 -909h5.4v5.4h-5.4zM1486.9 -934.6h11v17.3h-11zM1487.1 -917.3h6.2v4.3h-6.2zM1499.5 -936.3h13v16.1h-13zM1514.1 -936.3h11v17.6h-11zM1514.8 -918.7h7.2v3.3h-7.2zM1516.9 -912.9h4.7v4.7h-4.7zM1527 -934.6h10v13.7h-10zM1527.3 -920.9h4.4v4.6h-4.4zM1539.3 -936.1h8v20h-8zM1540.6 -916.1h3.9v5.8h-3.9zM1539.6 -913.6h5.2v9.4h-5.2zM1541.1 -912h4.3v4.3h-4.3zM1549.4 -936.6h12v19h-12zM1564.3 -936.1h10v20.3h-10zM1564.5 -913.3h9.1v10h-9.1zM1575.8 -937.4h10v13.1h-10zM1578.3 -924.3h5.7v4.2h-5.7zM1460.1 -906.9h9v20.7h-9zM1461.1 -912.7h6.1v5.9h-6.1zM1460.6 -915.6h6.9v6.3h-6.9zM1471.2 -902.6h12v16.3h-12zM1473.2 -907h5.1v4.4h-5.1zM1471.2 -915.6h12v10.5h-12zM1485.4 -899.6h13v13.8h-13zM1489.9 -904.2h8v4.6h-8zM1487.2 -911.2h10.2v9.1h-10.2zM1500.9 -900.6h9v15.4h-9zM1511.7 -901h9v13.6h-9zM1523.3 -902.6h11v15.4h-11zM1527.8 -906.2h6.4v3.6h-6.4zM1523.5 -914.7h4.6v4.6h-4.6zM1536.5 -901h9v14.2h-9zM1539.2 -906.3h4.2v5.4h-4.2zM1547.8 -900.6h11v14h-11zM1553.1 -906.6h4.7v6h-4.7zM1560.8 -904h8v17.5h-8zM1562.2 -914.1h5.7v7.6h-5.7zM1570.9 -899.2h9v13.1h-9zM1583 -904.3h10v19.2h-10zM1583.6 -916.5h8.3v9.8h-8.3zM1584.6 -917h4v4h-4zM1613.5 -935h12v13.9h-12zM1614 -918.6h10.5v10h-10.5zM1628.3 -937.4h13v13.9h-13zM1631.7 -923.5h7v5.7h-7zM1644.1 -935.7h10v20.3h-10zM1645.2 -912.9h8.3v10.7h-8.3zM1656.6 -935.4h12v14.3h-12zM1657 -918.6h9.7v9.8h-9.7zM1670.6 -936.2h10v20.5h-10zM1670.9 -913.2h7v6.1h-7zM1683.2 -934.6h10v14h-10zM1686.6 -920.6h5.5v5.5h-5.5zM1684.4 -918.1h8.3v7.5h-8.3zM1695.6 -936.6h9v16h-9zM1697.3 -913h5.4v5.4h-5.4zM1706.3 -937.1h13v13.8h-13zM1708.2 -912.7h4.1v4.1h-4.1zM1615.5 -902.4h10v17.4h-10zM1615.6 -912.1h10v7.3h-10zM1627.8 -905.2h13v20.4h-13zM1628.6 -915.9h11.6v8.2h-11.6zM1665.2 -900h9v13.7h-9zM1668.1 -905.9h4.5v5.8h-4.5zM1665.3 -911.6h6.4v9.1h-6.4zM1666.2 -921.7h5.5v5.5h-5.5zM1677 -902.7h9v17.9h-9zM1688.8 -900.6h8v13.2h-8zM1691.8 -905.6h5v5h-5zM1690 -911.5h6.7v8.4h-6.7zM1699.6 -902.2h13v15.9h-13zM1701.9 -905.8h6.4v3.6h-6.4zM1699.7 -914.7h12.7v10h-12.7zM1739.1 -937.1h10v14.5h-10zM1740.2 -920.1h8.3v8.3h-8.3zM1751.1 -936.5h11v19.1h-11zM1755.8 -917.4h5.1v5.9h-5.1zM1752.8 -914.9h8.4v8.7h-8.4zM1753 -913.5h3.6v3.6h-3.6zM1764.7 -935h8v13.1h-8zM1767.1 -921.9h5.2v4.8h-5.2zM1765 -919.4h7v6.2h-7zM1791 -935.9h12v13.1h-12zM1795.4 -922.8h6.3v5.4h-6.3zM1792.2 -920.3h10.5v7.5h-10.5zM1805.1 -935.1h8v15.8h-8zM1806.6 -916.8h5.1v7.5h-5.1zM1809 -908.2h4.2v4.2h-4.2zM1815 -936.3h13v13.9h-13zM1815.1 -919.9h8.8v7.2h-8.8zM1830.1 -937.1h8v16.1h-8zM1832.2 -920.9h4.9v3.9h-4.9zM1740.4 -900.2h10v15.6h-10zM1743.3 -904.3h6.5v4.1h-6.5zM1752.4 -901.3h11v16h-11zM1754.8 -906.8h6.5v5.5h-6.5zM1753.2 -910.4h7.3v6.6h-7.3zM1765.4 -906.3h10v19.2h-10zM1778.4 -904.3h8v19.8h-8zM1780.4 -915.9h5v9h-5zM1788.5 -900.2h10v15.5h-10zM1801.4 -904.4h10v17.5h-10zM1801.9 -910.4h6.6v5.9h-6.6zM1802.4 -917.8h6.4v10.9h-6.4zM1814.3 -900h9v14.6h-9zM1817 -904.4h5.8v4.4h-5.8zM1815 -912.1h8v9.6h-8zM1825.1 -901.2h8v14.4h-8zM1825.5 -905.5h4.4v4.4h-4.4zM1863.6 -937.1h12v13.8h-12zM1864.2 -923.3h7.6v4.9h-7.6zM1878.1 -937.5h10v15.8h-10zM1878.2 -921.7h6.5v5h-6.5zM1879.5 -919.2h6.9v8.2h-6.9zM1890.6 -936.9h11v15.5h-11zM1892 -921.3h4.6v5.4h-4.6zM1904.5 -935.1h11v14.5h-11zM1904.9 -920.6h7v4h-7zM1907.1 -918.1h8.2v6.4h-8.2zM1918.3 -935.3h11v20.6h-11zM1918.4 -912.2h8.5v7.9h-8.5zM1919.3 -908.9h4.2v4.2h-4.2zM1932 -937.1h9v20.9h-9zM1932.8 -913.6h5.9v6.6h-5.9zM1943.6 -936.6h10v17.8h-10zM1944.4 -918.9h5.3v4.8h-5.3zM1956.5 -934.8h12v17.7h-12zM1861.9 -905.5h12v18.8h-12zM1863.9 -915.5h8.8v7.5h-8.8zM1877 -904.2h10v18.7h-10zM1879.6 -908.1h6.9v3.9h-6.9zM1889 -901.4h13v15.1h-13zM1892.6 -906.9h8.1v5.5h-8.1zM1890.9 -914.8h10.4v10.9h-10.4zM1892.2 -918.9h3.7v3.7h-3.7zM1905 -898.3h11v13.4h-11zM1917.6 -904h12v17.9h-12zM1921.4 -916.2h5v5h-5zM1931.1 -899.2h8v13.3h-8zM1932 -912.2h6.6v10.4h-6.6zM1941.3 -900.1h11v15.5h-11zM1954.2 -902.3h11v16.5h-11zM1955.7 -906.5h5.1v4.2h-5.1zM1955.1 -919.8h5.9v5.9h-5.9zM1988.8 -934.5h9v17.3h-9zM1992.5 -913.2h4v4h-4zM2000.7 -935.8h10v18.4h-10zM2002.2 -910.2h4.8v4.8h-4.8zM2012.3 -937.2h10v14.2h-10zM2024.9 -935.3h10v14.3h-10zM2025.8 -920.9h4.9v5.4h-4.9zM2038.1 -936.9h8v16.9h-8zM2040 -920h4.9v3.3h-4.9zM2039.2 -917.5h5.5v9.9h-5.5zM2048.9 -934.9h8v16.9h-8zM2050.2 -915.5h5.1v8.4h-5.1zM2048.9 -906.7h5.4v5.4h-5.4zM2059.2 -936.2h12v17.4h-12zM2059.3 -916.3h10.2v7.5h-10.2zM2074.2 -935.6h8v20.5h-8zM2074.3 -915.1h3.5v4.6h-3.5zM1989.1 -906.6h8v21h-8zM1990.7 -911.9h4.1v5.3h-4.1zM1999.3 -907.7h9v20.6h-9zM2001.5 -913.5h3.7v5.8h-3.7zM2000.8 -917.9h5.5v5.5h-5.5zM2010.3 -905.7h12v20.4h-12zM2013.4 -917.3h7.5v9.1h-7.5zM2025.1 -903.7h13v16.4h-13zM2025.5 -912.5h10.8v6.3h-10.8zM2026.3 -914h4v4h-4zM2040.3 -904.5h13v17.5h-13zM2040.5 -916.8h12.1v9.7h-12.1zM2069.6 -902.8h8v15.7h-8zM2080.3 -902.2h9v14.9h-9zM2082.7 -905.8h4.1v3.6h-4.1zM1307.4 -861.3h8v20.2h-8zM1310.7 -841.1h4.1v5.9h-4.1zM1317.4 -861.1h11v16.7h-11zM1321.4 -844.3h6v4.2h-6zM1319.2 -841.8h6.7v6.6h-6.7zM1342.3 -861.4h11v19.6h-11zM1342.4 -839.4h10.3v6.4h-10.3zM1343.7 -836h5v5h-5zM1355.9 -863.2h12v14.7h-12zM1356.7 -839.4h3.6v3.6h-3.6zM1369.9 -862.7h13v16.9h-13zM1372 -845.7h5.8v4.8h-5.8zM1370 -843.2h12.5v9.6h-12.5zM1385 -862.2h11v17.5h-11zM1389 -844.7h6.1v5.2h-6.1zM1398.8 -861.9h10v15.6h-10zM1400.8 -846.4h5.4v3.6h-5.4zM1400.3 -843.9h6.5v9.6h-6.5zM1411.1 -861.5h10v20.7h-10zM1411.7 -838.4h9.2v9.9h-9.2zM1415 -834.3h3.7v3.7h-3.7zM1423.8 -860.6h8v19.9h-8zM1426.5 -840.8h3.5v4.8h-3.5zM1424.2 -832.3h4.7v4.7h-4.7zM1306.2 -814.6h8v17.2h-8zM1309.6 -819.6h4.3v5h-4.3zM1306.3 -825.6h6.8v8.5h-6.8zM1306.3 -826.8h4v4h-4zM1316.1 -818h12v20.6h-12zM1319.1 -821.3h7.2v3.2h-7.2zM1330.6 -813.3h8v16.8h-8zM1340.7 -815.5h13v17.5h-13zM1341.3 -820.8h5.8v5.3h-5.8zM1341.7 -825.2h11.8v7.2h-11.8zM1342 -829.8h5.5v5.5h-5.5zM1355.4 -811.9h12v15.4h-12zM1369.7 -811.3h11v14.3h-11zM1372.6 -815.3h5.8v4h-5.8zM1370.5 -820.5h7v6.7h-7zM1383.3 -814.8h8v18.7h-8zM1384.2 -819h3.2v4.2h-3.2zM1385 -826.4h6.3v9.1h-6.3zM1386 -830.5h4.1v4.1h-4.1zM1394.1 -811.6h8v15h-8zM1396 -816.4h4.5v4.8h-4.5zM1395.7 -824.4h4v4h-4zM1403.8 -813.2h11v15.1h-11zM1404.3 -825.7h10.2v10h-10.2zM1417.7 -812.6h9v16.7h-9zM1419.1 -824.4h5.9v9.3h-5.9zM1457.7 -862.1h8v20.2h-8zM1457.9 -842h3.4v3.6h-3.4zM1467.3 -862.9h9v16.7h-9zM1478.3 -861h10v18.8h-10zM1478.8 -839.7h8.9v9.4h-8.9zM1490.5 -861.9h8v19.9h-8zM1501.2 -862.7h9v20.6h-9zM1502.7 -842.1h5.1v4.1h-5.1zM1503.3 -839.6h6.6v8.2h-6.6zM1512.2 -862.2h8v15.4h-8zM1512.7 -844.3h6.6v10.4h-6.6zM1512.3 -834.2h4.8v4.8h-4.8zM1534.7 -862.4h9v20.6h-9zM1539.1 -841.8h3.6v4.3h-3.6zM1536.2 -833.7h3.9v3.9h-3.9zM1546.8 -863.2h8v15.1h-8zM1549.3 -845.6h5v10.6h-5zM1571.4 -862.6h8v17.4h-8zM1572.2 -845.2h3.4v3.1h-3.4zM1572.6 -842.7h5.8v6.1h-5.8zM1581.2 -863.2h13v19.8h-13zM1581.9 -840.9h11v6.6h-11zM1459.2 -814.4h10v17h-10zM1463.5 -817.7h4.5v3.3h-4.5zM1460.1 -826.4h5.7v5.7h-5.7zM1496.8 -815.4h13v17.4h-13zM1511.7 -814.6h12v16.1h-12zM1511.9 -817.8h5.8v3.2h-5.8zM1511.8 -825.2h9.9v8.1h-9.9zM1526.6 -813.2h9v15.7h-9zM1529.3 -816.8h4.8v3.6h-4.8zM1526.7 -825.8h7.4v10.1h-7.4zM1538.7 -812.3h9v15.3h-9zM1543 -817.8h4.7v5.5h-4.7zM1540.5 -832.1h5.5v5.5h-5.5zM1549.5 -815.6h9v19.6h-9zM1560.1 -817.9h8v20.8h-8zM1564.3 -823.4h3.5v5.4h-3.5zM1569.9 -816.2h12v20.2h-12zM1573.7 -820.9h7.6v4.6h-7.6zM1615.8 -860.7h10v20.7h-10zM1619.6 -837.4h6.1v7.4h-6.1zM1628.1 -862.3h8v15.3h-8zM1630.2 -847h3.9v5.4h-3.9zM1628.2 -844.5h5.3v10.3h-5.3zM1638.9 -862.9h13v17.2h-13zM1641.8 -843.2h9.9v9h-9.9zM1654.1 -861.1h8v13.1h-8zM1655.7 -845.5h5.6v9.7h-5.6zM1664.3 -861.9h13v14.6h-13zM1668.2 -847.3h5.9v5.5h-5.9zM1664.4 -844.8h12.8v8.8h-12.8zM1679.9 -863h10v18.1h-10zM1680.3 -837.1h4.2v4.2h-4.2zM1692.5 -862.5h8v14.5h-8zM1695.1 -848h3.9v5.4h-3.9zM1693.7 -845.5h6.7v7.5h-6.7zM1703.2 -863.5h10v14.8h-10zM1616.3 -813.3h10v16.5h-10zM1619 -816.9h6.1v3.6h-6.1zM1617.9 -823.9h8.3v8.1h-8.3zM1628.1 -815.2h10v18.2h-10zM1629.5 -829.6h5.2v5.2h-5.2zM1639.9 -813.5h9v16.2h-9zM1651.4 -814h10v17.6h-10zM1651.4 -817.8h5.4v3.8h-5.4zM1652.4 -829.4h5.9v5.9h-5.9zM1663.6 -810.8h8v13.3h-8zM1663.8 -819.3h7.8v6.1h-7.8zM1674.1 -811.5h11v14h-11zM1677.3 -815.6h7.2v4.2h-7.2zM1675.2 -823.3h9.2v9.3h-9.2zM1687.1 -809.8h10v13.2h-10zM1688.1 -819.2h8v6.9h-8zM1687.4 -824.9h4.9v4.9h-4.9zM1699.1 -813.2h8v17.1h-8zM1737.5 -862.2h13v15.5h-13zM1739.8 -846.7h8.8v5.1h-8.8zM1741.1 -831.8h4.8v4.8h-4.8zM1752.2 -861.5h12v18.6h-12zM1754.9 -840.4h7.5v10.2h-7.5zM1766.6 -860.5h10v15.5h-10zM1767.7 -835.8h3.9v3.9h-3.9zM1779.1 -863h9v19.2h-9zM1790.9 -863.3h12v20.9h-12zM1792.5 -842.4h7.1v4h-7.1zM1793.6 -831.7h4.5v4.5h-4.5zM1805.4 -862.9h9v13.9h-9zM1806.9 -846.4h6.5v6.5h-6.5zM1816.4 -860.5h9v15.7h-9zM1739.9 -817.2h9v18.7h-9zM1751.3 -813.2h11v17.1h-11zM1754.3 -817.1h5.7v4h-5.7zM1764.6 -812.1h10v14.6h-10zM1776.3 -814.6h10v17.1h-10zM1777.3 -818.6h6.3v4h-6.3zM1776.4 -823.9h9.1v6.8h-9.1zM1788.2 -814.6h13v18.2h-13zM1803.5 -814.7h11v18.4h-11zM1817.4 -816.1h8v19.6h-8zM1819.8 -821.5h3.3v5.4h-3.3zM1818.2 -830.8h4.6v4.6h-4.6zM1827.8 -816.1h8v19.2h-8zM1831.2 -819.3h4.2v3.2h-4.2zM1861.8 -861.8h10v13.5h-10zM1861.9 -845.8h7v10.2h-7zM1873.6 -862.5h9v13.4h-9zM1885.1 -863.5h11v17.3h-11zM1885.5 -843.7h9.5v8.1h-9.5zM1887.8 -833.7h5.8v5.8h-5.8zM1897.8 -862.4h12v16.7h-12zM1899 -832.1h4.6v4.6h-4.6zM1922.4 -861.6h13v20.6h-13zM1926.1 -841h6.6v3.8h-6.6zM1925 -835.9h3.9v3.9h-3.9zM1937.4 -861.4h10v17.3h-10zM1941.4 -844.1h6v3.5h-6zM1949.1 -861h13v15.1h-13zM1949.1 -843.4h11v9.5h-11zM1864 -812.2h10v15.4h-10zM1866.1 -817h6v4.8h-6zM1875.8 -813.7h12v17.3h-12zM1876.7 -826.8h10.9v10.6h-10.9zM1904.5 -815.6h11v18.5h-11zM1917.3 -811.9h8v14.2h-8zM1919.8 -815.6h4.9v3.7h-4.9zM1919 -824.8h6.1v10.4h-6.1zM1927.1 -810.2h8v14.6h-8zM1929.6 -816h4.1v5.8h-4.1zM1929 -826.8h5.2v5.2h-5.2zM1938.2 -809.9h11v13.8h-11zM1940.6 -813.3h6.4v3.3h-6.4zM1952.2 -812.5h8v16.8h-8zM1952.5 -821.1h7.6v6.1h-7.6zM1986.8 -860.8h9v14h-9zM1988.7 -846.8h3.9v4.9h-3.9zM1997.4 -862h9v18.8h-9zM1997.7 -840.7h7.4v6.4h-7.4zM2009.4 -861.6h8v18.6h-8zM2009.4 -840.5h6.3v7.7h-6.3zM2020 -862h10v15h-10zM2021.3 -846.9h4.8v4.4h-4.8zM2032.8 -863.3h10v19.1h-10zM2032.8 -844.2h5.3v3.3h-5.3zM2033 -841.7h9.7v6.4h-9.7zM2033.1 -833.7h5v5h-5zM2044.3 -863.2h9v13h-9zM2046.1 -850.2h6v5.2h-6zM2044.9 -847.7h7.2v10h-7.2zM2045.7 -835.4h4.5v4.5h-4.5zM2055.9 -862.3h9v14.8h-9zM2066.7 -863.1h8v20.4h-8zM2067.6 -842.7h4.9v3.1h-4.9zM2066.9 -840.2h5.5v6.7h-5.5zM2077.1 -861h11v17.1h-11zM2079.1 -843.8h6.5v5.9h-6.5zM2079.2 -841.3h7.8v9.5h-7.8zM1987.1 -814.3h8v16h-8zM1988.8 -819.9h4.4v5.6h-4.4zM1998.1 -817.1h12v20.6h-12zM1999.1 -821.7h5.1v4.5h-5.1zM2000.9 -825.2h4.1v4.1h-4.1zM2012.4 -813.2h10v17.4h-10zM2015.1 -819.2h4.2v6h-4.2zM2015.8 -831.6h4.4v4.4h-4.4zM2035.7 -809.5h10v13.1h-10zM2035.9 -820h9.2v8.1h-9.2zM2048.8 -814.2h11v17.5h-11zM2049.1 -819.3h7.4v5.1h-7.4zM2049.4 -827.6h9.8v11h-9.8zM2050.4 -826.4h5.8v5.8h-5.8zM2062.1 -817h8v19.7h-8zM2071.8 -815.9h9v18.8h-9zM2075.1 -819.3h4.5v3.4h-4.5zM2072.5 -824.8h6.8v6.4h-6.8zM1363.7 -772h14v22.8h-14zM1367.8 -749.2h7.2v4.5h-7.2zM1366.1 -746.9h5.9v5.9h-5.9zM1381.4 -772.1h10v25h-10zM1364.5 -743.4h14v29.9h-14zM1368.1 -745.2h3.6v3.6h-3.6zM1380.6 -744.1h18v27.8h-18zM1381.3 -747.4h4.1v4.1h-4.1zM1401.7 -738.7h10v22.6h-10zM1414.9 -732.5h18v16.8h-18zM1417 -738.5h10.6v6h-10.6zM1457.4 -771.5h9v15.9h-9zM1469.4 -773.1h9v20.9h-9zM1471.4 -752.2h6.2v4.6h-6.2zM1471 -749.7h7.2v8.7h-7.2zM1472.5 -745.1h5v5h-5zM1481.1 -773.7h12v18.8h-12zM1482.7 -754.9h7.7v3.7h-7.7zM1482.5 -752.4h10.1v6.6h-10.1zM1482.8 -742.6h4.7v4.7h-4.7zM1509.1 -773h11v20.9h-11zM1510.2 -749.6h9.2v10.6h-9.2zM1522.1 -773.5h9v20.5h-9zM1523.9 -753h3.8v4.2h-3.8zM1523.5 -750.5h5.7v10.1h-5.7zM1548.7 -774.5h9v13.6h-9zM1550.9 -760.9h6.1v4.4h-6.1zM1548.7 -758.4h8.6v6.3h-8.6zM1560.2 -773.7h13v13.1h-13zM1560.9 -758h12.2v8.1h-12.2zM1576.2 -771.7h13v20.3h-13zM1577.2 -748.9h8.6v6.6h-8.6zM1458.5 -734.7h12v20h-12zM1472.5 -736.2h10v20.8h-10zM1484.4 -733.6h9v17.6h-9zM1486.6 -742.7h3.6v3.6h-3.6zM1496.2 -733.9h13v19.2h-13zM1500.2 -738.8h7.7v4.9h-7.7zM1496.4 -746.5h12.4v10.2h-12.4zM1511.8 -734.3h8v18.9h-8zM1512.9 -738.3h3.6v4h-3.6zM1512.4 -746.4h6.7v9.5h-6.7zM1521.9 -729.8h9v15.4h-9zM1532.6 -735.5h9v19.1h-9zM1537.2 -740.8h4.2v5.3h-4.2zM1534.4 -744.2h4.9v4.9h-4.9zM1544.6 -730.2h9v16h-9zM1548.5 -733.7h4.7v3.5h-4.7zM1555.2 -729.4h13v15.5h-13zM1556.2 -733.5h7.9v4.2h-7.9zM1557 -739.2h9.8v7.3h-9.8zM1570.6 -734.2h9v19.2h-9zM1570.6 -738.2h5.1v3.9h-5.1zM1571.5 -743.1h7.2v6.3h-7.2zM1571.9 -746.9h5.8v5.8h-5.8zM1582.2 -728.2h8v14.2h-8zM1584.6 -731.5h3.7v3.2h-3.7zM1582.4 -740.9h7.7v10.2h-7.7zM1614.9 -773.8h8v20.6h-8zM1617 -743.3h5.7v5.7h-5.7zM1624.9 -771.6h8v19.6h-8zM1625.9 -751.9h4.5v5.7h-4.5zM1626.1 -749.4h5.5v9.3h-5.5zM1635.8 -773.7h9v20h-9zM1647.2 -773.7h8v17.4h-8zM1657.9 -772.5h9v16.8h-9zM1658.6 -755.7h5v4.1h-5zM1659.7 -753.2h5.5v10.4h-5.5zM1660.1 -743.2h5.2v5.2h-5.2zM1669.7 -774.1h10v13.8h-10zM1682.8 -773.4h12v19.1h-12zM1684.7 -754.2h7.8v5.2h-7.8zM1683.4 -751.7h7.9v9h-7.9zM1697.3 -772.5h8v17.9h-8zM1699.5 -754.6h4.8v3.7h-4.8zM1707.8 -774h13v14.7h-13zM1708.6 -756.7h12v10.6h-12zM1616.1 -734.9h9v19.7h-9zM1616.7 -739.8h6v4.9h-6zM1616.2 -745.4h8.8v7.9h-8.8zM1616.8 -750.4h6v6h-6zM1627.8 -733.4h8v18.5h-8zM1629.3 -736.9h4.8v3.5h-4.8zM1627.8 -745.2h7.5v9.3h-7.5zM1637.6 -734.9h11v19.5h-11zM1637.7 -747.3h9.2v9.9h-9.2zM1651.3 -729.9h9v14.1h-9zM1651.7 -734.6h4.8v4.7h-4.8zM1653.5 -739.2h5.5v6.9h-5.5zM1662.1 -735h11v18.6h-11zM1676 -732.6h10v18.3h-10zM1679.2 -750.6h5.4v5.4h-5.4zM1687.7 -733.1h8v18.9h-8zM1690.9 -737.2h3.5v4.1h-3.5zM1688.7 -745.2h6.4v9.6h-6.4zM1697.8 -731.3h13v17.8h-13zM1698.6 -742h10.1v8.2h-10.1zM1700.8 -748.7h3.8v3.8h-3.8zM1741 -773.4h8v14.3h-8zM1751.2 -772.5h10v16.3h-10zM1754 -756.2h4.6v5.7h-4.6zM1751.5 -753.7h8.7v8.2h-8.7zM1763.9 -772.2h13v20.5h-13zM1764.7 -751.7h8v3.5h-8zM1780 -772.7h11v18.1h-11zM1780 -752.1h10.9v7.2h-10.9zM1804.3 -773.4h8v14.1h-8zM1808.2 -759.3h3.6v4.9h-3.6zM1805 -756.8h6v9.8h-6zM1814 -772.1h10v17.5h-10zM1814.1 -754.6h6.8v3.7h-6.8zM1826.7 -772.7h9v17.8h-9zM1830.4 -754.9h4.7v4.6h-4.7zM1747.8 -732h11v16h-11zM1749.3 -745.5h8.3v11h-8.3zM1760.6 -736h13v20.2h-13zM1766.8 -740h6.3v4h-6.3zM1761.8 -746.8h11.6v8.3h-11.6zM1775.2 -734.5h9v20.1h-9zM1778.9 -738.9h4.6v4.4h-4.6zM1775.6 -745.5h5.8v8.5h-5.8zM1786.3 -733.6h10v19.8h-10zM1788.3 -738.6h4.6v5h-4.6zM1808.8 -732h9v17.2h-9zM1811.1 -735.9h5.7v3.9h-5.7zM1810.2 -742.5h7.7v7.9h-7.7zM1811.8 -743.7h4v4h-4zM1819.6 -733.5h13v19h-13zM1820.7 -742.8h9.8v6.9h-9.8zM1820.4 -747.6h3.5v3.5h-3.5zM1863.8 -773.8h9v15.2h-9zM1866.4 -756.1h6v8.3h-6zM1865.8 -744.4h5.2v5.2h-5.2zM1875.9 -772.2h13v15h-13zM1878.1 -757.2h5.6v4.6h-5.6zM1879.3 -754.7h8.8v10.4h-8.8zM1876.6 -745.4h5.9v5.9h-5.9zM1891.9 -772.5h9v15.2h-9zM1894.1 -754.8h5.4v6.6h-5.4zM1903.1 -773.8h9v19.3h-9zM1913.9 -773.8h13v16.6h-13zM1929.2 -772.5h10v16.1h-10zM1930.4 -756.4h5.4v5.3h-5.4zM1929.3 -753.9h9.6v9.5h-9.6zM1941.1 -771.6h8v19.2h-8zM1942 -752.4h4.9v5h-4.9zM1950.8 -773.3h11v16h-11zM1955.7 -757.3h5.7v4.1h-5.7zM1862.9 -731.4h10v15.4h-10zM1863.7 -735.3h6.7v3.8h-6.7zM1863 -740.4h6.9v6.5h-6.9zM1866.3 -749.1h4v4h-4zM1875.4 -731.3h8v17.6h-8zM1877.5 -734.5h4.4v3.2h-4.4zM1885.8 -729.4h9v15.6h-9zM1885.9 -738.3h8.9v6.4h-8.9zM1897.5 -729.9h9v15.3h-9zM1900.2 -740h5.7v7.6h-5.7zM1909.2 -735.8h10v20.7h-10zM1910.2 -744.8h5.3v5.3h-5.3zM1920.9 -736.4h13v20.8h-13zM1935.8 -732.8h10v18.3h-10zM1936.8 -735.8h4.1v3.1h-4.1zM1948.8 -729.4h13v15.7h-13zM1952.1 -733.8h7.5v4.4h-7.5zM1949 -742.4h11.4v10.5h-11.4zM1949.5 -748.6h4.5v4.5h-4.5zM1987.4 -772.3h11v19.5h-11zM1988 -750.2h9.4v6.8h-9.4zM2001.3 -771.9h8v19.5h-8zM2001.8 -749.8h5.5v8.5h-5.5zM2012.2 -772.5h12v17.5h-12zM2014.2 -755h5.6v4.1h-5.6zM2027 -773.4h9v19.4h-9zM2039.1 -773.3h8v18.9h-8zM2039.4 -754.4h4.7v5.9h-4.7zM2040.1 -751.9h6.6v6.8h-6.6zM2041.1 -743.4h4.8v4.8h-4.8zM2050 -772.8h12v15.5h-12zM2050.2 -754.9h11.6v9.5h-11.6zM2050.7 -749.2h5.1v5.1h-5.1zM2079.2 -772.4h13v17.9h-13zM2079.2 -754.5h5.5v5.5h-5.5zM2080.4 -752h10.9v7h-10.9zM1990.5 -730.9h12v15.4h-12zM1991.6 -742.1h10.1v8.7h-10.1zM2004.5 -732.7h8v18.8h-8zM2006.2 -738.7h4.1v6h-4.1zM2006 -742.3h5.6v7.1h-5.6zM2004.9 -748.3h4.1v4.1h-4.1zM2015.5 -727.1h11v13.3h-11zM2019.8 -730.2h4.7v3.1h-4.7zM2016.1 -739h10.3v9.4h-10.3zM2040.3 -734.2h8v18.4h-8zM2040.6 -745h7.4v8.4h-7.4zM2051.2 -729.4h13v15.7h-13zM2051.4 -734.6h7.5v5.2h-7.5zM2065.7 -730.6h11v16.8h-11zM2079.5 -729.8h8v15.6h-8zM2081.8 -739.3h5.5v6.9h-5.5zM2081.8 -744.5h5.5v5.5h-5.5zM1366.5 -690.7h10v17h-10zM1380.6 -691.1h24v24.5h-24zM1384.2 -666.8h5.7v5.7h-5.7zM1407 -690.3h10v29h-10zM1420.8 -691.4h10v16.7h-10zM1366.1 -658h24v24.6h-24zM1368.2 -662.9h16v4.9h-16zM1393.4 -658.9h10v27h-10zM1397.7 -664.1h5.7v5.2h-5.7zM1405.4 -654.7h14v23.5h-14zM1422.8 -660.6h18v27.2h-18zM1424.6 -664.8h12v4.2h-12zM1459.1 -690.7h11v15.7h-11zM1461.7 -675h5v3.3h-5zM1462.1 -672.5h7.1v8.9h-7.1zM1473 -690.2h10v17.3h-10zM1485.7 -690.8h10v15.6h-10zM1486.3 -672.7h9.2v7.5h-9.2zM1497.4 -692.2h9v17.8h-9zM1498.2 -671.8h6.2v8.6h-6.2zM1521.1 -690h12v20.4h-12zM1535.4 -692h9v16.5h-9zM1536.1 -673h6v9h-6zM1546 -690.2h10v14.5h-10zM1548.6 -675.7h6.3v5.9h-6.3zM1546.4 -673.2h7.9v9.1h-7.9zM1547 -663.8h3.7v3.7h-3.7zM1559.2 -690h8v16.1h-8zM1562.3 -674h4.2v4.5h-4.2zM1559.4 -671.5h5.9v10.8h-5.9zM1568.8 -692.1h10v19.4h-10zM1569.8 -672.7h6v4.8h-6zM1581.6 -692.3h12v16.5h-12zM1585.4 -673.3h7.6v8.2h-7.6zM1458.9 -649.2h9v17.5h-9zM1460.2 -653.3h5.6v4.1h-5.6zM1459.7 -659.7h8.2v8h-8.2zM1495.9 -648.4h9v16.8h-9zM1497.7 -653.1h6.1v4.6h-6.1zM1495.9 -658.8h8.5v7.9h-8.5zM1498 -661.2h4.4v4.4h-4.4zM1508 -650.5h10v18.6h-10zM1520 -645.8h8v14.3h-8zM1522.2 -662.9h4.7v4.7h-4.7zM1530.6 -648.9h10v16.3h-10zM1531.1 -654.3h5.1v5.4h-5.1zM1543.6 -651.5h9v18.3h-9zM1554.6 -646.5h12v13.1h-12zM1569.5 -650.2h11v18.9h-11zM1571.7 -654.4h6.8v4.2h-6.8zM1572.2 -661.1h6.6v8.4h-6.6zM1582.1 -647.5h9v16.2h-9zM1583 -653.5h5v6h-5zM1616.1 -691.3h9v20h-9zM1617.2 -664.7h5v5h-5zM1627.4 -689.7h13v15.5h-13zM1642.1 -691.8h9v20.9h-9zM1642.7 -668.4h5.8v6.6h-5.8zM1653.6 -691.2h11v19.8h-11zM1654.3 -668.8h9.7v10.7h-9.7zM1666.7 -691.9h13v13.3h-13zM1669.1 -666.5h5.3v5.3h-5.3zM1681.2 -690.1h9v20.6h-9zM1682.7 -669.4h4.1v3.8h-4.1zM1681.2 -666.9h7.7v10.2h-7.7zM1692 -691.5h9v16.1h-9zM1692.4 -663.1h3.7v3.7h-3.7zM1702.7 -691.1h10v13.2h-10zM1705.2 -677.9h4.6v4.7h-4.6zM1702.8 -675.4h6.7v7.1h-6.7zM1615.2 -645.6h11v14.3h-11zM1620.8 -649.4h4.4v3.9h-4.4zM1615.6 -664.6h4.6v4.6h-4.6zM1638.6 -644.9h13v13.4h-13zM1639.8 -648.3h8.3v3.4h-8.3zM1638.6 -654.3h12.3v6.9h-12.3zM1639.7 -662.3h5.4v5.4h-5.4zM1653.3 -646.3h9v13.9h-9zM1653.5 -649.7h4.8v3.4h-4.8zM1653.5 -666.1h4v4h-4zM1678.2 -653.3h9v21h-9zM1688.7 -646.6h10v14.3h-10zM1689.7 -664.3h5.7v5.7h-5.7zM1701.1 -649h10v16.9h-10zM1738.2 -690.7h13v14.7h-13zM1741.5 -676h8.4v5.4h-8.4zM1739.1 -673.5h8.8v6.9h-8.8zM1753.1 -691.5h9v20.1h-9zM1763.7 -692.4h13v15.8h-13zM1764.8 -676.6h8.3v4.7h-8.3zM1764.4 -666h4.4v4.4h-4.4zM1778.6 -692.2h12v18.1h-12zM1780.3 -671.6h9.2v8.7h-9.2zM1793.7 -692h10v13.9h-10zM1797.7 -678.1h4.7v4.2h-4.7zM1805.9 -689.9h12v20.9h-12zM1809.1 -669h5.5v4.4h-5.5zM1809.9 -666.5h7.5v7.5h-7.5zM1832.4 -689.6h10v18.3h-10zM1836.2 -671.4h4.6v5.4h-4.6zM1740.9 -651h13v18.2h-13zM1742.1 -659.5h4.4v4.4h-4.4zM1769.8 -649h9v16.7h-9zM1769.9 -660.3h7.9v8.8h-7.9zM1781.3 -651.9h8v18.6h-8zM1783.4 -665.5h5.3v5.3h-5.3zM1791.6 -647.6h11v14.9h-11zM1794.8 -652.4h7.1v4.8h-7.1zM1804.4 -652.6h13v19.4h-13zM1805.2 -657h7v4.4h-7zM1819.6 -646.3h8v13.2h-8zM1820.6 -657.1h6.1v8.3h-6.1zM1823.4 -662.6h3.6v3.6h-3.6zM1830.5 -645.9h9v14h-9zM1864.5 -690.3h9v20.7h-9zM1875.2 -690.4h8v19.6h-8zM1886.1 -691.5h9v16.7h-9zM1887.8 -674.8h6.2v3h-6.2zM1887 -672.3h6.7v6.9h-6.7zM1897 -691.5h8v13.4h-8zM1898 -678.2h4.5v4h-4.5zM1898.4 -675.7h6v9.9h-6zM1907.9 -691.5h9v18.5h-9zM1909.2 -670.5h5.8v6.5h-5.8zM1920 -689.9h9v18.6h-9zM1931.2 -691h10v14h-10zM1933.9 -677h6.5v3h-6.5zM1931.3 -674.5h9.3v7.8h-9.3zM1943 -690.1h8v18.9h-8zM1944.8 -671.2h3.6v3.5h-3.6zM1946.4 -664.2h4.6v4.6h-4.6zM1952.9 -691.1h10v17.4h-10zM1953.5 -673.7h6.6v5.6h-6.6zM1952.9 -671.2h9.9v6.9h-9.9zM1864.4 -648.3h13v16.4h-13zM1879.2 -649.7h13v18.2h-13zM1881.3 -662.5h9.8v10.3h-9.8zM1894.7 -647.5h10v14.9h-10zM1906.3 -649.5h8v17.7h-8zM1908.3 -661.7h3.9v3.9h-3.9zM1915.9 -653.8h9v20.5h-9zM1927 -647.8h8v14.7h-8zM1927.3 -652h5.1v4.2h-5.1zM1937.6 -646.8h8v15.2h-8zM1939.5 -650.6h4.8v3.8h-4.8zM1937.7 -656.5h7.4v7.1h-7.4zM1947.6 -646.9h9v15.1h-9zM1948.4 -657.6h8v8.2h-8zM1950.6 -662.2h3.7v3.7h-3.7zM1989.3 -691.1h10v16.5h-10zM1990 -672h8.6v8.7h-8.6zM2001.1 -690.4h12v19.2h-12zM2003.6 -671.2h8.1v4h-8.1zM2001.4 -668.7h10v11h-10zM2003.1 -663.4h3.8v3.8h-3.8zM2015.1 -691h13v16h-13zM2016.1 -675h5.4v3.6h-5.4zM2018.8 -672.5h9.1v10.4h-9.1zM2016.8 -663.2h3.9v3.9h-3.9zM2030.8 -692h13v14h-13zM2031.7 -677.9h6.5v4.6h-6.5zM2045.7 -690.1h12v13.6h-12zM2048.2 -676.6h5.8v3.3h-5.8zM2049.5 -668.1h4.5v4.5h-4.5zM2060.1 -690.6h13v18.2h-13zM2065.1 -672.4h6.3v4.2h-6.3zM2076.2 -692.5h10v19.4h-10zM2076.4 -670.6h6.2v8.7h-6.2zM1988.7 -650.9h8v20.2h-8zM1991.3 -665.4h5.5v5.5h-5.5zM1998.5 -646.5h11v16h-11zM2001.7 -650.4h7.5v3.9h-7.5zM2000.1 -658.7h8.5v9.6h-8.5zM1999.6 -663.4h5v5h-5zM2012.1 -648.5h9v16.4h-9zM2012.4 -652.5h5.4v4h-5.4zM2023.8 -651.4h9v19h-9zM2024.9 -656.7h5.8v5.3h-5.8zM2023.9 -661.5h8v7.6h-8zM2035.2 -650.8h12v19.5h-12zM2035.9 -665.8h4.6v4.6h-4.6zM2049.2 -647.4h11v16.7h-11zM2049.4 -651h7.3v3.6h-7.3zM2050 -658h9.1v8.2h-9.1zM2062.8 -647.4h9v14.7h-9zM2073.8 -646h12v14.5h-12zM2078.1 -652h6.3v6h-6.3zM1383.1 -609.2h14v24.5h-14zM1386.6 -584h4.2v4.2h-4.2zM1400.5 -606.7h18v16.2h-18zM1401.7 -590.5h9.3v3.8h-9.3zM1401.6 -581.8h5.4v5.4h-5.4zM1422.3 -608.5h24v23.4h-24zM1428.9 -585.1h16.2v5.8h-16.2zM1365.6 -570.5h24v24.7h-24zM1365.7 -581.8h5.9v5.9h-5.9zM1392.2 -567.6h18v21.9h-18zM1414.4 -567.3h10v20.1h-10zM1417.7 -572.9h6.2v5.6h-6.2zM1427.4 -570.2h14v23.2h-14zM1432.2 -574.1h7.3v3.9h-7.3zM1429.8 -575.3h3.8v3.8h-3.8zM1456.9 -607.7h10v20.3h-10zM1460.1 -587.5h4v5.4h-4zM1457.2 -585h9.3v6.8h-9.3zM1469.1 -606.7h11v13.2h-11zM1481.8 -607.2h10v17h-10zM1482.3 -587.7h8.5v10.9h-8.5zM1503 -607.9h10v14.2h-10zM1503.6 -593.7h6.1v5.7h-6.1zM1504.7 -591.2h7v7.1h-7zM1504.2 -579.2h5.1v5.1h-5.1zM1515.6 -609h9v16.8h-9zM1516 -589.6h7.6v10.1h-7.6zM1526.6 -609.4h12v16.8h-12zM1540.6 -609.1h12v17.8h-12zM1542.4 -591.4h6.2v4.2h-6.2zM1543.2 -585.5h3.7v3.7h-3.7zM1554.1 -606.9h11v14.8h-11zM1556.7 -592.1h6.2v4.4h-6.2zM1556.1 -584.2h4.9v4.9h-4.9zM1566.8 -607h8v20.4h-8zM1568.7 -586.6h5.1v4.8h-5.1zM1567.2 -584.1h5.5v8.5h-5.5zM1576.7 -607h10v15.3h-10zM1459.8 -564.9h9v19h-9zM1459.9 -569.4h5.5v4.5h-5.5zM1461.6 -578.4h7.1v11h-7.1zM1470.4 -565.1h9v16.7h-9zM1473.2 -569.6h5.3v4.4h-5.3zM1470.6 -575.5h8.4v7.8h-8.4zM1472.9 -581.1h4.8v4.8h-4.8zM1481.7 -564.4h10v18.1h-10zM1493.7 -560.8h11v13.2h-11zM1495.2 -565.4h7.1v4.6h-7.1zM1495.1 -573.5h7.8v10.2h-7.8zM1506.8 -564.8h12v16.7h-12zM1520.9 -560.5h9v13.2h-9zM1521.4 -569.5h7.3v6.6h-7.3zM1521.6 -577.9h5.7v5.7h-5.7zM1531.7 -566.4h10v19.6h-10zM1544.3 -559.6h9v13.2h-9zM1555.8 -563.6h13v15.8h-13zM1557.6 -567.5h5.9v3.9h-5.9zM1570.5 -560.1h10v13.9h-10zM1572.6 -570.1h7.7v7.4h-7.7zM1582.3 -561.2h10v13.3h-10zM1582.4 -571h9.4v7.3h-9.4zM1614.4 -607.1h13v20.3h-13zM1614.5 -584.4h11.3v9h-11.3zM1615.5 -578.2h5.8v5.8h-5.8zM1630.6 -609.3h11v18h-11zM1631 -588.8h10.5v10.2h-10.5zM1643.4 -607.6h10v19.9h-10zM1647.1 -587.7h5.4v3.5h-5.4zM1643.7 -585.2h6.9v10.2h-6.9zM1647.4 -580.5h5v5h-5zM1655.5 -606.7h8v18.6h-8zM1658.2 -588.1h3.6v4.8h-3.6zM1656 -578.9h4.4v4.4h-4.4zM1665.4 -608h8v19h-8zM1669.2 -589h3.8v5.1h-3.8zM1666.4 -586.5h6.7v7.7h-6.7zM1675 -608h8v15.6h-8zM1675 -589.9h7.9v8.4h-7.9zM1676.8 -577.9h3.9v3.9h-3.9zM1685.3 -606.9h9v15.8h-9zM1687.9 -588.6h5.7v9.6h-5.7zM1697.3 -607.6h11v13.3h-11zM1697.6 -578.9h4.8v4.8h-4.8zM1615.2 -563.4h9v16h-9zM1619.9 -566.8h3.7v3.4h-3.7zM1616 -574.7h6.7v8.8h-6.7zM1616.2 -579.3h3.5v3.5h-3.5zM1627.3 -564h8v16.8h-8zM1627.5 -576.4h7.4v9.9h-7.4zM1636.8 -563.7h8v17.8h-8zM1638.7 -569.2h5.4v5.5h-5.4zM1638.4 -576.9h5.4v10.7h-5.4zM1646.9 -561.5h11v13.4h-11zM1647.1 -571.8h9.8v7.8h-9.8zM1660.6 -560.9h9v13.1h-9zM1661.6 -565.5h4.5v4.6h-4.5zM1671.7 -562h9v15h-9zM1674 -565.5h5.5v3.5h-5.5zM1683.7 -564.2h12v16.3h-12zM1684.3 -575.6h8.6v8.9h-8.6zM1697.4 -567.3h10v20.1h-10zM1741.1 -608.9h11v17.1h-11zM1754.6 -606.5h9v14.6h-9zM1766.6 -607.3h10v17.9h-10zM1767.5 -586.9h6.6v7.2h-6.6zM1778.8 -609.4h9v19.2h-9zM1780.1 -590.2h6.1v4.5h-6.1zM1779.1 -587.7h7.8v9.3h-7.8zM1782.2 -583.4h4.7v4.7h-4.7zM1789.9 -607h8v19.4h-8zM1792.4 -587.6h3.3v4.8h-3.3zM1799.8 -608.9h8v18.4h-8zM1801.2 -588h6.4v7.7h-6.4zM1809.6 -608.9h11v18.5h-11zM1809.9 -590.4h7.4v4.6h-7.4zM1810.2 -587.9h10.3v8.9h-10.3zM1823 -607.2h12v16.4h-12zM1829 -590.8h4.9v5.3h-4.9zM1825.7 -588.3h7.7v8.1h-7.7zM1824.5 -582.5h5.1v5.1h-5.1zM1739.6 -566.9h8v19.1h-8zM1749.9 -562.6h10v15.3h-10zM1761.8 -566h10v17.8h-10zM1763.4 -578.9h7.2v10.4h-7.2zM1765.4 -580.4h5.7v5.7h-5.7zM1773.5 -566.5h12v18.6h-12zM1774.3 -579.3h8.6v10.3h-8.6zM1788 -560.6h10v14.4h-10zM1788.5 -570.3h8.3v7.2h-8.3zM1789.6 -577.8h4.7v4.7h-4.7zM1799.7 -562.3h12v16.5h-12zM1814 -563.8h8v15.6h-8zM1815.9 -576.3h5.1v10h-5.1zM1817.3 -578h5.3v5.3h-5.3zM1825 -563.5h10v16.3h-10zM1861.9 -606.5h11v16.3h-11zM1865.3 -590.2h6.1v3.3h-6.1zM1863.2 -587.7h7.2v6.6h-7.2zM1875.9 -608.2h9v15.7h-9zM1877.1 -592.5h4.1v5.8h-4.1zM1876.5 -590h5.9v10.3h-5.9zM1887.8 -606.6h13v13.8h-13zM1888.6 -592.8h6.8v5h-6.8zM1903.5 -607.6h8v17.2h-8zM1905.8 -590.4h4.3v5.9h-4.3zM1904 -587.9h5v10.7h-5zM1913.4 -608.2h8v14.1h-8zM1923.7 -607.3h9v18.3h-9zM1926.8 -580.2h5.9v5.9h-5.9zM1935.6 -606.7h11v18.2h-11zM1936.6 -588.5h6.3v4.2h-6.3zM1949.7 -607.4h9v14h-9zM1950.7 -593.4h4v5.7h-4zM1862.2 -560.7h10v14.6h-10zM1862.5 -569.3h9.6v6.1h-9.6zM1875.3 -564.5h9v17.6h-9zM1876.9 -569h4.9v4.5h-4.9zM1887.4 -562.7h13v15.7h-13zM1903.1 -559.6h12v13.6h-12zM1916.9 -566.2h12v18.6h-12zM1932.1 -564.4h12v16.7h-12zM1935.9 -569h7.9v4.6h-7.9zM1936.8 -574.3h7.3v7.4h-7.3zM1946.4 -562.8h8v17.2h-8zM1948.5 -565.9h5v3.1h-5zM1946.7 -574h7v8.7h-7zM1956.3 -561h12v15.1h-12zM1957.7 -570.9h10.1v7.4h-10.1zM1987.1 -608.4h10v19.4h-10zM1987.1 -589h4.6v4.9h-4.6zM1988.7 -586.5h7.9v10.9h-7.9zM1999.2 -609.5h8v18.2h-8zM2001.5 -591.2h5.3v3.1h-5.3zM1999.6 -588.7h6.7v10.2h-6.7zM2032.3 -608.5h9v18.4h-9zM2033.1 -590.2h5.8v4.8h-5.8zM2053.5 -609h12v18.3h-12zM2055 -588.2h9.3v6.1h-9.3zM2068.6 -608.9h9v18.3h-9zM2069.9 -590.6h6.1v3.5h-6.1zM2068.6 -588.1h9v6.4h-9zM2080.7 -608.2h8v19.4h-8zM1989 -564.9h10v17.5h-10zM1992.3 -577h5.8v5.8h-5.8zM2000.9 -566.7h8v18.8h-8zM2010.7 -561.7h9v14h-9zM2011.8 -574.6h4.2v4.2h-4.2zM2022.5 -566.7h11v19.3h-11zM2022.9 -572.2h5.4v5.5h-5.4zM2022.9 -575.4h9.5v6.2h-9.5zM2036.2 -565.8h12v17.8h-12zM2039.7 -571.6h7.7v5.8h-7.7zM2036.2 -576.5h11v8.2h-11zM2039.2 -578.6h5.2v5.2h-5.2zM2050.2 -565.7h10v18.4h-10zM2052.4 -569.8h6.8v4.1h-6.8zM2052.1 -578.2h6.3v9.9h-6.3zM2063 -565.1h12v18.1h-12zM2063.2 -577.1h11.5v9.5h-11.5zM2077.5 -564.2h9v17h-9zM2078.5 -568.6h4.7v4.4h-4.7zM2078.7 -576.2h6.9v9.4h-6.9zM1366.2 -522h10v29.6h-10zM1379.1 -522.7h10v25.9h-10zM1392.5 -524.3h18v26.6h-18zM1414.5 -523.7h10v27.9h-10zM1365.8 -481.4h14v19h-14zM1369.2 -485.2h6.2v3.8h-6.2zM1368.7 -495.6h5.9v5.9h-5.9zM1382.5 -488.4h18v25.5h-18zM1384.2 -496.5h5.4v5.4h-5.4zM1404 -486.9h18v24.2h-18zM1409.7 -490.9h9.2v4h-9.2zM1404.2 -493.2h5.1v5.1h-5.1zM1424.5 -488.3h10v26h-10zM1459.7 -524h12v13.1h-12zM1465 -510.9h5.2v4h-5.2zM1460.2 -508.4h9.7v6.5h-9.7zM1474.1 -523.9h9v20.7h-9zM1474.1 -503.2h5.6v3.3h-5.6zM1474.2 -500.7h8.8v10.8h-8.8zM1485.5 -523.1h11v13.9h-11zM1488.6 -499.5h3.7v3.7h-3.7zM1498.5 -522.8h9v17.3h-9zM1498.7 -503h7.8v6h-7.8zM1522.3 -523.3h8v17.8h-8zM1523 -503h6.3v8.3h-6.3zM1532.8 -521.8h8v16.8h-8zM1535.3 -505h5.5v5h-5.5zM1542.9 -522.7h13v19.8h-13zM1546.9 -502.8h7.5v5.1h-7.5zM1544.5 -500.3h11v6.3h-11zM1558.6 -522h9v19.9h-9zM1569.2 -524.1h10v16.6h-10zM1571 -507.6h5.3v3.9h-5.3zM1580.8 -523.5h8v15.3h-8zM1583.2 -508.2h4.6v5.8h-4.6zM1583.1 -505.7h5.5v10.8h-5.5zM1459.1 -481h11v18.1h-11zM1459.1 -491.2h8.2v7.6h-8.2zM1472.8 -481.8h11v20h-11zM1473.8 -493.7h4.7v4.7h-4.7zM1486.4 -480h9v16.8h-9zM1498.6 -479.2h10v16.4h-10zM1499.1 -484.6h5.5v5.4h-5.5zM1510.9 -481.3h13v20.6h-13zM1514.1 -484.5h8v3.2h-8zM1512.9 -493h9.8v9.2h-9.8zM1512.5 -489h3.7v3.7h-3.7zM1527 -479.1h9v15.7h-9zM1528.7 -482.1h5v3h-5zM1537.8 -477.4h10v14.5h-10zM1539.6 -496.8h5.6v5.6h-5.6zM1561 -477.3h10v16.7h-10zM1564.5 -487.5h6.4v7.8h-6.4zM1573.8 -476.5h13v13.3h-13zM1573.9 -487.2h9v8.2h-9zM1577.8 -496.2h4.4v4.4h-4.4zM1615.3 -523.8h10v19h-10zM1615.5 -502.3h9.1v7.9h-9.1zM1619.2 -497.2h4.8v4.8h-4.8zM1628.2 -523.6h11v18.3h-11zM1628.4 -502.7h10.3v6.8h-10.3zM1641.8 -523.7h9v14.3h-9zM1641.9 -506.9h8.4v8.1h-8.4zM1653.1 -522.9h13v17.2h-13zM1667.9 -524.2h8v20.4h-8zM1669.1 -501.4h6.5v6.4h-6.5zM1671.6 -500.5h3.7v3.7h-3.7zM1677.6 -521.7h10v20.9h-10zM1679.5 -500.8h5.8v5.3h-5.8zM1679.5 -498.3h7.2v8h-7.2zM1678.4 -499h4.9v4.9h-4.9zM1690.1 -523.8h12v19.5h-12zM1691.9 -501.8h9.8v6.9h-9.8zM1692 -493.4h4.6v4.6h-4.6zM1615.2 -483.1h10v21h-10zM1627.7 -481.6h10v19.4h-10zM1631.9 -487.1h5.4v5.4h-5.4zM1630.6 -493.5h6.6v9.4h-6.6zM1639.4 -481.3h11v20.2h-11zM1640.2 -492.9h10v9.1h-10zM1653.4 -478.5h9v15.1h-9zM1665.3 -476.9h9v15.5h-9zM1666.1 -481.9h4.7v5h-4.7zM1669.2 -493.4h4v4h-4zM1677.2 -476.2h9v14.7h-9zM1688.2 -479.7h8v18.1h-8zM1697.8 -481.2h9v19.3h-9zM1698.7 -484.3h5.2v3.1h-5.2zM1698.8 -493.7h6.7v9.9h-6.7zM1698.5 -496h4v4h-4zM1740.4 -522.1h10v18.9h-10zM1740.5 -497.3h3.7v3.7h-3.7zM1752.9 -523.5h9v16.3h-9zM1754.2 -507.2h5.9v5.6h-5.9zM1764.1 -521.8h8v17.5h-8zM1766 -504.3h4.8v5.1h-4.8zM1764.2 -499.4h4v4h-4zM1775.3 -522.1h9v14.7h-9zM1775.9 -507.4h4.2v3.9h-4.2zM1785.9 -521.7h13v13.5h-13zM1786.6 -505.7h10.1v7.3h-10.1zM1801.2 -521.7h11v13.4h-11zM1802.2 -505.8h9.4v8.2h-9.4zM1814.9 -524.3h8v19.7h-8zM1815.5 -504.6h3.5v3.3h-3.5zM1815.9 -502.1h6.7v9h-6.7zM1824.4 -523.1h12v18.6h-12zM1739.4 -477.8h12v15.1h-12zM1754.5 -475.6h13v15h-13zM1754.8 -488.5h8.4v10.3h-8.4zM1770 -476h9v14.4h-9zM1773.6 -480.3h4.9v4.2h-4.9zM1770.5 -487.1h7.1v8.6h-7.1zM1770.2 -495.9h5.4v5.4h-5.4zM1781.3 -479.8h13v16.9h-13zM1784.9 -485.7h5.5v6h-5.5zM1796.7 -475.5h12v13.5h-12zM1810.9 -478.4h13v15.6h-13zM1814 -496.8h4.9v4.9h-4.9zM1825.7 -479.8h9v18.9h-9zM1825.8 -489.6h9v7.3h-9zM1826.1 -489.4h3.6v3.6h-3.6zM1877.9 -523.2h12v17.4h-12zM1892 -522.2h9v13.6h-9zM1902.7 -523.9h13v18.1h-13zM1906.6 -505.8h5.6v5h-5.6zM1906.3 -499.2h4.3v4.3h-4.3zM1917.9 -522h12v13.2h-12zM1918 -506.3h11.9v8.9h-11.9zM1933.1 -523.1h8v13.1h-8zM1936.1 -510h3.8v4.7h-3.8zM1942.9 -522h9v20.6h-9zM1943.3 -498.9h5.9v6.1h-5.9zM1955 -522.7h8v15.5h-8zM1955.4 -504.7h7.4v7.6h-7.4zM1861.9 -477.3h11v16h-11zM1862.3 -480.9h5v3.6h-5zM1875.3 -478.3h11v15.1h-11zM1888.9 -478.8h10v17.8h-10zM1889.7 -487.5h8.3v6.2h-8.3zM1900.7 -477.4h9v14.1h-9zM1902.3 -482.5h5.8v5.1h-5.8zM1911.8 -477.4h9v15.4h-9zM1912.8 -486.3h5.6v6.4h-5.6zM1923.5 -477h12v14.5h-12zM1924.6 -485.7h9.8v6.1h-9.8zM1937.5 -478.1h13v15.6h-13zM1940.6 -481.2h6.7v3.1h-6.7zM1937.9 -487.1h8.2v6.5h-8.2zM1939.1 -490.3h3.5v3.5h-3.5zM1952.9 -482.7h9v20.8h-9zM1953.4 -487.8h5v5.1h-5zM1988.2 -522.5h9v17.2h-9zM1988.2 -502.9h8.6v7.2h-8.6zM1999.7 -523h11v19.9h-11zM2000.8 -503.1h5.8v5.2h-5.8zM2001.5 -495.7h3.8v3.8h-3.8zM2012.9 -522.7h10v17.1h-10zM2013.3 -503.2h8.2v7.4h-8.2zM2025.6 -523.7h11v15.1h-11zM2031.7 -508.6h4.7v4.3h-4.7zM2039.3 -522.8h8v16.6h-8zM2040.7 -506.2h5.6v6h-5.6zM2049.1 -521.7h12v14.4h-12zM2051.4 -504.8h8.7v9.9h-8.7zM2051.3 -497h5.7v5.7h-5.7zM2074.2 -521.7h12v16.8h-12zM2074.2 -504.9h5.7v5.9h-5.7zM2075.4 -502.4h10.7v9h-10.7zM1989.5 -476h10v13.5h-10zM2002.5 -479.2h11v18.1h-11zM2016.4 -477.7h9v15h-9zM2017.8 -486.5h7v6.3h-7zM2028.4 -478.9h12v16.9h-12zM2029.5 -488.5h10.8v7.1h-10.8zM2042.1 -481.5h9v18.4h-9zM2043.4 -486.6h5.7v5.1h-5.7zM2042.4 -490.4h8.6v6.4h-8.6zM2053.5 -477.2h10v13.7h-10zM2053.8 -489.7h7.2v10h-7.2zM2065.6 -479.7h10v18.6h-10zM2078.3 -481.5h10v18h-10zM2079 -485.6h4.6v4.1h-4.6zM2081.3 -494.6h6.7v10.6h-6.7zM1367.1 -436.6h10v24.8h-10zM1368.3 -411.8h5.5v5.8h-5.5zM1381 -438.8h24v28.1h-24zM1383.4 -412.1h3.9v3.9h-3.9zM1408.6 -437.6h10v17.5h-10zM1421.2 -439.1h18v20.6h-18zM1364.3 -401.1h14v23.9h-14zM1368.3 -405.8h8.9v4.7h-8.9zM1365.7 -405.5h4.1v4.1h-4.1zM1381.5 -405.2h24v26.8h-24zM1460 -439.3h10v19.4h-10zM1461 -417.4h8.1v7.2h-8.1zM1472.2 -438.9h9v14h-9zM1475.4 -422.4h5.7v7.7h-5.7zM1473 -413.1h4.1v4.1h-4.1zM1484.1 -438.6h12v17.4h-12zM1497.7 -439.3h8v13.7h-8zM1498.1 -425.7h5v5.8h-5zM1508.9 -436.6h10v18.9h-10zM1513.5 -417.7h5.3v4h-5.3zM1520.7 -438.7h9v13.5h-9zM1523.1 -425.2h5.8v4.7h-5.8zM1532.1 -437.5h10v14.9h-10zM1533.6 -412.6h5.6v5.6h-5.6zM1545.2 -438.6h10v17.8h-10zM1546.8 -418.3h6.6v7.7h-6.6zM1548.9 -409.9h3.7v3.7h-3.7zM1557.5 -437.7h8v20.4h-8zM1559.1 -417.3h4.6v3.7h-4.6zM1560.2 -414.8h4.9v6.2h-4.9zM1558.1 -407.6h3.8v3.8h-3.8zM1567.3 -439.3h13v13.8h-13zM1569 -422.9h10.8v8.8h-10.8zM1582 -436.7h9v18.3h-9zM1582.5 -415.9h8v8.4h-8zM1457.6 -391.7h10v14h-10zM1458.4 -401.6h7.5v7.5h-7.5zM1469.9 -395.6h10v18.3h-10zM1470.9 -411.4h5.2v5.2h-5.2zM1482 -397.4h12v20.4h-12zM1484 -401h6.9v3.6h-6.9zM1482.3 -412.9h5.6v5.6h-5.6zM1497.1 -393.1h10v16.6h-10zM1497.2 -406.1h9.8v10.4h-9.8zM1510 -391.2h12v14.2h-12zM1511.1 -394.2h8v3.1h-8zM1510.6 -409.2h3.6v3.6h-3.6zM1523.8 -392.7h11v16.6h-11zM1529.1 -397.8h4.8v5.1h-4.8zM1524.1 -402.7h8.8v7.5h-8.8zM1524.2 -405.3h4.5v4.5h-4.5zM1536.4 -396.2h8v18.6h-8zM1539.2 -402.1h4v6h-4zM1537.1 -406.3h5.1v7.6h-5.1zM1546.4 -389h10v13.2h-10zM1550.1 -393.2h5.4v4.1h-5.4zM1547.1 -402h6.9v10.4h-6.9zM1559.4 -392.6h8v16.2h-8zM1570.1 -398.8h10v20.3h-10zM1570.5 -403.3h5.6v4.5h-5.6zM1570.6 -409.3h9.3v8.1h-9.3zM1581.7 -392.8h11v15.5h-11zM1582.7 -396.8h6.3v4.1h-6.3zM1615.8 -438.7h9v20.4h-9zM1616.5 -415.8h6.2v7.2h-6.2zM1626.5 -437.5h11v20h-11zM1626.8 -415h9.7v7.9h-9.7zM1639.2 -438.5h9v20.5h-9zM1650.5 -437.4h13v13.9h-13zM1651.7 -423.5h7.6v4.4h-7.6zM1650.7 -421h9.3v9.2h-9.3zM1665.3 -437.3h11v17.6h-11zM1666.4 -417.2h9.2v9.3h-9.2zM1678.2 -438.9h13v19.2h-13zM1683.7 -419.7h6.9v3.4h-6.9zM1693.4 -438h9v17.1h-9zM1695.9 -418.4h6.3v7h-6.3zM1705.1 -436.8h11v19.4h-11zM1708.3 -417.4h6.5v6h-6.5zM1706.5 -414.9h8.9v9.2h-8.9zM1615.5 -394.6h11v18.6h-11zM1619.2 -399h6.9v4.4h-6.9zM1616 -404.6h9.6v7.5h-9.6zM1617.5 -406.2h4.2v4.2h-4.2zM1629.2 -392.8h9v16.4h-9zM1629.2 -405.4h8.9v10.1h-8.9zM1640.6 -389.4h11v13.3h-11zM1653.2 -392.3h9v15.2h-9zM1654.3 -405h7.1v10.1h-7.1zM1663.7 -393.1h13v16.4h-13zM1664.3 -403h11.6v7.4h-11.6zM1679.8 -390.8h8v13h-8zM1704.2 -397.7h10v20.1h-10zM1706 -403.6h6.8v5.9h-6.8zM1704.4 -408h6.9v7.8h-6.9zM1738.2 -438.7h12v14.1h-12zM1738.4 -422h8.5v8h-8.5zM1752.1 -439.3h10v14.5h-10zM1754.6 -422.3h7v10.4h-7zM1763.7 -438.1h8v16.4h-8zM1763.8 -421.6h3.6v5.5h-3.6zM1763.8 -419.1h7.7v8.5h-7.7zM1774.1 -437.3h13v19.1h-13zM1778.4 -418.2h8.3v5.4h-8.3zM1774.1 -415.7h12.9v7.7h-12.9zM1789.1 -439.1h10v15.7h-10zM1791.5 -423.5h5.4v4.9h-5.4zM1800.9 -439h11v19.6h-11zM1802 -416.9h8.3v9.3h-8.3zM1826.6 -439.1h8v16.2h-8zM1828 -423h3.8v4.6h-3.8zM1826.8 -420.5h7.6v9.1h-7.6zM1738.3 -397h8v19.9h-8zM1739.9 -402.8h5v5.8h-5zM1740.2 -407.5h5.7v8h-5.7zM1748.8 -392.5h11v16.8h-11zM1749.9 -397.4h7v4.9h-7zM1749.3 -403.8h7.2v8.8h-7.2zM1751.8 -407.5h5v5h-5zM1762.6 -389.1h12v13.2h-12zM1763.8 -401.6h8.7v10h-8.7zM1777.3 -398.2h8v20h-8zM1779.3 -403.7h5.2v5.5h-5.2zM1778.3 -407.2h5.9v6.4h-5.9zM1787.2 -389h11v13.2h-11zM1800.6 -394.4h8v16.8h-8zM1803.4 -406.9h4.9v10h-4.9zM1810.6 -396.3h10v19.7h-10zM1822.9 -392.1h10v16.1h-10zM1823 -405.5h8.9v10.9h-8.9zM1826.8 -407.1h5.6v5.6h-5.6zM1863.5 -436.7h12v15.7h-12zM1864.6 -418.6h10.5v8.3h-10.5zM1877.7 -438.6h9v13.5h-9zM1878.6 -422.6h7.1v8h-7.1zM1902.7 -437.2h13v20.3h-13zM1905.5 -416.9h5.6v5.6h-5.6zM1918.4 -438.4h8v18.1h-8zM1918.8 -420.3h5.4v3.2h-5.4zM1919.5 -417.8h6.9v6.9h-6.9zM1928.8 -439.3h13v13h-13zM1932.8 -426.2h6.4v3.5h-6.4zM1943.4 -439.1h10v17.6h-10zM1944.5 -421.5h6.3v5.8h-6.3zM1955.8 -437.7h10v13.9h-10zM1958 -414.1h4v4h-4zM1863.3 -396.1h10v19.2h-10zM1863.3 -399.9h6.8v3.8h-6.8zM1863.8 -408h9.1v9.3h-9.1zM1876.5 -390.8h11v14.6h-11zM1877.8 -396.5h7.4v5.6h-7.4zM1879.3 -409h5.7v5.7h-5.7zM1889 -395.3h9v17.1h-9zM1891.4 -399.6h5.8v4.3h-5.8zM1889.1 -404h8.8v6.2h-8.8zM1899.6 -394.8h10v16.6h-10zM1902.1 -406.7h7.5v9.4h-7.5zM1901.3 -412.1h5.6v5.6h-5.6zM1912.2 -391.4h12v14.2h-12zM1915.2 -409.1h5.6v5.6h-5.6zM1926.2 -393.5h12v16.5h-12zM1927 -406.1h8.4v10.1h-8.4zM1940.1 -395.8h13v19.1h-13zM1940.2 -405.5h12.4v7.2h-12.4zM1956 -395.3h9v17h-9zM1998.5 -436.8h12v17.5h-12zM2002.7 -419.3h6.4v3.3h-6.4zM1999.7 -416.8h10v10.4h-10zM2012.8 -439.1h9v13.4h-9zM2013.4 -423.2h5.9v6.8h-5.9zM2024.3 -437.8h9v13.3h-9zM2025 -424.5h6.1v5.3h-6.1zM2026.1 -411.7h4.8v4.8h-4.8zM2035 -439.4h9v16.2h-9zM2035.3 -423.1h5.9v4.5h-5.9zM2037.1 -411.3h4.9v4.9h-4.9zM2057.9 -437.5h8v13.4h-8zM2059.2 -424.1h5.5v5.2h-5.5zM2058.5 -421.6h7.2v6.7h-7.2zM2067.4 -437.8h12v13.1h-12zM2069.4 -424.7h8.1v3.5h-8.1zM2081.7 -437.6h9v14.5h-9zM1986.9 -396.3h8v18.9h-8zM1987.9 -407.7h6.8v8.9h-6.8zM1998 -394h8v18.2h-8zM2000 -397.7h3.7v3.7h-3.7zM1999.3 -402.9h5.9v6.4h-5.9zM2008.9 -394.5h8v16.1h-8zM2011.9 -400.3h4.2v5.8h-4.2zM2010.8 -404.8h5.3v7.8h-5.3zM2019.1 -395.4h9v19h-9zM2030.8 -396.7h9v20.9h-9zM2031.5 -401.5h5.7v4.8h-5.7zM2031 -408.7h8.1v9.5h-8.1zM2041.8 -393.6h11v16.8h-11zM2044.8 -399.6h5.3v6h-5.3zM2054.4 -391.9h12v15.8h-12zM2056 -395.6h7.2v3.7h-7.2zM2055.1 -402.4h9v8h-9zM2056.7 -409.2h3.7v3.7h-3.7zM2069.4 -394.4h8v16.9h-8zM2070.3 -403.9h5.6v7h-5.6zM2071.7 -409.7h3.6v3.6h-3.6zM2080.5 -393h9v15.4h-9z"/>
<g fill="#d2d2d1"><rect x="1304" y="-690" width="40" height="62"/><rect x="1360" y="-600" width="36" height="40"/><rect x="1372" y="-520" width="44" height="40"/></g>
<g fill="#f6d3d1" stroke="#eec3c1" stroke-width="0.8"><path d="M1308 -596 h20 v18 h-8 v42 h-12z"/><rect x="1296" y="-500" width="36" height="46"/><path d="M1298 -724 h14 v6 h6 v8 h-8 v-6 h-12z"/><rect x="1300" y="-432" width="50" height="40"/></g>
</g></g>
<path d="M540 -5.300 L608 31.800 M722 93.900 L1260 387" stroke="#929292" stroke-width="5.800" fill="none"/>
<path d="M1506 -10 L1302 303 L1232 410" stroke="#9e9e9e" stroke-width="5.800" fill="none"/>
<rect x="577.5" y="8.500" width="20" height="20" rx="4" fill="#fcfcfc" stroke="#9a9a9a" stroke-width="1.200"/>
<text x="587.5" y="23" font-size="12" fill="#444" stroke="#444" stroke-width="0.3" text-anchor="middle">61</text>
<text transform="translate(91 70) rotate(29)" font-size="17" fill="#5c5c5c" letter-spacing="0.9" font-weight="normal" text-anchor="middle" dy="0.34em" opacity="1" stroke="#fdfdfb" stroke-width="2.2" paint-order="stroke">Clinton Ave</text>
<text transform="translate(180 9) rotate(29)" font-size="17" fill="#5c5c5c" letter-spacing="0.9" font-weight="normal" text-anchor="middle" dy="0.34em" opacity="1" stroke="#fdfdfb" stroke-width="2.2" paint-order="stroke">Ave</text>
<text transform="translate(262 10) rotate(-62)" font-size="17" fill="#5c5c5c" letter-spacing="0.8" font-weight="normal" text-anchor="middle" dy="0.34em" opacity="1" stroke="#fdfdfb" stroke-width="2.2" paint-order="stroke">U</text>
<text transform="translate(345 160) rotate(-62)" font-size="16" fill="#5c5c5c" letter-spacing="0.9" font-weight="normal" text-anchor="middle" dy="0.34em" opacity="1" stroke="#fdfdfb" stroke-width="2.2" paint-order="stroke">Lafayette St</text>
<text transform="translate(13 217) rotate(20)" font-size="16" fill="#5c5c5c" letter-spacing="0.8" font-weight="normal" text-anchor="middle" dy="0.34em" opacity="1" stroke="#fdfdfb" stroke-width="2.2" paint-order="stroke">Pa</text>
<text transform="translate(664 62) rotate(27.8)" font-size="16.5" fill="#4a4a4a" letter-spacing="1.8" font-weight="bold" text-anchor="middle" dy="0.34em" opacity="1" stroke="#fdfdfb" stroke-width="2.2" paint-order="stroke">Encinal Ave</text>
<text transform="translate(753 9) rotate(29)" font-size="17" fill="#5c5c5c" letter-spacing="0.9" font-weight="normal" text-anchor="middle" dy="0.34em" opacity="1" stroke="#fdfdfb" stroke-width="2.2" paint-order="stroke">Ave</text>
<text transform="translate(633 262) rotate(29)" font-size="17" fill="#5c5c5c" letter-spacing="0.9" font-weight="normal" text-anchor="middle" dy="0.34em" opacity="1" stroke="#fdfdfb" stroke-width="2.2" paint-order="stroke">San Jose Ave</text>
<text transform="translate(833 266) rotate(29)" font-size="17" fill="#5c5c5c" letter-spacing="0.9" font-weight="normal" text-anchor="middle" dy="0.34em" opacity="1" stroke="#fdfdfb" stroke-width="2.2" paint-order="stroke">San Antonio Ave</text>
<text transform="translate(1397 15) rotate(31)" font-size="17" fill="#5c5c5c" letter-spacing="0.9" font-weight="normal" text-anchor="middle" dy="0.34em" opacity="1" stroke="#fdfdfb" stroke-width="2.2" paint-order="stroke">Times Way</text>
<text transform="translate(1633 86) rotate(33.5)" font-size="17" fill="#5c5c5c" letter-spacing="0.9" font-weight="normal" text-anchor="middle" dy="0.34em" opacity="1" stroke="#fdfdfb" stroke-width="2.2" paint-order="stroke">Lincoln Ave</text>
<text transform="translate(1572 146) rotate(34.4)" font-size="17" fill="#5c5c5c" letter-spacing="0.9" font-weight="normal" text-anchor="middle" dy="0.34em" opacity="1" stroke="#fdfdfb" stroke-width="2.2" paint-order="stroke">Webb Ave</text>
<text transform="translate(1749 58) rotate(35)" font-size="17" fill="#5c5c5c" letter-spacing="0.9" font-weight="normal" text-anchor="middle" dy="0.34em" opacity="1" stroke="#fdfdfb" stroke-width="2.2" paint-order="stroke">Noble Ave</text>
<text transform="translate(1826 27) rotate(35)" font-size="17" fill="#5c5c5c" letter-spacing="0.9" font-weight="normal" text-anchor="middle" dy="0.34em" opacity="1" stroke="#fdfdfb" stroke-width="2.2" paint-order="stroke">Buena</text>
<text transform="translate(1762 189) rotate(-54.6)" font-size="17" fill="#5c5c5c" letter-spacing="0.9" font-weight="normal" text-anchor="middle" dy="0.34em" opacity="1" stroke="#fdfdfb" stroke-width="2.2" paint-order="stroke">Broadway</text>
<text transform="translate(1889 226) rotate(-54.5)" font-size="17" fill="#5c5c5c" letter-spacing="0.9" font-weight="normal" text-anchor="middle" dy="0.34em" opacity="1" stroke="#fdfdfb" stroke-width="2.2" paint-order="stroke">Pearl St</text>
<text transform="translate(1889 78) rotate(35)" font-size="17" fill="#5c5c5c" letter-spacing="0.9" font-weight="normal" text-anchor="middle" dy="0.34em" opacity="1" stroke="#fdfdfb" stroke-width="2.2" paint-order="stroke">Ave</text>
<text transform="translate(1913 58) rotate(-55)" font-size="17" fill="#5c5c5c" letter-spacing="0.9" font-weight="normal" text-anchor="middle" dy="0.34em" opacity="1" stroke="#fdfdfb" stroke-width="2.2" paint-order="stroke">Tre</text>
<g font-size="16" fill="#4e4e4e" stroke="#fdfdfb" stroke-width="2" paint-order="stroke"><text x="921" y="64">34 ft</text><text x="811" y="99">32 ft</text></g>
<g fill="#666"><circle cx="921" cy="71.500" r="1.300"/><circle cx="810" cy="106.500" r="1.300"/></g>
<path fill="url(#pg)" fill-rule="evenodd" d="M959.2 158.800 a14 14 0 0 1 14 14 c0 8.600 -8.800 17.600 -14 32.400 c-5.200 -14.800 -14 -23.800 -14 -32.400 a14 14 0 0 1 14 -14z M959.2 163.300 a9.400 9.400 0 1 0 0.010 0z"/>
<rect x="0" y="100" width="1920" height="300" fill="url(#fb)"/>
<g><rect x="1824.500" y="4.500" width="50" height="156" fill="#fff" stroke="#dcdcdc" stroke-width="1"/><path d="M1824.500 56.500 h50 M1824.500 108.500 h50" stroke="#e2e2e2" stroke-width="1"/>
<path d="M1838 30.500 h22 M1849 19.500 v22 M1838 82.500 h22" stroke="#6a6a6a" stroke-width="1.300" fill="none"/>
<circle cx="1849" cy="134.500" r="10.500" fill="none" stroke="#6a6a6a" stroke-width="1.300"/><path d="M1849 132 v8.500 M1846.600 132 h2.400 M1846.400 140.500 h5.200" stroke="#6a6a6a" stroke-width="1.400" fill="none"/><circle cx="1849" cy="128.300" r="1.100" fill="#6a6a6a"/></g>
</svg>
<div style="position:absolute;left:-10px;top:91px;width:710px;height:600px;background:#fff;border-radius:80px 260px 0 0 / 80px 230px;filter:blur(48px)"></div>
</div>
<div id="hdr">
<svg width="1920" height="84" viewBox="0 0 1920 84" style="position:absolute;left:0;top:0" font-family="Liberation Sans, sans-serif">
<!-- hamburger -->
<g fill="#fbfaf8"><rect x="32" y="29" width="40" height="3"/><rect x="32" y="39.5" width="40" height="3"/><rect x="32" y="50" width="40" height="3"/></g>
<!-- bulb logo -->
<g fill="none" stroke="#fbfaf8" stroke-width="2.2" stroke-linecap="round" stroke-linejoin="round">
<path d="M118.6 60.5 L118.6 57 C118.6 50 108 46 108 33.4 A17.4 17.4 0 1 1 142.8 33.4 C142.8 46 132.4 50 132.4 57 L132.4 60.5"/>
<path d="M118.6 60.5 h13.8 v7.2 a2.3 2.3 0 0 1 -2.3 2.3 h-9.2 a2.3 2.3 0 0 1 -2.3 -2.3 z"/>
<path d="M118.6 65.2 h13.8" stroke-width="1.8"/>
<path stroke-linecap="butt" d="M125.4 10.6 v3.8 M112.0 14.6 l2.8 3.7 M138.8 14.2 l-2.5 4.1 M103.8 22.8 l3.7 2.1 M147.4 22.8 l-3.700 2.500 M100 35 h4.400 M146.400 35 h3.800"/>
<path d="M123.6 59.5 V33 h9.2 V56" stroke-width="2"/>
<path d="M114 38 h8.6 M114.6 40.6 h8 M115.4 43.4 h7.2 M116.4 46.6 h6.2 M117.6 49.8 h5 M119 53.4 h3.6 M120 57 h2.6" stroke-width="1.5"/>
<path d="M113.4 28.8 v8 M110.4 30 v9 M135.6 31 v15 M138 30 v11 M140.2 30 v6" stroke-width="1.4"/>
</g>
<g fill="#fbfaf8"><rect x="125.4" y="35.4" width="5.4" height="3.1"/><rect x="125.4" y="40.4" width="5.4" height="3.1"/><rect x="125.4" y="45.9" width="5.4" height="3.1"/><rect x="125.4" y="51.3" width="5.4" height="3.9"/></g>
<text x="159.6" y="32.4" font-size="18" fill="#fbfaf8" stroke="#fbfaf8" stroke-width="0.35" textLength="56" lengthAdjust="spacingAndGlyphs">City of</text>
<text x="158.600" y="64.4" font-size="32.4" fill="#fbfaf8" stroke="#fbfaf8" stroke-width="0.5" textLength="245" lengthAdjust="spacingAndGlyphs">INNOVATION</text>
<!-- search -->
<rect x="1158" y="15.5" width="322" height="51" rx="3" fill="#fdfdfc"/>
<g fill="none" stroke="#7a7a7a" stroke-width="1.6"><circle cx="1453.8" cy="37.2" r="6.2"/><path d="M1458.5 42 L1467.3 50.6" stroke-width="3" stroke-linecap="round"/></g>
<!-- bell -->
<path fill="#fbfaf8" d="M1510.4 20.4 c1.6 0 2.8 1.1 2.9 2.6 c5 1.6 7.4 5.8 7.6 11.6 c0.2 7.6 1.8 12.6 6.6 17.2 v2.2 h-34.2 v-2.2 c4.8 -4.600 6.400 -9.600 6.600 -17.200 c0.200 -5.800 2.600 -10 7.600 -11.600 c0.100 -1.500 1.300 -2.600 2.900 -2.600 z M1505 55.6 h10.800 a5.400 5.000 0 0 1 -10.800 0 z"/>
<!-- bar chart -->
<g fill="#fbfaf8"><path d="M1569.4 21 h3.300 v35.800 h35.300 v3 h-38.600 z"/><rect x="1576.3" y="29.200" width="8.200" height="24.200" rx="1.6"/><rect x="1587.2" y="23.200" width="8.200" height="30.200" rx="1.6"/><rect x="1598.900" y="37.200" width="8.200" height="16.200" rx="1.6"/></g>
<!-- map icon -->
<g fill="#fbfaf8">
<path d="M1649.2 34.3 L1659.5 30.2 L1661.3 40 V54.8 L1649.2 60.3 z"/>
<path d="M1662.3 40 L1672.3 40 V58.5 L1662.3 55.5 z"/>
<path d="M1673.5 39 L1675.5 32.800 L1685.800 29.200 V54.800 L1673.5 60.300 z"/>
<path stroke="#3c3733" stroke-width="2.6" paint-order="stroke" d="M1667.4 21.4 a8.2 8.2 0 0 1 8.2 8.2 c0 4.600 -4.400 9.400 -8.200 15.800 c-3.800 -6.400 -8.200 -11.200 -8.200 -15.800 a8.200 8.200 0 0 1 8.200 -8.200 z"/>
</g>
<circle cx="1667.400" cy="29.600" r="3.200" fill="#3c3733"/>
<!-- grid -->
<g fill="#fbfaf8">
<rect x="1728.300" y="23.800" width="10.100" height="10"/><rect x="1740.600" y="23.800" width="10.100" height="10"/><rect x="1752.900" y="23.800" width="10.100" height="10"/>
<rect x="1728.300" y="36" width="10.100" height="10"/><rect x="1740.600" y="36" width="10.100" height="10"/><rect x="1752.900" y="36" width="10.100" height="10"/>
<rect x="1728.300" y="48" width="10.100" height="10"/><rect x="1740.600" y="48" width="10.100" height="10"/><rect x="1752.900" y="48" width="10.100" height="10"/>
</g>
<!-- avatar -->
<circle cx="1828.600" cy="41" r="26.500" fill="#ffffff"/>
<text x="1828.600" y="47.600" font-size="18.500" fill="#0b6aa5" text-anchor="middle">SC</text>
<path d="M1869.800 37.800 h15.200 l-7.600 9.200 z" fill="#fbfaf8"/>
</svg>
</div>
<!--TITLE SHAPES-->
<div class="abs" style="left:226px;top:408px;width:1px;height:28px;background:#e0e0e0"></div>
<!--SIDEBAR-->
<div class="abs" style="left:401px;top:490px;width:2px;height:590px;background:#dedede"></div>
<svg class="abs" style="left:350px;top:520px" width="28" height="22" viewBox="0 0 28 22"><g fill="none" stroke="#787878" stroke-width="3" stroke-linejoin="miter"><path d="M11.500 3.500 L5 11 L11.500 18.500"/><path d="M23 3.500 L16.500 11 L23 18.500"/></g></svg>
<div class="abs" style="left:14px;top:850.500px;width:375px;height:71.500px;background:#3c3733;border-radius:7px"></div>
<!--MAIN-->
<div class="btn" style="left:419px;top:599px;width:103px;height:51.500px"></div>
<div class="btn" style="left:529px;top:599px;width:54px;height:51.500px"></div>
<svg class="abs" style="left:529px;top:599px" width="54" height="52" viewBox="0 0 54 52"><path fill="#8b8b8b" d="M23 14.500 h7.400 v10 h5.700 l-9.400 8.800 l-9.400 -8.800 h5.700 z M14 34.200 h25.400 v4.200 h-25.400 z"/></svg>
<!-- toggle -->
<div class="abs" style="left:884px;top:601.500px;width:61px;height:40px;border-radius:20px;background:#f4f4f4;border:1px solid #d9d9d9"></div>
<div class="abs" style="left:883.500px;top:601px;width:37px;height:41px;border-radius:20px;background:#fff;border:1.500px solid #cfc9c6;box-shadow:0 1px 3px rgba(0,0,0,0.4)"></div>
<!-- search -->
<div class="abs" style="left:1173px;top:599px;width:354px;height:52px;background:#fff;border:1px solid #cfcfcf;border-radius:3px"></div>
<svg class="abs" style="left:1490px;top:610px" width="32" height="32" viewBox="0 0 32 32"><g fill="none" stroke="#7a7a7a"><circle cx="12.500" cy="12" r="6.600" stroke-width="1.700"/><path d="M17.600 17.200 L26 25.600" stroke-width="3.200" stroke-linecap="round"/></g></svg>
<!-- filter -->
<div class="btn" style="left:1533px;top:599px;width:54px;height:51.500px"></div>
<svg class="abs" style="left:1533px;top:599px" width="54" height="52" viewBox="0 0 54 52"><path fill="#858585" d="M16 13 h22 l-8.300 10.500 v11 l-5.400 3.500 v-14.500 z"/></svg>
<!-- sort -->
<div class="btn" style="left:1594px;top:599px;width:88px;height:51.500px"></div>
<svg class="abs" style="left:1594px;top:599px" width="88" height="52" viewBox="0 0 88 52"><g fill="none" stroke="#858585" stroke-width="2.400"><path d="M20.500 12 v21 M14.800 27.500 l5.700 6 l5.700 -6"/><path d="M32.500 32.500 v-21 M26.800 17 l5.700 -6 l5.700 6"/></g><path fill="#858585" d="M54 23 h14 l-7 8 z"/></svg>
<div class="abs" style="left:1689px;top:599px;width:1px;height:52px;background:#d8d8d8"></div>
<!-- view buttons -->
<div class="btn" style="left:1697px;top:595.500px;width:192px;height:51.500px"></div>
<div class="abs" style="left:1764px;top:594px;width:62px;height:53.500px;background:#0572ce;border-radius:3px 0 0 3px"></div>
<svg class="abs" style="left:1697px;top:594px" width="192" height="53" viewBox="0 0 192 53">
<g fill="#0b6aa5"><rect x="22" y="15" width="5.600" height="5.200"/><rect x="22" y="25" width="5.600" height="5.200"/><rect x="22" y="35.200" width="5.600" height="5.200"/><rect x="31" y="16.200" width="16.500" height="2.800"/><rect x="31" y="26.200" width="16.500" height="2.800"/><rect x="31" y="36.400" width="16.500" height="2.800"/></g>
<g fill="#fff"><path fill-rule="evenodd" d="M89 14 h25.600 v26 h-25.600 z M91 21.500 h6 v4.400 h-6 z M98.800 21.500 h6 v4.400 h-6 z M106.600 21.500 h6 v4.400 h-6 z M91 27.700 h6 v4.400 h-6 z M98.800 27.700 h6 v4.400 h-6 z M106.600 27.700 h6 v4.400 h-6 z M91 33.900 h6 v4.400 h-6 z M98.800 33.900 h6 v4.400 h-6 z M106.600 33.900 h6 v4.400 h-6 z"/></g>
<path fill="#0b6aa5" fill-rule="evenodd" d="M163.300 14.500 a8.600 8.600 0 0 1 8.600 8.600 c0 5.500 -5 10.500 -8.600 17 c-3.600 -6.500 -8.600 -11.500 -8.600 -17 a8.600 8.600 0 0 1 8.600 -8.600 z M163.300 19 a4 4 0 1 0 0.010 0 z"/>
</svg>
<!-- table -->
<div class="abs" style="left:419px;top:657.500px;width:1480px;height:64.500px;background:#e7f4fd"></div>
<div class="abs" style="left:419px;top:721.500px;width:1480px;height:137px;border:2px dotted #4a4a4a"></div>
<div class="abs" style="left:1712px;top:756px;width:1px;height:62px;background:#e6e6e6"></div>
<div class="abs" style="left:1787px;top:762.500px;width:54.500px;height:55.500px;background:#0572ce;border-radius:3px"></div>
<svg class="abs" style="left:1787px;top:762px" width="56" height="58" viewBox="0 0 56 58"><g fill="#fff"><circle cx="28.900" cy="16.700" r="4.100"/><circle cx="28.900" cy="28.800" r="4.100"/><circle cx="28.900" cy="40.900" r="4.100"/></g></svg>
<!-- popup -->
<div class="abs" style="left:1664px;top:819px;width:177px;height:119px;background:#fff;border:1px solid #cfcfcf;box-shadow:1px 2px 5px rgba(0,0,0,0.3)"></div>
<div class="abs" style="left:1665px;top:823px;width:175px;height:57px;background:#eeeeee"></div>
<!--CALLOUT-->
<svg class="abs" style="left:360px;top:828px" width="372" height="234" viewBox="360 828 372 234">
<defs><linearGradient id="cg" x1="0" y1="0" x2="1" y2="0"><stop offset="0" stop-color="#2f9f94"/><stop offset="0.55" stop-color="#2d9c92"/><stop offset="1" stop-color="#33a397"/></linearGradient>
<linearGradient id="cl2" x1="0" y1="0" x2="1" y2="0"><stop offset="0" stop-color="#48baa5"/><stop offset="0.7" stop-color="#44b5a2"/><stop offset="1" stop-color="#3dad9d"/></linearGradient>
<clipPath id="cc"><rect x="364" y="870.200" width="363.300" height="187.800"/></clipPath></defs>
<circle cx="430" cy="842" r="9.300" fill="#3fb09f"/>
<circle cx="409" cy="872" r="20.800" fill="#46b8a4"/>
<rect x="364" y="870.200" width="363.300" height="187.800" fill="url(#cg)"/>
<g clip-path="url(#cc)">
<path d="M364 870 H468 C480 900 486 915 492 930 C505 960 528 985 534 1010 C538 1030 536 1045 537 1058 H364z" fill="url(#cl2)"/>
<path d="M364 1017 C378 1022 392 1030 400 1042 C405 1050 408 1054 410 1058 H364z" fill="#2f9d92" opacity="0.85"/>
<ellipse cx="648" cy="1050" rx="34" ry="16" fill="#40b09f" opacity="0.75"/>
<g fill="none" stroke="#fff" stroke-opacity="0.07" stroke-width="1.500">
<path d="M560 870 C575 900 600 905 620 930 C640 955 600 985 630 1010 C650 1030 690 1020 727 1040"/>
<path d="M600 870 C612 890 640 892 655 915 C670 940 645 965 668 985 C690 1002 710 995 727 1005"/>
<path d="M650 870 C660 885 685 885 695 905 C705 925 690 945 727 960"/>
<path d="M520 900 C540 930 560 960 575 1000 C585 1030 580 1045 590 1058"/>
<path d="M690 870 C700 880 715 880 727 895"/>
</g>
</g>
</svg>
<!--TEXTS-->
<div class="t" style="left:27.90px;top:198.59px;font-size:41.6px;letter-spacing:0.232px;color:#2e2b28">Business</div>
<div class="t" style="left:28.60px;top:265.81px;font-size:26.8px;letter-spacing:0.750px;">Brandon&#x27;s Place</div>
<div class="t" style="left:29.60px;top:298.28px;font-size:22px;letter-spacing:0.166px;">1217 Walnut St</div>
<div class="t" style="left:30.60px;top:326.38px;font-size:22px;letter-spacing:0.274px;">Alameda California</div>
<div class="t" style="left:29.60px;top:354.48px;font-size:22px;letter-spacing:0.802px;">94501</div>
<div class="t" style="left:29.50px;top:410.28px;font-size:22px;letter-spacing:1.012px;">BUS-OCT-00005</div>
<div class="t" style="left:250.90px;top:410.28px;font-size:22px;letter-spacing:0.585px;">Sole Proprietor</div>
<div class="t" style="left:37.50px;top:588.48px;font-size:22px;letter-spacing:0.615px;">Overview</div>
<div class="t" style="left:37.50px;top:660.68px;font-size:22px;letter-spacing:0.458px;">Business Details</div>
<div class="t" style="left:37.50px;top:732.18px;font-size:22px;letter-spacing:0.681px;">Owners</div>
<div class="t" style="left:37.50px;top:804.68px;font-size:22px;letter-spacing:0.690px;">Locations</div>
<div class="t" style="left:32.70px;top:876.38px;font-size:22px;letter-spacing:0.639px;color:#fff">Licenses</div>
<div class="t" style="left:417.50px;top:529.61px;font-size:42.4px;letter-spacing:-0.150px;color:#2e2b28">Business Licenses</div>
<div class="t" style="left:442.00px;top:613.88px;font-size:22px;letter-spacing:0.617px;">Apply</div>
<div class="t" style="left:962.00px;top:610.88px;font-size:22px;letter-spacing:0.512px;color:#58544f">Show All Statuses</div>
<div class="t" style="left:1182.50px;top:614.38px;font-size:22px;letter-spacing:0.206px;font-style:italic;color:#58544f">Search</div>
<div class="t med" style="left:441.50px;top:678.88px;font-size:22px;letter-spacing:0.818px;">License</div>
<div class="t med" style="left:783.50px;top:678.88px;font-size:22px;letter-spacing:0.785px;">License Period</div>
<div class="t med" style="left:985.75px;top:678.88px;font-size:22px;letter-spacing:0.924px;">Business Information</div>
<div class="t med" style="left:1255.25px;top:678.88px;font-size:22px;letter-spacing:1.094px;">Description</div>
<div class="t med" style="left:1423.20px;top:678.78px;font-size:22px;letter-spacing:0.030px;">Fees</div>
<div class="t med" style="left:1712.70px;top:678.78px;font-size:22px;letter-spacing:0.959px;">Actions</div>
<div class="t med2" style="left:441.50px;top:748.38px;font-size:22px;letter-spacing:1.458px;">BusLic-NOV2020-0069</div>
<div class="t" style="left:441.50px;top:776.38px;font-size:22px;letter-spacing:0.435px;">Restaurant Business License</div>
<div class="t" style="left:441.50px;top:810.13px;font-size:22px;letter-spacing:0.440px;color:#d6002a">Expired</div>
<div class="t" style="left:525.25px;top:810.13px;font-size:22px;letter-spacing:0.203px;">11/7/20</div>
<div class="t" style="left:783.50px;top:737.63px;font-size:22px;letter-spacing:0.720px;">Effective</div>
<div class="t" style="left:783.50px;top:765.63px;font-size:22px;letter-spacing:-0.069px;">12/7/19</div>
<div class="t" style="left:783.50px;top:793.13px;font-size:22px;letter-spacing:0.545px;">Expiration</div>
<div class="t" style="left:783.50px;top:820.88px;font-size:22px;letter-spacing:0.203px;">11/7/20</div>
<div class="t" style="left:985.75px;top:737.63px;font-size:22px;letter-spacing:0.497px;">Brandon&#x27;s Place</div>
<div class="t" style="left:985.75px;top:765.63px;font-size:22px;letter-spacing:0.024px;">1217 WALNUT ST,</div>
<div class="t" style="left:986.75px;top:793.13px;font-size:22px;letter-spacing:0.221px;">ALAMEDA, California,</div>
<div class="t" style="left:985.75px;top:820.88px;font-size:22px;letter-spacing:1.015px;">94501</div>
<div class="t" style="left:1423.20px;top:762.88px;font-size:22px;letter-spacing:-0.236px;">Fees</div>
<div class="t" style="left:1423.20px;top:795.48px;font-size:22px;letter-spacing:0.101px;">Paid</div>
<div class="t" style="left:1539.30px;top:762.88px;font-size:22px;letter-spacing:0.860px;">268.45 USD</div>
<div class="t med2" style="left:1715.60px;top:841.58px;font-size:22px;letter-spacing:0.052px;">Renew</div>
<div class="t med2" style="left:1716.60px;top:898.18px;font-size:22px;letter-spacing:0.682px;">Amend</div>
<div class="t cal" style="left:378.90px;top:884.45px;font-size:26.4px;letter-spacing:0.682px;color:#fff">The system monitors</div>
<div class="t cal" style="left:377.90px;top:918.45px;font-size:26.4px;letter-spacing:0.782px;color:#fff">pending expiration and</div>
<div class="t cal" style="left:378.90px;top:951.55px;font-size:26.4px;letter-spacing:0.694px;color:#fff">sends renewal notices</div>
<div class="t cal" style="left:377.90px;top:984.65px;font-size:26.4px;letter-spacing:0.753px;color:#fff">based on your agency’s</div>
<div class="t cal" style="left:377.90px;top:1018.25px;font-size:26.4px;letter-spacing:0.649px;color:#fff">rules</div>
</body>
</html>
